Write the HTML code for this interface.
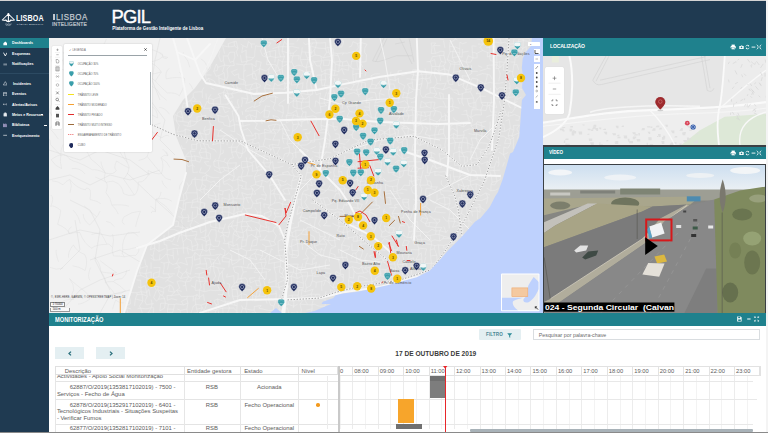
<!DOCTYPE html>
<html><head><meta charset="utf-8">
<style>
*{margin:0;padding:0;box-sizing:border-box}
html,body{width:768px;height:433px;overflow:hidden;background:#fff;font-family:"Liberation Sans",sans-serif}
.abs{position:absolute}
#top{left:0;top:0;width:768px;height:1px;background:#d4d4d4}
#hdr{left:0;top:1px;width:766px;height:37px;background:#1f3a51}
#rstrip{left:766px;top:0;width:2px;height:433px;background:#f4f4f4}
#bstrip{left:0;top:432px;width:768px;height:1px;background:#8a8a8a}
#side{left:0;top:38px;width:49px;height:394px;background:#1f3a51}
.mi{position:absolute;left:0;width:49px;height:10px;color:#fff;font-size:3.65px;line-height:10px;font-weight:bold}
.mi .t{position:absolute;left:12.5px;top:0;white-space:nowrap}
.mi .ic{position:absolute;left:3px;top:0;width:5px;text-align:center;font-size:5px}
#map{left:49px;top:38px;width:494px;height:275px;overflow:hidden;background:#e3e3e3}
#rp{left:543px;top:38px;width:223px;height:275px;background:#fff}
.ph{position:absolute;left:0;width:223px;background:#1f818d;color:#fff;font-weight:bold;font-size:6px}
#mon{left:49px;top:313px;width:717px;height:119px;background:#fff;overflow:hidden}
#monh{left:0;top:0;width:717px;height:12.5px;background:#1f818d;color:#fff;font-weight:bold;font-size:6px}
</style></head><body>
<div id="top" class="abs"></div>
<div id="hdr" class="abs">
  <svg class="abs" style="left:0;top:7px" width="20" height="20" viewBox="0 0 20 20">
    <circle cx="8.4" cy="5.9" r="1" fill="#fff"/>
    <path d="M8.4,6 L2.3,12 L5.6,12.6 M8.4,6 L14.5,12 L11.2,12.6 M8.4,6 V13.6" fill="none" stroke="#fff" stroke-width="1.05" stroke-linejoin="round"/>
    <path d="M5.4,11.6 Q8.4,15.6 11.4,11.6" fill="none" stroke="#fff" stroke-width="1.3"/>
    <path d="M5.2,15.9 q0.8,0.9 1.6,0 q0.8,0.9 1.6,0 q0.8,0.9 1.6,0 q0.8,0.9 1.6,0 M5.8,17 q0.8,0.7 1.6,0 q0.8,0.7 1.6,0 q0.8,0.7 1.6,0" fill="none" stroke="#dfe4ea" stroke-width="0.5"/>
  </svg>
  <div class="abs" style="left:16.3px;top:11.6px;font-size:8.6px;font-weight:bold;color:#fff;letter-spacing:0.15px;line-height:10px;transform:scaleX(0.83);transform-origin:0 0">LISBOA</div>
  <div class="abs" style="left:16.8px;top:21.7px;font-size:2.1px;color:#c9d0d6;letter-spacing:0.36px;line-height:2.2px;white-space:nowrap;font-weight:bold">CÂMARA MUNICIPAL</div>
  <div class="abs" style="left:53px;top:12.6px;width:2px;height:6.4px;background:#c3c9cf"></div><div class="abs" style="left:55.5px;top:12.2px;font-size:8.8px;color:#c3c9cf;letter-spacing:0.6px;line-height:9px;transform:scaleX(0.9);-webkit-text-stroke:0.25px #c3c9cf;transform-origin:0 0">LISBOA</div>
  <div class="abs" style="left:52.4px;top:20.8px;font-size:5.2px;color:#c3c9cf;letter-spacing:0.2px;line-height:5px;transform:scaleX(0.97);-webkit-text-stroke:0.2px #c3c9cf;transform-origin:0 0">INTELIGENTE</div>
  <div class="abs" style="left:111.5px;top:4.8px;font-size:18.4px;color:#fff;line-height:22px;letter-spacing:-0.8px;-webkit-text-stroke:0.4px #fff">PGIL</div>
  <div class="abs" style="left:112.2px;top:25.2px;font-size:4.45px;font-weight:bold;color:#fff;line-height:5px;white-space:nowrap">Plataforma de Gestão Inteligente de Lisboa</div>
</div>
<div id="rstrip" class="abs"></div>
<div id="side" class="abs">
<div class="abs" style="left:0;top:0;width:49px;height:10.2px;background:#1f818d"></div>
<div class="abs" style="left:0;top:35.2px;width:49px;height:0.6px;background:#2c4a62"></div>
<div class="mi" style="top:0.2px"><svg class="abs" style="left:2.6px;top:2.8px" width="4.6" height="4.6" viewBox="0 0 6 6"><path d="M0.5 3 L3 0.6 L5.5 3 V5.5 H0.5 Z" fill="#fff"/></svg><span class="t" style="left:12px">Dashboards</span></div>
<div class="mi" style="top:10.8px"><svg class="abs" style="left:2.6px;top:2.8px" width="4.6" height="4.6" viewBox="0 0 6 6"><path d="M0.6 0.8 L3 5.2 L5.4 0.8" fill="none" stroke="#fff" stroke-width="1.1"/></svg><span class="t" style="left:12px">Esquemas</span></div>
<div class="mi" style="top:20.9px"><svg class="abs" style="left:2.6px;top:2.8px" width="4.6" height="4.6" viewBox="0 0 6 6"><path d="M0.5 2.6 H5.5 M0.5 3.8 H5.5" stroke="#cfd6dc" stroke-width="0.7"/></svg><span class="t" style="left:12px">Notificações</span></div>
<div class="mi" style="top:40.5px"><svg class="abs" style="left:2.6px;top:2.8px" width="4.6" height="4.6" viewBox="0 0 6 6"><path d="M3 0.8 L5.6 5.2 H0.4 Z" fill="none" stroke="#e6eaee" stroke-width="0.7"/></svg><span class="t" style="left:13px">Incidentes</span></div>
<div class="mi" style="top:51.0px"><svg class="abs" style="left:2.6px;top:2.8px" width="4.6" height="4.6" viewBox="0 0 6 6"><rect x="0.8" y="1" width="4.4" height="4.2" fill="none" stroke="#e6eaee" stroke-width="0.7"/><path d="M0.8 2.2 H5.2" stroke="#e6eaee" stroke-width="0.7"/></svg><span class="t" style="left:12px">Eventos</span></div>
<div class="mi" style="top:61.5px"><svg class="abs" style="left:2.6px;top:2.8px" width="4.6" height="4.6" viewBox="0 0 6 6"><path d="M0.3 3 H5.7 M0.3 3 L1.4 2 M0.3 3 L1.4 4 M5.7 3 L4.6 2 M5.7 3 L4.6 4" stroke="#e6eaee" stroke-width="0.6" fill="none"/></svg><span class="t" style="left:12px">Alertas/Avisos</span></div>
<div class="mi" style="top:71.5px"><svg class="abs" style="left:2.6px;top:2.8px" width="4.6" height="4.6" viewBox="0 0 6 6"><path d="M1 2 H5 V5.4 H1 Z M2 2 V1 H4 V2" fill="#e6eaee" stroke="#e6eaee" stroke-width="0.5"/></svg><span class="t" style="left:12px">Meios e Recursos</span></div>
<div class="mi" style="top:82.2px"><svg class="abs" style="left:2.6px;top:2.8px" width="4.6" height="4.6" viewBox="0 0 6 6"><path d="M0.8 0.8 V5.4 M2.2 1.2 V5.4 M3.6 0.8 V5.4 M5 1.6 V5.4" stroke="#c9b8e8" stroke-width="1"/></svg><span class="t" style="left:12px">Biblioteca</span></div>
<div class="mi" style="top:92.6px"><svg class="abs" style="left:2.6px;top:2.8px" width="4.6" height="4.6" viewBox="0 0 6 6"><path d="M0.3 3 H5.7" stroke="#e6eaee" stroke-width="0.9"/></svg><span class="t" style="left:12px">Enriquecimento</span></div>
<div class="abs" style="left:40.5px;top:76.4px;width:2.5px;height:0.5px;background:#fff"></div>
<div class="abs" style="left:44px;top:86.8px;width:3px;height:0.6px;background:#fff"></div>
</div>
<div id="map" class="abs"><!--MAP-->
<svg class="abs" style="left:0;top:0" width="494" height="275" viewBox="49 38 494 275">
<rect x="49" y="38" width="494" height="275" fill="#e1e1e1"/>
<polygon points="49.0,38.0 226.0,38.0 211.6,63.8 204.4,75.2 195.0,88.0 183.0,100.0 173.0,116.0 176.0,136.0 186.0,160.0 186.0,173.0 179.0,199.0 173.0,225.0 147.0,245.0 137.0,271.0 124.0,313.0 49.0,313.0" fill="#f1f1f1"/>
<path d="M47.3 51.8L47.2 56.1M47.4 59.4L48.7 66.8M48.7 66.8L47.6 69.1M47.6 91.7L48.3 99.0M48.3 125.7L48.8 129.2M48.7 158.6L47.7 162.2M47.7 162.2L47.2 167.4M48.6 213.4L47.2 217.3M47.2 217.3L47.7 220.5M47.3 227.6L47.6 230.2M47.6 230.2L48.6 237.2M48.6 237.2L47.4 240.2M48.2 253.9L48.5 260.3M47.8 267.0L48.0 272.5M48.6 313.6L53.0 313.8M48.6 313.6L47.5 319.1M53.0 313.8L57.5 313.3M53.0 313.8L53.9 320.1M53.9 320.1L59.2 317.8M57.5 313.3L62.7 314.7M57.5 313.3L59.2 317.8M59.2 317.8L63.8 319.0M62.7 314.7L67.7 315.5M63.8 319.0L68.3 318.3M67.7 315.5L72.6 313.5M67.7 315.5L68.3 318.3M68.3 318.3L71.5 318.0M72.6 313.5L78.0 313.8M72.6 313.5L71.5 318.0M71.5 318.0L75.7 319.7M78.0 313.8L79.6 313.8M78.0 313.8L75.7 319.7M75.7 319.7L81.2 316.9M79.6 313.8L81.2 316.9M83.9 314.2L87.5 317.2M87.5 317.2L91.6 317.3M95.5 313.7L95.7 320.2M99.5 317.2L105.0 317.6M114.3 313.2L119.7 315.7M119.7 315.7L117.0 318.3M117.0 318.3L122.6 318.4M123.7 315.3L128.8 315.3M123.7 315.3L122.6 318.4M127.5 301.9L127.0 305.3M127.0 305.3L130.5 303.7M126.2 307.7L131.1 308.9M126.2 307.7L128.8 315.3M128.8 315.3L130.0 313.3M130.3 292.6L136.9 292.7M130.1 298.5L130.5 303.7M130.0 313.3L132.3 317.4M136.2 276.0L141.3 275.6M136.6 279.9L140.7 280.2M138.0 286.9L140.8 287.8M136.9 292.7L141.2 291.8M136.9 292.7L137.0 294.7M137.0 294.7L142.0 294.1M137.0 294.7L135.4 298.8M135.4 298.8L142.9 301.0M135.4 298.8L134.6 305.8M137.7 308.6L140.6 308.2M135.2 314.5L142.7 314.2M135.2 314.5L137.7 320.2M141.0 263.6L140.0 268.3M140.0 268.3L147.5 266.2M140.0 268.3L139.5 272.7M139.5 272.7L145.8 273.6M139.5 272.7L141.3 275.6M141.3 275.6L147.0 278.2M140.7 280.2L140.8 287.8M140.8 287.8L145.1 285.6M140.8 287.8L141.2 291.8M141.2 291.8L146.7 292.4M141.2 291.8L142.0 294.1M142.0 294.1L147.3 296.3M142.0 294.1L142.9 301.0M142.9 301.0L139.5 306.1M139.5 306.1L140.6 308.2M140.6 308.2L146.1 308.8M140.6 308.2L142.7 314.2M142.7 314.2L142.0 317.2M142.0 317.2L143.9 318.0M144.7 259.1L145.7 265.1M145.7 265.1L147.5 266.2M147.5 266.2L145.8 273.6M145.8 273.6L151.2 271.9M145.8 273.6L147.0 278.2M147.0 278.2L151.2 279.0M147.0 278.2L146.1 282.3M146.1 282.3L150.0 281.0M145.1 285.6L146.7 292.4M146.7 292.4L148.8 289.1M146.7 292.4L147.3 296.3M147.3 296.3L144.9 301.2M144.9 301.2L146.5 304.8M146.5 304.8L152.1 303.8M146.1 308.8L151.2 307.8M145.8 313.6L148.4 312.6M145.8 313.6L143.9 318.0M143.9 318.0L148.5 318.6M151.4 244.7L154.8 244.0M151.4 244.7L150.3 249.9M150.3 249.9L154.5 248.1M150.4 254.8L153.0 256.1M150.6 258.2L154.1 260.2M151.1 262.5L151.0 269.0M151.2 271.9L151.2 279.0M151.2 279.0L153.5 278.1M151.2 279.0L150.0 281.0M150.3 288.1L154.2 286.4M148.8 289.1L150.1 296.2M151.2 299.7L152.1 303.8M152.1 303.8L153.9 303.6M152.1 303.8L151.2 307.8M151.2 307.8L153.9 307.8M151.2 307.8L148.4 312.6M148.4 312.6L153.1 314.0M148.4 312.6L148.5 318.6M148.5 318.6L154.5 318.8M155.5 238.6L154.8 244.0M154.8 244.0L159.2 243.4M154.8 244.0L154.5 248.1M154.5 248.1L159.0 251.5M154.5 248.1L153.0 256.1M153.0 256.1L154.1 260.2M154.1 260.2L159.3 259.9M153.4 267.7L160.1 267.5M153.6 273.3L159.5 271.6M153.6 273.3L153.5 278.1M153.5 278.1L158.9 276.6M154.8 280.3L154.2 286.4M154.2 286.4L158.3 286.7M154.2 286.4L156.4 290.4M156.4 290.4L153.7 297.4M153.7 297.4L156.3 301.1M156.3 301.1L158.7 299.2M153.9 307.8L153.1 314.0M153.1 314.0L158.3 313.7M154.5 318.8L160.5 319.0M160.6 240.5L159.2 243.4M159.2 243.4L159.0 251.5M159.0 251.5L165.1 248.5M160.1 254.0L159.3 259.9M159.3 259.9L162.3 258.1M160.4 262.1L164.1 263.1M160.1 267.5L159.5 271.6M159.5 271.6L158.9 276.6M158.9 276.6L163.2 278.0M158.3 286.7L163.8 288.1M158.3 286.7L157.7 289.8M157.7 289.8L163.8 292.4M157.7 289.8L160.2 294.7M160.2 294.7L162.3 295.3M160.2 294.7L158.7 299.2M158.7 299.2L164.5 298.5M160.7 303.2L165.4 303.2M160.7 303.2L159.9 310.8M159.9 310.8L164.4 308.2M158.3 313.7L165.6 314.2M158.3 313.7L160.5 319.0M164.1 235.3L163.9 240.4M163.9 240.4L169.0 240.3M163.9 240.4L164.3 244.5M164.3 244.5L166.8 245.1M165.6 254.4L167.2 254.5M165.6 254.4L162.3 258.1M164.1 263.1L169.2 262.1M164.1 263.1L164.2 267.3M164.2 267.3L163.1 273.7M163.1 273.7L168.0 273.9M163.2 278.0L170.0 277.1M165.1 282.1L167.3 280.3M163.8 288.1L170.0 284.9M163.8 288.1L163.8 292.4M163.8 292.4L162.3 295.3M162.3 295.3L164.5 298.5M164.5 298.5L165.4 303.2M165.4 303.2L168.6 304.3M165.4 303.2L164.4 308.2M165.6 314.2L167.5 312.6M165.6 314.2L165.1 318.6M165.1 318.6L167.6 320.0M168.8 229.7L174.9 229.7M168.8 229.7L168.8 236.9M168.8 236.9L175.0 236.9M169.0 240.3L172.3 241.7M166.8 245.1L167.1 250.2M167.1 250.2L173.0 248.6M167.1 250.2L167.2 254.5M167.2 254.5L173.2 255.8M167.2 254.5L168.0 258.3M168.0 258.3L169.2 262.1M169.2 262.1L172.8 264.5M169.2 262.1L167.3 269.7M168.0 273.9L174.9 273.8M168.0 273.9L170.0 277.1M170.0 277.1L172.8 275.6M170.0 277.1L167.3 280.3M167.3 280.3L173.8 283.1M170.0 284.9L172.6 286.8M170.0 284.9L168.6 291.1M168.6 291.1L174.5 292.1M167.1 295.5L171.3 295.6M167.1 295.5L167.3 300.3M167.3 300.3L171.4 298.7M168.6 304.3L174.4 304.5M168.6 304.3L167.5 309.0M167.5 309.0L173.6 309.2M167.5 309.0L167.5 312.6M167.5 312.6L172.6 312.9M174.8 114.3L176.9 115.6M174.8 114.3L174.9 120.5M174.6 221.2L178.8 221.2M175.0 226.7L178.0 226.3M174.9 229.7L179.6 231.8M175.0 236.9L172.3 241.7M172.2 243.9L178.6 245.7M173.0 248.6L177.0 248.3M173.0 248.6L173.2 255.8M173.2 255.8L173.9 259.6M172.8 264.5L176.4 263.5M174.3 268.7L179.2 266.7M172.6 286.8L174.5 292.1M174.5 292.1L176.6 290.3M174.5 292.1L171.3 295.6M171.3 295.6L179.5 294.4M171.4 298.7L177.1 300.0M174.4 304.5L176.3 303.9M174.4 304.5L173.6 309.2M173.6 309.2L172.6 312.9M172.6 312.9L172.6 319.9M172.6 319.9L176.7 320.2M177.6 112.8L180.9 110.9M177.6 112.8L176.9 115.6M176.9 115.6L183.0 118.0M176.9 115.6L176.3 121.0M176.3 121.0L182.9 121.5M176.3 121.0L179.2 125.5M179.2 125.5L177.3 131.6M177.3 131.6L184.1 130.9M177.3 131.6L179.3 135.2M179.3 135.2L181.8 134.2M179.5 200.5L183.9 200.5M178.1 206.5L183.0 209.6M178.3 216.6L183.2 217.8M178.8 221.2L178.0 226.3M178.0 226.3L182.8 227.8M179.6 231.8L181.5 230.1M179.6 231.8L179.0 236.5M179.0 236.5L181.4 234.3M179.0 236.5L177.3 242.2M177.0 248.3L183.2 248.0M177.0 248.3L178.1 255.4M178.9 258.2L176.4 263.5M176.4 263.5L181.0 262.5M176.4 263.5L179.2 266.7M179.2 266.7L180.7 267.8M179.2 266.7L178.7 271.3M178.7 271.3L182.6 273.8M178.7 271.3L177.1 275.5M177.1 275.5L180.7 278.4M177.0 281.4L180.9 280.8M177.0 281.4L179.6 288.2M179.6 288.2L176.6 290.3M176.6 290.3L181.8 291.3M176.6 290.3L179.5 294.4M179.5 294.4L181.3 296.7M176.3 303.9L183.6 304.9M177.4 309.0L180.6 310.5M179.6 313.1L176.7 320.2M176.7 320.2L182.1 316.9M183.4 103.1L185.9 103.2M183.4 103.1L182.1 108.2M182.1 108.2L185.8 106.1M180.9 110.9L183.0 118.0M183.0 118.0L182.9 121.5M182.9 121.5L188.7 122.4M183.4 125.0L187.8 126.2M184.1 130.9L185.3 128.9M181.8 134.2L185.1 136.0M181.2 145.2L182.5 148.5M182.5 148.5L185.7 148.9M183.4 194.4L185.6 192.9M183.4 194.4L183.9 200.5M183.9 200.5L187.2 199.0M183.9 200.5L183.3 204.8M183.3 204.8L185.9 202.7M183.3 204.8L183.0 209.6M183.0 209.6L185.2 209.8M183.0 209.6L181.0 213.6M181.0 213.6L183.2 217.8M183.2 217.8L188.8 217.2M183.2 217.8L181.5 220.4M181.5 220.4L182.8 227.8M182.8 227.8L188.2 227.9M182.8 227.8L181.5 230.1M181.5 230.1L181.4 234.3M181.4 234.3L185.9 236.1M181.4 234.3L183.1 242.2M183.1 242.2L186.5 238.5M183.1 242.2L183.5 244.5M183.5 244.5L183.2 248.0M183.2 248.0L186.9 247.9M183.2 248.0L183.7 253.5M181.0 262.5L187.5 264.9M182.6 273.8L185.9 271.6M182.6 273.8L180.7 278.4M180.7 278.4L188.5 276.8M180.9 280.8L185.5 282.1M182.9 285.8L185.6 285.3M181.3 296.7L187.5 296.4M181.3 301.5L186.8 298.6M181.3 301.5L183.6 304.9M183.6 304.9L187.9 303.1M180.6 310.5L186.9 309.0M180.6 310.5L180.6 314.0M180.6 314.0L182.1 316.9M185.9 103.2L190.3 100.6M185.9 103.2L185.8 106.1M187.2 112.4L193.4 112.4M187.2 112.4L188.8 117.1M188.8 117.1L190.4 117.4M188.7 122.4L190.3 120.8M188.7 122.4L187.8 126.2M187.8 126.2L190.1 126.5M185.3 128.9L193.1 131.6M185.3 128.9L185.1 136.0M185.1 136.0L189.7 135.9M187.8 139.7L186.1 143.3M188.9 152.3L185.3 156.4M185.3 156.4L191.8 156.8M185.3 156.4L186.4 163.7M186.4 163.7L191.2 160.3M186.4 163.7L188.2 166.6M188.2 166.6L192.5 165.0M186.9 182.5L188.6 186.3M188.6 186.3L191.3 183.7M188.6 186.3L186.9 191.0M186.9 191.0L185.6 192.9M185.6 192.9L191.0 192.9M185.6 192.9L187.2 199.0M185.9 202.7L192.9 202.1M185.9 202.7L185.2 209.8M187.8 214.5L188.8 217.2M188.8 217.2L187.9 221.6M187.9 221.6L192.6 220.1M188.2 227.9L185.6 229.3M185.6 229.3L185.9 236.1M185.9 236.1L191.7 235.6M185.9 236.1L186.5 238.5M186.5 238.5L191.2 240.8M188.3 246.1L186.9 247.9M186.9 247.9L192.5 250.7M186.9 247.9L188.5 254.3M185.4 258.1L192.4 257.0M185.4 258.1L187.5 264.9M186.9 268.5L185.9 271.6M185.9 271.6L190.4 274.3M185.9 271.6L188.5 276.8M188.5 276.8L191.4 278.0M188.5 276.8L185.5 282.1M185.5 282.1L190.7 281.0M185.5 282.1L185.6 285.3M185.6 285.3L186.8 291.3M187.5 296.4L193.4 296.2M187.5 296.4L186.8 298.6M186.8 298.6L187.9 303.1M187.9 303.1L186.9 309.0M186.9 309.0L187.7 314.8M187.7 314.8L190.6 313.7M187.7 314.8L186.0 319.2M186.0 319.2L189.8 317.6M193.2 93.7L194.6 92.1M193.2 93.7L193.2 96.9M193.2 96.9L195.4 99.3M193.2 96.9L190.3 100.6M190.3 100.6L194.4 101.5M190.3 100.6L192.6 105.5M192.6 105.5L197.0 108.9M192.6 105.5L193.4 112.4M193.4 112.4L195.0 111.4M193.4 112.4L190.4 117.4M190.3 120.8L197.1 121.8M190.3 120.8L190.1 126.5M190.1 126.5L195.2 124.5M189.7 135.9L195.1 133.7M191.8 140.4L198.0 139.7M191.6 144.3L196.5 144.4M191.6 144.3L192.0 149.5M192.0 149.5L196.6 149.1M192.0 149.5L190.0 151.3M190.0 151.3L195.5 151.3M190.0 151.3L191.8 156.8M191.8 156.8L194.6 155.8M191.8 156.8L191.2 160.3M191.2 160.3L195.7 160.8M191.2 160.3L192.5 165.0M192.5 165.0L194.7 166.8M192.5 165.0L192.9 172.6M192.9 172.6L198.0 172.1M192.2 179.5L195.0 179.1M192.2 179.5L191.3 183.7M191.0 192.9L197.1 192.9M192.5 200.3L197.8 198.4M192.5 200.3L192.9 202.1M192.9 202.1L197.5 201.8M192.9 202.1L191.1 207.5M191.1 207.5L197.4 207.2M192.6 211.5L192.0 219.2M192.0 219.2L196.8 216.6M192.0 219.2L192.6 220.1M192.6 220.1L190.0 225.1M190.0 225.1L192.3 231.6M192.3 231.6L196.8 231.5M191.7 235.6L196.8 234.6M191.2 240.8L192.2 246.6M192.2 246.6L198.0 244.6M192.2 246.6L192.5 250.7M192.5 250.7L196.8 249.9M193.2 255.5L195.1 252.5M193.2 255.5L192.4 257.0M192.4 257.0L192.3 264.7M192.3 264.7L191.3 269.4M191.3 269.4L190.4 274.3M191.4 278.0L195.3 276.7M191.4 278.0L190.7 281.0M191.0 285.7L195.2 287.5M193.4 296.2L197.2 294.6M193.4 296.2L193.2 301.2M192.9 306.7L195.8 304.3M192.9 306.7L192.6 308.5M192.6 308.5L190.6 313.7M190.6 313.7L197.6 312.3M190.6 313.7L189.8 317.6M194.6 92.1L202.2 91.7M195.4 99.3L194.4 101.5M194.4 101.5L199.8 101.1M197.0 108.9L202.2 105.9M195.0 111.4L199.2 110.7M196.9 116.9L202.4 116.1M196.9 116.9L197.1 121.8M197.1 121.8L201.7 119.2M197.1 121.8L195.2 124.5M194.4 130.7L199.7 130.6M195.1 133.7L200.3 133.2M195.1 133.7L198.0 139.7M198.0 139.7L202.6 139.1M198.0 139.7L196.5 144.4M196.5 144.4L199.6 141.9M196.5 144.4L196.6 149.1M194.6 155.8L201.7 157.7M194.6 155.8L195.7 160.8M195.7 160.8L199.8 162.2M195.3 177.0L195.0 179.1M195.0 179.1L202.2 180.1M195.0 179.1L195.5 184.9M195.5 184.9L196.9 189.6M196.9 189.6L199.8 190.2M196.9 189.6L197.1 192.9M197.1 192.9L197.8 198.4M197.8 198.4L197.5 201.8M197.5 201.8L200.6 202.2M197.4 207.2L199.6 209.1M197.4 207.2L197.5 214.0M197.5 214.0L201.1 214.5M197.5 214.0L196.8 216.6M194.3 220.8L198.9 223.7M197.7 225.3L199.8 226.5M196.8 231.5L196.8 234.6M196.8 234.6L194.8 238.9M194.8 238.9L201.3 239.3M194.8 238.9L198.0 244.6M198.0 244.6L196.8 249.9M196.8 249.9L202.7 249.4M195.1 252.5L199.8 256.0M195.1 252.5L194.4 260.1M194.4 260.1L200.1 258.4M194.8 265.2L200.2 264.0M195.7 268.8L199.0 267.5M194.8 273.7L199.5 273.8M195.3 276.7L198.9 277.6M196.3 280.3L199.9 281.6M196.3 280.3L195.2 287.5M195.2 287.5L195.4 290.5M195.4 290.5L199.4 290.0M197.2 294.6L199.4 297.3M197.2 294.6L195.0 299.1M195.0 299.1L199.5 298.8M195.0 299.1L195.8 304.3M195.8 304.3L200.9 305.1M195.8 304.3L196.7 309.3M196.7 309.3L202.3 307.7M196.7 309.3L197.6 312.3M197.6 312.3L196.8 319.9M196.8 319.9L201.1 318.4M202.2 90.4L203.9 87.6M202.2 90.4L202.2 91.7M202.2 91.7L202.5 97.9M199.8 101.1L202.2 105.9M202.2 105.9L203.8 108.5M202.2 105.9L199.2 110.7M199.2 110.7L202.4 116.1M202.4 116.1L206.1 115.3M202.4 116.1L201.7 119.2M201.7 119.2L204.4 120.3M199.7 130.6L200.3 133.2M200.3 133.2L205.9 134.5M200.3 133.2L202.6 139.1M202.6 139.1L206.1 140.3M202.6 139.1L199.6 141.9M199.6 141.9L203.5 143.7M199.6 141.9L201.4 148.5M201.4 148.5L206.1 149.2M201.4 148.5L199.0 152.9M199.0 152.9L206.0 151.8M199.0 152.9L201.7 157.7M201.7 157.7L207.1 158.7M201.7 157.7L199.8 162.2M201.2 167.4L199.5 172.6M199.5 172.6L205.1 173.2M202.5 176.9L206.9 175.0M202.5 176.9L202.2 180.1M202.2 180.1L206.3 180.1M202.2 180.1L202.3 184.0M202.3 184.0L206.0 186.2M202.3 184.0L199.8 190.2M199.8 190.2L204.0 188.7M199.8 190.2L202.3 192.8M199.7 197.2L200.6 202.2M200.6 202.2L205.0 203.3M200.6 202.2L199.6 209.1M199.6 209.1L203.8 208.5M199.6 209.1L201.1 214.5M201.1 214.5L207.1 213.1M201.1 214.5L200.4 218.1M200.4 218.1L204.9 218.2M199.8 226.5L205.3 224.8M199.8 226.5L200.8 232.9M200.8 232.9L206.1 229.9M200.8 237.7L204.9 237.6M201.3 239.3L206.4 241.7M202.1 243.9L202.7 249.4M202.7 249.4L206.2 251.4M202.7 249.4L199.8 256.0M199.8 256.0L204.2 255.2M199.8 256.0L200.1 258.4M200.1 258.4L200.2 264.0M200.2 264.0L206.6 263.8M199.0 267.5L206.7 269.4M199.5 273.8L205.7 271.5M199.5 273.8L198.9 277.6M198.9 277.6L203.6 277.3M198.9 277.6L199.9 281.6M199.9 281.6L206.3 280.9M199.9 281.6L201.0 287.2M201.0 287.2L199.4 290.0M199.4 290.0L204.2 291.7M199.4 290.0L199.4 297.3M199.4 297.3L203.5 294.6M199.4 297.3L199.5 298.8M200.9 305.1L207.3 303.0M200.9 305.1L202.3 307.7M202.3 307.7L203.9 311.1M202.3 307.7L199.8 312.7M199.8 312.7L201.1 318.4M201.1 318.4L204.8 318.7M207.2 71.6L210.0 69.0M207.2 71.6L205.1 74.9M205.1 74.9L211.6 75.0M205.1 74.9L206.7 80.6M206.7 80.6L208.3 78.1M206.0 84.0L210.7 83.6M206.0 93.5L206.5 99.3M207.2 101.2L208.8 103.2M207.2 101.2L203.8 108.5M203.8 108.5L211.2 108.1M206.1 115.3L204.4 120.3M204.4 120.3L208.6 119.6M205.5 126.1L203.8 130.9M203.8 130.9L210.5 129.0M203.8 130.9L205.9 134.5M205.9 134.5L209.1 134.3M205.9 134.5L206.1 140.3M206.1 140.3L210.1 140.1M206.1 140.3L203.5 143.7M203.5 143.7L208.2 144.7M203.5 143.7L206.1 149.2M206.1 149.2L206.0 151.8M206.0 151.8L210.5 153.7M206.0 151.8L207.1 158.7M207.1 158.7L210.4 159.1M204.4 161.9L208.9 161.5M204.4 161.9L207.1 165.7M207.1 165.7L210.6 165.9M205.1 173.2L208.7 170.4M205.1 173.2L206.9 175.0M206.9 175.0L211.0 177.2M206.9 175.0L206.3 180.1M206.3 180.1L210.8 182.3M206.0 186.2L204.0 188.7M204.0 188.7L209.3 190.6M204.0 188.7L204.3 193.5M204.3 193.5L208.3 194.8M205.0 203.3L203.8 208.5M203.8 208.5L207.1 213.1M207.1 213.1L204.9 218.2M204.9 218.2L208.6 217.4M204.9 218.2L205.2 220.8M205.2 220.8L210.1 221.5M205.2 220.8L205.3 224.8M205.3 224.8L206.1 229.9M206.1 229.9L204.9 237.6M204.9 237.6L208.4 235.4M204.9 237.6L206.4 241.7M206.4 241.7L209.9 239.5M206.4 241.7L205.9 245.5M205.9 245.5L210.6 243.9M205.9 245.5L206.2 251.4M206.2 251.4L209.3 249.5M204.2 255.2L210.8 255.2M204.6 257.9L209.5 258.6M204.6 257.9L206.6 263.8M206.6 263.8L206.7 269.4M206.7 269.4L210.5 266.5M206.7 269.4L205.7 271.5M205.7 271.5L209.8 273.1M203.6 277.3L206.3 280.9M206.3 280.9L211.8 283.4M206.3 280.9L203.8 284.5M203.8 284.5L204.2 291.7M204.2 291.7L210.5 290.2M203.5 294.6L204.5 301.0M207.3 303.0L203.9 311.1M203.9 311.1L207.2 312.7M207.2 312.7L208.3 313.2M210.9 65.0L210.0 69.0M208.3 78.1L214.5 81.1M208.3 78.1L210.7 83.6M210.8 87.6L214.5 89.4M211.1 94.3L208.5 98.1M208.5 98.1L213.4 99.5M208.5 98.1L208.8 103.2M208.8 103.2L213.1 103.6M211.2 108.1L214.0 106.0M209.0 110.1L213.7 111.5M210.6 116.4L208.6 119.6M208.6 119.6L215.9 120.1M208.6 119.6L210.3 123.9M210.3 123.9L213.4 126.3M210.3 123.9L210.5 129.0M210.5 129.0L209.1 134.3M210.1 140.1L216.0 139.5M208.2 144.7L208.9 147.6M208.9 147.6L215.0 149.9M210.5 153.7L210.4 159.1M210.6 165.9L208.7 170.4M211.0 177.2L213.6 177.6M210.8 182.3L214.3 181.1M211.1 184.5L216.1 186.2M211.1 184.5L209.3 190.6M209.3 190.6L208.3 194.8M208.3 194.8L215.8 196.3M208.3 194.8L208.4 197.3M208.4 197.3L215.5 200.0M211.6 209.6L215.2 207.7M209.9 211.7L215.9 211.4M209.9 211.7L208.6 217.4M208.6 217.4L214.7 216.8M210.1 221.5L210.8 226.7M210.8 226.7L215.9 227.9M211.0 229.7L216.0 229.8M211.0 229.7L208.4 235.4M208.4 235.4L209.9 239.5M209.9 239.5L210.6 243.9M210.6 243.9L212.9 246.4M210.6 243.9L209.3 249.5M209.3 249.5L214.8 249.4M209.3 249.5L210.8 255.2M210.8 255.2L214.0 255.3M209.5 258.6L215.7 260.2M209.5 258.6L211.6 265.0M211.6 265.0L213.5 262.8M211.6 265.0L210.5 266.5M210.5 266.5L213.6 266.5M210.5 266.5L209.8 273.1M209.8 273.1L209.2 275.4M211.8 283.4L213.0 280.2M208.6 286.3L215.5 285.3M210.5 290.2L214.5 290.6M211.0 300.0L208.4 304.4M208.5 311.2L216.1 310.3M208.5 311.2L208.3 313.2M211.0 317.2L214.9 317.1M216.4 64.1L217.8 67.2M216.4 64.1L213.7 71.1M213.7 71.1L217.4 70.5M213.7 71.1L216.1 76.3M216.1 76.3L218.9 75.6M214.5 81.1L215.0 83.2M215.0 83.2L219.3 85.2M213.4 99.5L220.3 96.7M213.4 99.5L213.1 103.6M213.1 103.6L220.7 104.3M213.1 103.6L214.0 106.0M214.0 106.0L218.9 106.5M214.0 106.0L213.7 111.5M213.7 111.5L216.5 114.9M216.5 114.9L218.1 115.4M213.4 126.3L214.0 128.8M214.0 128.8L219.2 130.6M214.0 128.8L214.3 135.8M216.0 139.5L221.1 139.4M216.0 139.5L212.7 144.8M212.7 144.8L220.3 142.6M215.0 149.9L216.3 152.3M215.9 158.8L213.7 161.7M213.7 161.7L218.1 160.4M213.7 161.7L214.1 166.2M214.1 166.2L219.2 168.3M214.1 169.9L220.7 173.1M213.6 177.6L219.2 177.6M214.3 181.1L216.1 186.2M216.1 186.2L219.7 186.4M213.6 191.4L215.8 196.3M215.8 196.3L215.5 200.0M215.5 200.0L218.9 199.1M215.5 200.0L215.8 202.7M215.8 202.7L219.1 202.1M215.2 207.7L215.9 211.4M215.9 211.4L214.7 216.8M214.7 216.8L218.2 216.5M214.7 216.8L215.8 221.4M215.8 221.4L215.9 227.9M215.9 227.9L219.6 228.1M216.0 229.8L216.3 236.7M216.3 236.7L215.3 241.0M215.3 241.0L220.0 241.2M212.9 246.4L218.3 246.3M214.0 255.3L220.9 254.0M215.7 260.2L217.6 257.2M215.7 260.2L213.5 262.8M213.5 262.8L220.3 264.1M213.5 262.8L213.6 266.5M213.6 266.5L217.8 267.8M213.6 266.5L213.9 270.8M213.9 270.8L215.7 276.2M215.7 276.2L213.0 280.2M214.5 290.6L219.6 290.3M213.9 300.7L217.6 299.0M213.9 300.7L216.1 304.7M216.1 304.7L218.5 304.8M216.1 304.7L216.1 310.3M216.1 310.3L218.0 309.3M216.1 310.3L213.9 315.4M213.9 315.4L219.0 315.8M214.9 317.1L219.1 320.3M219.8 50.7L218.7 55.9M218.7 55.9L220.9 61.7M220.9 61.7L223.5 60.4M217.8 67.2L224.5 65.2M217.8 67.2L217.4 70.5M218.9 75.6L224.1 72.9M218.9 75.6L218.9 77.9M218.9 77.9L225.1 80.3M218.9 77.9L219.3 85.2M220.3 88.1L225.4 88.2M218.1 94.1L223.5 92.4M218.1 94.1L220.3 96.7M220.3 96.7L220.7 104.3M220.7 104.3L224.7 104.1M218.9 106.5L222.5 106.5M218.9 106.5L220.0 113.2M218.1 115.4L224.1 116.9M218.1 115.4L218.6 121.7M218.6 121.7L223.2 122.5M219.2 130.6L222.6 128.5M219.2 130.6L217.8 136.3M217.8 136.3L225.3 135.7M221.1 139.4L220.3 142.6M220.3 142.6L223.7 143.8M220.3 142.6L220.8 148.6M220.8 148.6L220.2 154.4M220.2 154.4L223.2 153.1M220.2 154.4L218.7 159.2M218.1 160.4L223.7 161.6M218.1 160.4L219.2 168.3M219.2 168.3L223.4 167.2M219.2 168.3L220.7 173.1M220.7 173.1L224.9 170.5M219.4 179.2L219.7 186.4M219.7 186.4L218.9 190.2M218.9 190.2L223.2 191.0M218.3 193.5L222.5 195.1M218.3 193.5L218.9 199.1M218.9 199.1L219.1 202.1M217.3 207.6L222.5 207.2M220.0 213.7L222.1 211.9M220.0 213.7L218.2 216.5M218.2 216.5L224.7 218.2M219.3 220.8L219.6 228.1M219.6 228.1L224.0 228.2M219.6 228.1L218.1 231.5M218.1 231.5L222.2 232.8M220.0 236.7L223.5 234.6M220.0 241.2L218.3 246.3M220.8 247.9L225.2 250.6M220.9 254.0L224.2 256.0M220.9 254.0L217.6 257.2M217.6 257.2L220.3 264.1M217.8 267.8L224.6 268.5M217.8 267.8L219.7 274.5M219.7 274.5L222.3 271.3M219.7 274.5L218.6 278.2M218.6 278.2L218.2 280.7M218.2 280.7L224.5 283.6M218.2 280.7L217.9 286.1M217.9 286.1L219.6 290.3M219.6 290.3L223.6 290.6M217.9 294.5L222.9 294.6M217.6 299.0L225.6 302.1M217.6 299.0L218.5 304.8M218.0 309.3L222.6 308.1M218.0 309.3L219.0 315.8M219.1 320.3L222.1 318.7M222.5 45.6L228.7 47.0M222.5 45.6L224.6 53.6M223.4 55.8L227.8 56.0M223.4 55.8L223.5 60.4M223.5 60.4L224.5 65.2M224.5 65.2L230.0 65.8M224.5 65.2L222.5 71.6M222.5 71.6L224.1 72.9M224.1 72.9L225.1 80.3M225.1 80.3L226.5 80.5M225.1 80.3L223.2 84.5M223.2 84.5L225.4 88.2M225.4 88.2L223.5 92.4M223.5 92.4L228.1 93.8M223.5 92.4L224.0 98.4M224.0 98.4L228.7 98.7M224.7 104.1L228.1 104.1M222.5 106.5L230.1 108.6M222.5 106.5L225.1 112.7M225.1 112.7L228.8 110.9M224.1 116.9L227.9 115.3M223.2 122.5L224.0 125.0M224.0 125.0L229.5 126.6M225.3 135.7L227.7 135.6M225.3 135.7L222.0 138.5M222.0 138.5L227.5 139.6M222.0 138.5L223.7 143.8M223.3 149.9L223.2 153.1M225.4 158.1L223.7 161.6M223.7 161.6L227.1 163.2M223.4 167.2L228.7 168.3M223.4 167.2L224.9 170.5M224.9 170.5L228.7 171.1M223.3 175.6L230.0 174.4M223.3 175.6L223.3 182.2M223.3 182.2L229.5 179.1M223.3 182.2L223.9 184.3M223.9 184.3L227.6 183.7M223.2 191.0L229.8 189.6M223.2 191.0L222.5 195.1M222.0 197.8L229.3 199.6M222.0 197.8L222.1 204.8M222.1 204.8L226.9 203.6M222.5 207.2L229.2 207.1M222.5 207.2L222.1 211.9M222.1 211.9L229.0 212.0M222.1 211.9L224.7 218.2M224.7 218.2L227.9 219.0M225.4 223.7L224.0 228.2M224.0 228.2L222.2 232.8M222.2 232.8L229.6 232.2M222.2 232.8L223.5 234.6M223.5 234.6L228.2 237.2M223.5 234.6L224.7 241.8M224.7 241.8L223.4 243.5M223.4 243.5L228.3 243.6M225.2 250.6L224.2 256.0M224.2 256.0L229.1 252.5M224.2 256.0L222.0 257.1M222.0 257.1L230.3 259.0M222.0 257.1L222.4 261.6M222.4 261.6L229.3 262.0M224.6 268.5L222.3 271.3M222.3 271.3L222.6 277.6M222.6 277.6L224.5 283.6M223.3 288.2L223.6 290.6M223.6 290.6L222.9 294.6M222.9 294.6L225.6 302.1M225.6 302.1L227.8 301.8M225.6 302.1L224.6 303.6M222.6 308.1L229.6 308.0M222.6 308.1L223.2 314.9M223.2 314.9L222.1 318.7M222.1 318.7L227.8 317.3M228.2 43.7L234.1 41.7M228.2 43.7L228.7 47.0M228.7 47.0L234.6 46.1M229.8 52.2L234.5 52.2M229.8 52.2L227.8 56.0M227.8 56.0L230.1 62.4M230.1 62.4L233.5 61.1M230.0 65.8L234.3 65.4M230.0 65.8L227.0 69.0M227.0 69.0L228.0 75.5M228.0 75.5L226.5 80.5M229.5 84.1L232.9 85.2M226.5 89.7L234.8 90.2M226.5 89.7L228.1 93.8M228.1 93.8L231.7 93.9M228.1 93.8L228.7 98.7M228.7 98.7L233.2 97.4M228.7 98.7L228.1 104.1M228.1 104.1L231.7 101.0M227.9 115.3L229.9 121.9M229.9 121.9L233.3 119.5M229.9 121.9L229.5 126.6M229.5 126.6L234.5 124.9M230.3 130.7L234.7 131.8M227.7 135.6L231.6 134.9M227.5 139.6L227.1 145.2M228.4 147.5L231.2 147.3M230.0 158.6L233.5 157.8M230.0 158.6L227.1 163.2M227.1 163.2L234.7 162.9M227.1 163.2L228.7 168.3M228.7 168.3L232.5 168.5M228.7 168.3L228.7 171.1M228.7 171.1L230.0 174.4M230.0 174.4L234.4 176.6M229.5 179.1L232.5 181.0M227.6 183.7L232.2 187.0M229.8 189.6L232.0 191.6M229.3 193.5L229.3 199.6M229.3 199.6L233.2 197.9M229.3 199.6L226.9 203.6M226.9 203.6L233.0 202.1M226.9 203.6L229.2 207.1M229.2 207.1L229.0 212.0M229.0 212.0L233.7 214.4M229.0 212.0L227.9 219.0M227.9 219.0L234.9 218.1M230.1 223.9L233.8 220.1M230.1 223.9L228.1 226.9M228.1 226.9L231.3 226.3M228.1 226.9L229.6 232.2M229.6 232.2L228.2 237.2M228.0 242.1L232.7 241.9M228.0 242.1L228.3 243.6M228.3 243.6L233.3 246.2M228.3 243.6L229.3 248.3M229.1 252.5L231.8 255.5M230.3 259.0L231.5 260.4M230.3 259.0L229.3 262.0M229.3 262.0L228.9 267.5M227.4 273.8L226.6 277.1M226.6 277.1L233.8 275.6M226.8 283.1L229.9 284.6M229.9 284.6L228.3 290.9M228.3 290.9L229.2 296.5M227.8 301.8L234.7 302.1M227.8 301.8L227.2 303.4M227.2 303.4L234.9 305.3M227.2 303.4L229.6 308.0M229.6 308.0L233.6 308.1M229.6 308.0L227.2 314.0M227.2 314.0L233.9 314.2M227.2 314.0L227.8 317.3M227.8 317.3L232.5 320.1M234.1 41.7L236.3 41.3M234.1 41.7L234.6 46.1M234.6 46.1L237.9 48.3M234.5 52.2L234.8 57.4M234.8 57.4L233.5 61.1M233.5 61.1L234.3 65.4M231.5 71.8L237.3 69.2M231.5 71.8L234.2 75.5M234.2 75.5L238.6 73.8M232.9 85.2L236.1 83.9M232.9 85.2L234.8 90.2M234.8 90.2L237.2 88.0M234.8 90.2L231.7 93.9M231.7 93.9L238.6 92.1M231.7 93.9L233.2 97.4M231.7 101.0L232.9 107.0M232.9 107.0L239.2 107.4M232.1 111.1L236.4 110.0M232.1 111.1L233.2 117.2M233.2 117.2L233.3 119.5M233.3 119.5L234.5 124.9M234.5 124.9L237.3 124.7M234.5 124.9L234.7 131.8M231.6 134.9L234.8 138.8M234.8 138.8L236.9 138.5M234.8 138.8L233.2 143.1M233.2 143.1L231.2 147.3M231.2 147.3L237.3 147.1M231.2 147.3L231.6 152.2M231.6 152.2L235.9 151.6M231.6 152.2L233.5 157.8M234.7 162.9L236.3 162.7M232.5 168.5L235.9 166.8M232.5 168.5L233.5 171.6M233.5 171.6L234.4 176.6M234.4 176.6L232.5 181.0M232.5 181.0L237.6 179.3M232.2 187.0L232.0 191.6M232.0 191.6L238.2 188.2M231.3 192.5L233.2 197.9M233.2 197.9L236.5 198.6M233.2 197.9L233.0 202.1M233.0 202.1L236.5 202.0M233.0 202.1L234.3 208.8M234.3 208.8L233.7 214.4M233.7 214.4L237.0 211.9M233.7 214.4L234.9 218.1M234.9 218.1L238.2 216.3M233.8 220.1L231.3 226.3M231.3 226.3L237.3 225.3M231.3 226.3L234.8 230.5M234.8 230.5L236.0 231.4M234.8 230.5L233.3 233.9M233.3 233.9L239.5 237.4M233.3 233.9L232.7 241.9M232.7 241.9L233.3 246.2M233.3 246.2L237.6 243.8M231.1 248.5L238.2 249.6M231.8 255.5L231.5 260.4M231.5 260.4L239.2 260.0M231.5 260.4L232.1 264.8M232.1 264.8L237.5 262.0M233.1 267.3L237.5 266.6M233.1 267.3L234.8 272.2M234.8 272.2L238.3 273.4M233.8 275.6L234.3 283.6M234.3 283.6L235.9 282.6M234.3 283.6L231.5 287.3M231.5 287.3L238.7 284.9M231.5 287.3L232.1 289.7M232.1 289.7L236.9 289.3M232.1 289.7L232.5 296.2M232.5 296.2L237.9 296.4M232.5 296.2L234.7 302.1M234.7 302.1L234.9 305.3M234.9 305.3L237.1 305.6M233.6 308.1L236.8 311.2M233.9 314.2L237.4 312.1M236.3 41.3L237.9 48.3M237.9 48.3L236.3 51.8M236.3 51.8L237.9 56.6M235.8 63.9L244.1 64.9M238.6 73.8L238.8 78.4M238.8 78.4L244.0 79.9M236.1 83.9L243.9 84.3M236.1 83.9L237.2 88.0M237.2 88.0L241.0 88.7M237.2 88.0L238.6 92.1M238.6 92.1L242.1 92.6M238.2 99.1L237.4 102.4M237.4 102.4L239.2 107.4M239.2 107.4L236.4 110.0M236.4 110.0L236.0 115.6M236.0 115.6L236.0 121.4M236.0 121.4L242.3 119.9M237.3 124.7L243.2 126.2M236.6 133.3L241.2 136.2M236.9 138.5L239.2 144.6M239.2 144.6L241.4 143.4M239.2 144.6L237.3 147.1M237.3 147.1L235.9 151.6M235.9 151.6L242.1 153.9M235.9 151.6L238.9 158.2M238.9 158.2L241.1 157.4M236.3 162.7L235.9 166.8M235.9 166.8L237.0 169.9M238.5 176.8L241.2 177.1M238.5 176.8L237.6 179.3M237.6 179.3L242.8 181.3M237.6 179.3L238.2 184.9M238.2 184.9L242.7 185.9M238.2 184.9L238.2 188.2M238.2 188.2L239.1 192.5M239.1 192.5L236.5 198.6M236.5 198.6L244.0 199.1M236.5 202.0L238.3 210.1M237.0 211.9L241.6 211.3M237.0 211.9L238.2 216.3M238.2 216.3L237.2 222.7M237.2 222.7L242.2 221.5M237.2 222.7L237.3 225.3M237.3 225.3L236.0 231.4M236.0 231.4L243.0 232.7M236.0 231.4L239.5 237.4M239.5 237.4L243.5 237.2M239.5 237.4L236.1 240.4M237.6 243.8L238.2 249.6M238.2 249.6L241.0 248.3M238.2 249.6L238.8 253.4M238.8 253.4L241.4 255.8M238.8 253.4L239.2 260.0M239.2 260.0L243.5 258.2M239.2 260.0L237.5 262.0M237.5 266.6L241.9 266.8M238.3 273.4L237.9 279.0M237.9 279.0L240.8 278.7M237.9 279.0L235.9 282.6M235.9 282.6L242.0 281.4M236.9 289.3L237.9 296.4M237.9 296.4L241.7 293.7M237.9 296.4L237.0 300.9M237.0 300.9L237.1 305.6M237.1 305.6L236.8 311.2M236.8 311.2L237.4 312.1M237.4 312.1L240.4 314.7M237.4 312.1L236.0 319.5M236.0 319.5L242.6 317.8M243.6 38.5L245.7 39.4M240.9 44.0L243.0 45.7M243.0 45.7L247.1 47.5M243.0 45.7L241.7 52.5M241.7 52.5L246.1 50.0M240.3 54.7L241.6 62.4M241.6 62.4L247.2 61.0M244.1 64.9L245.4 64.5M244.1 64.9L243.8 71.3M243.8 71.3L246.1 69.9M243.8 71.3L243.6 75.1M243.6 75.1L244.0 79.9M244.0 79.9L245.3 81.2M244.0 79.9L243.9 84.3M243.9 84.3L245.8 85.4M241.0 88.7L242.1 92.6M241.7 97.8L247.9 99.0M241.7 97.8L242.5 101.3M242.5 101.3L241.4 107.0M242.2 111.3L242.8 115.0M242.3 119.9L243.2 126.2M243.2 126.2L247.0 125.0M243.3 130.1L247.9 128.5M241.2 136.2L242.2 138.7M242.2 138.7L246.6 141.1M241.4 143.4L243.0 149.6M243.0 149.6L245.7 146.5M243.0 149.6L242.1 153.9M242.1 153.9L245.3 151.4M242.1 153.9L241.1 157.4M241.7 161.5L246.8 161.4M241.7 161.5L241.7 167.8M241.7 167.8L247.6 166.9M241.7 167.8L243.1 170.3M243.1 170.3L241.2 177.1M241.2 177.1L246.8 176.0M241.2 177.1L242.8 181.3M242.8 181.3L246.3 182.0M242.7 185.9L241.3 188.1M241.3 188.1L246.3 189.2M241.7 192.6L247.2 194.6M241.7 192.6L244.0 199.1M244.0 199.1L246.0 197.4M244.0 199.1L242.8 205.4M242.8 205.4L243.4 207.2M243.4 207.2L245.3 208.8M243.4 207.2L241.6 211.3M241.6 211.3L243.3 218.3M243.3 218.3L242.2 221.5M242.2 221.5L246.2 221.7M242.2 221.5L241.3 226.6M241.3 226.6L248.5 226.1M241.3 226.6L243.0 232.7M243.0 232.7L246.4 229.9M243.0 232.7L243.5 237.2M243.5 237.2L242.0 240.1M242.0 240.1L246.6 240.0M242.0 240.1L241.5 246.8M241.5 246.8L245.8 246.1M241.5 246.8L241.0 248.3M241.0 248.3L246.6 250.9M241.4 255.8L246.3 255.1M241.4 255.8L243.5 258.2M243.5 258.2L243.5 264.9M241.9 266.8L247.5 268.0M241.9 266.8L243.2 272.1M243.2 272.1L246.7 271.5M243.2 272.1L240.8 278.7M240.8 278.7L245.6 277.8M240.8 278.7L242.0 281.4M242.0 281.4L242.6 285.5M242.6 285.5L240.4 290.6M240.4 290.6L247.2 289.8M240.4 290.6L241.7 293.7M241.7 293.7L246.8 294.9M241.7 293.7L241.7 301.2M241.7 301.2L247.0 298.8M241.6 305.5L242.7 308.2M242.7 308.2L245.4 308.7M242.7 308.2L240.4 314.7M248.4 41.6L251.2 43.9M248.4 41.6L247.1 47.5M246.1 50.0L246.1 56.9M246.1 56.9L253.2 57.6M246.1 56.9L247.2 61.0M247.2 61.0L252.0 59.5M247.2 61.0L245.4 64.5M245.4 64.5L251.8 63.8M246.3 76.3L252.3 73.9M245.3 81.2L245.8 85.4M245.8 85.4L252.6 84.1M245.8 85.4L245.8 88.9M245.8 88.9L249.6 90.1M246.3 91.4L251.2 94.5M246.3 91.4L247.9 99.0M247.9 99.0L245.9 103.4M245.9 103.4L252.8 101.3M246.7 108.9L252.9 106.4M246.7 108.9L245.1 111.1M245.1 111.1L249.6 111.0M245.8 116.7L249.8 114.6M245.8 116.7L247.9 122.1M247.0 125.0L250.1 124.6M247.9 128.5L250.6 131.6M245.9 135.6L252.9 136.0M246.6 141.1L253.3 139.0M246.6 141.1L245.2 143.7M245.2 143.7L252.5 143.0M245.2 143.7L245.7 146.5M245.7 146.5L253.0 149.6M245.7 146.5L245.3 151.4M246.3 157.3L246.8 161.4M246.8 161.4L251.6 162.6M246.8 161.4L247.6 166.9M247.6 166.9L252.8 165.4M247.6 166.9L248.6 170.1M248.6 170.1L246.8 176.0M246.8 176.0L252.5 175.8M246.3 182.0L245.7 186.6M245.7 186.6L246.3 189.2M246.3 189.2L252.7 188.8M247.2 194.6L252.1 194.0M246.0 197.4L250.4 197.9M246.0 197.4L248.5 203.1M245.3 208.8L251.4 208.2M245.3 208.8L246.9 212.1M246.9 212.1L249.6 213.8M246.9 212.1L246.1 218.7M246.2 221.7L250.9 220.9M246.2 221.7L248.5 226.1M248.5 226.1L250.8 227.5M248.5 226.1L246.4 229.9M246.4 229.9L252.0 230.8M246.4 229.9L247.4 236.4M247.4 236.4L251.5 234.5M247.4 236.4L246.6 240.0M246.6 240.0L245.8 246.1M246.6 250.9L250.3 250.4M246.6 250.9L246.3 255.1M246.3 255.1L245.0 257.7M245.0 257.7L249.9 257.9M248.6 264.1L251.9 263.3M248.6 264.1L247.5 268.0M247.5 268.0L250.9 268.3M245.6 277.8L247.5 280.9M247.5 280.9L247.3 285.0M247.3 285.0L251.6 286.8M247.2 289.8L251.9 289.6M246.8 294.9L247.0 298.8M247.0 298.8L246.7 305.2M246.7 305.2L245.4 308.7M245.4 308.7L251.2 310.1M245.4 308.7L247.5 314.2M247.5 314.2L253.1 312.8M247.5 314.2L247.2 319.7M247.2 319.7L249.9 318.3M251.2 43.9L254.9 44.0M251.2 43.9L251.7 48.2M253.2 57.6L254.8 56.3M253.2 57.6L252.0 59.5M251.8 63.8L256.0 66.9M251.8 63.8L253.0 72.0M253.0 72.0L254.2 71.8M253.0 72.0L252.3 73.9M252.3 73.9L254.9 73.0M252.3 73.9L252.7 78.2M252.7 78.2L257.0 79.7M252.6 84.1L256.1 82.9M252.6 84.1L249.6 90.1M249.6 90.1L257.1 87.9M249.6 90.1L251.2 94.5M251.2 94.5L256.9 92.2M251.2 94.5L252.1 97.9M252.1 97.9L256.3 98.4M252.1 97.9L252.8 101.3M252.9 106.4L254.3 107.5M249.6 111.0L256.7 110.3M249.8 114.6L256.2 117.1M249.8 114.6L251.9 119.4M251.9 119.4L254.5 122.1M250.6 131.6L252.9 136.0M252.9 136.0L255.1 133.0M253.3 139.0L256.0 138.3M253.3 139.0L252.5 143.0M252.5 143.0L255.2 143.7M253.0 149.6L252.3 152.0M252.3 152.0L256.8 151.5M252.3 152.0L249.8 159.2M249.8 159.2L254.9 155.7M251.6 162.6L255.4 160.7M251.6 162.6L252.8 165.4M252.8 165.4L252.2 171.3M252.2 171.3L257.9 170.3M250.6 186.1L255.6 184.5M250.6 186.1L252.7 188.8M252.7 188.8L254.4 191.5M252.7 188.8L252.1 194.0M252.1 194.0L256.0 194.2M252.1 194.0L250.4 197.9M250.4 197.9L253.1 203.1M253.1 203.1L257.3 203.5M253.1 203.1L251.4 208.2M249.6 213.8L252.3 218.8M252.3 218.8L256.6 217.6M252.3 218.8L250.9 220.9M250.9 220.9L255.9 222.3M250.8 227.5L252.0 230.8M252.0 230.8L257.4 229.6M251.5 234.5L255.5 237.2M253.0 240.3L257.8 238.6M253.0 240.3L251.4 246.1M251.4 246.1L256.5 245.5M251.4 246.1L250.3 250.4M250.3 250.4L257.3 249.5M250.8 255.4L254.6 253.4M250.8 255.4L249.9 257.9M249.9 257.9L256.8 259.7M249.9 257.9L251.9 263.3M251.9 263.3L254.9 263.9M251.9 263.3L250.9 268.3M250.9 268.3L256.6 268.6M249.5 278.3L255.3 277.6M249.5 278.3L250.5 283.1M250.5 283.1L255.4 280.4M251.6 286.8L251.9 289.6M251.9 289.6L252.5 294.8M252.5 294.8L256.2 296.8M252.5 294.8L252.8 301.3M251.2 310.1L254.2 310.3M253.1 312.8L255.5 312.8M253.1 312.8L249.9 318.3M249.9 318.3L255.6 318.6M255.6 45.9L262.4 46.8M255.6 45.9L254.8 52.1M254.8 52.1L254.8 56.3M256.1 60.8L261.2 62.3M256.1 60.8L256.0 66.9M254.2 71.8L259.8 68.7M254.9 73.0L257.0 79.7M256.1 82.9L260.4 85.0M256.1 82.9L257.1 87.9M257.1 87.9L259.7 87.3M257.1 87.9L256.9 92.2M256.9 92.2L260.7 92.9M255.5 102.3L254.3 107.5M254.3 107.5L260.3 105.2M256.7 110.3L260.4 113.2M256.7 110.3L256.2 117.1M256.2 117.1L254.5 122.1M254.5 122.1L257.4 123.7M257.4 123.7L255.0 128.4M255.0 128.4L259.8 130.8M255.1 133.0L258.8 134.1M255.1 133.0L256.0 138.3M255.2 143.7L258.8 142.5M255.5 149.5L259.5 146.8M255.5 149.5L256.8 151.5M256.8 151.5L259.0 151.8M256.8 151.5L254.9 155.7M254.9 155.7L260.7 156.2M254.9 155.7L255.4 160.7M255.4 160.7L256.7 167.9M256.7 167.9L259.7 165.8M256.7 167.9L257.9 170.3M257.9 170.3L261.9 169.7M257.9 170.3L254.2 177.0M254.2 177.0L261.5 174.5M254.2 177.0L255.7 182.2M255.7 182.2L262.3 180.3M255.7 182.2L255.6 184.5M255.6 184.5L261.0 186.6M254.4 191.5L259.1 188.1M254.4 191.5L256.0 194.2M255.8 200.0L261.4 198.2M255.8 200.0L257.3 203.5M257.3 203.5L260.6 202.4M254.8 207.8L257.5 212.4M257.5 212.4L260.9 212.0M257.5 212.4L256.6 217.6M256.6 217.6L259.7 217.9M255.9 222.3L259.0 223.1M255.0 226.8L257.4 229.6M257.4 229.6L259.1 231.2M257.4 229.6L255.5 237.2M255.5 237.2L260.6 236.6M255.5 237.2L257.8 238.6M257.8 238.6L256.5 245.5M257.3 249.5L262.4 251.1M257.3 249.5L254.6 253.4M254.6 253.4L262.5 255.9M254.6 253.4L256.8 259.7M254.9 263.9L261.0 262.3M254.9 263.9L256.6 268.6M256.6 268.6L262.5 268.6M256.6 268.6L254.2 272.4M254.2 272.4L261.8 272.8M255.4 280.4L259.4 280.9M255.4 280.4L256.6 285.6M256.6 285.6L261.0 285.2M257.1 290.3L260.5 291.8M257.1 290.3L256.2 296.8M256.2 296.8L259.1 296.2M256.2 296.8L254.5 301.1M254.5 301.1L259.1 300.1M254.4 306.5L261.2 305.5M254.4 306.5L254.2 310.3M254.2 310.3L255.5 312.8M255.5 312.8L262.3 313.6M255.5 312.8L255.6 318.6M260.7 41.8L262.4 46.8M262.4 46.8L265.5 47.3M262.4 46.8L260.4 50.8M260.4 50.8L262.4 55.7M262.4 55.7L267.0 57.5M261.2 62.3L260.2 66.6M260.2 66.6L259.8 68.7M259.8 68.7L266.1 71.0M259.8 68.7L258.9 74.6M262.0 78.3L266.6 78.5M260.4 85.0L259.7 87.3M260.7 92.9L266.3 94.5M260.7 92.9L262.3 99.3M262.3 99.3L259.6 102.6M259.6 102.6L263.9 101.1M259.6 102.6L260.3 105.2M260.4 113.2L264.6 110.1M261.4 119.1L264.1 122.1M261.4 119.1L262.2 123.9M258.8 134.1L264.8 132.7M258.8 134.1L259.2 139.1M258.8 142.5L259.5 146.8M259.5 146.8L264.7 146.5M259.5 146.8L259.0 151.8M259.0 151.8L266.9 152.0M260.7 156.2L264.3 155.8M261.8 161.9L263.7 163.0M259.7 165.8L261.9 169.7M262.3 180.3L267.1 182.1M262.3 180.3L261.0 186.6M261.0 186.6L263.8 186.5M261.0 186.6L259.1 188.1M261.3 194.7L266.4 195.1M261.4 198.2L265.4 200.2M260.6 202.4L260.4 207.4M260.4 207.4L260.9 212.0M260.9 212.0L259.7 217.9M259.7 217.9L265.5 218.5M259.7 217.9L259.0 223.1M259.0 223.1L260.6 225.6M260.6 225.6L266.8 227.8M260.6 225.6L259.1 231.2M259.1 231.2L265.5 230.5M259.1 231.2L260.6 236.6M260.1 240.1L263.7 239.8M262.1 244.1L266.0 246.6M262.4 251.1L265.8 250.2M262.4 251.1L262.5 255.9M262.5 255.9L259.7 260.0M259.7 260.0L265.0 258.7M261.0 262.3L266.2 262.7M261.0 262.3L262.5 268.6M262.5 268.6L261.8 272.8M261.8 272.8L266.4 271.6M261.8 272.8L259.0 278.6M259.0 278.6L265.9 278.7M259.0 278.6L259.4 280.9M259.4 280.9L261.0 285.2M261.0 285.2L260.5 291.8M260.5 291.8L259.1 296.2M259.1 296.2L265.0 296.7M259.1 300.1L265.7 299.0M261.2 305.5L258.9 308.2M258.9 308.2L263.6 309.2M262.3 313.6L260.3 318.1M260.3 318.1L264.9 320.3M265.9 38.9L269.5 39.3M265.9 38.9L265.8 42.2M265.8 42.2L270.9 42.9M265.8 42.2L265.5 47.3M264.0 53.5L269.8 51.4M264.0 53.5L267.0 57.5M267.0 57.5L270.4 56.4M267.0 57.5L267.1 60.9M267.1 60.9L269.1 61.4M267.1 60.9L266.5 64.6M266.5 64.6L271.7 64.5M266.1 71.0L269.2 68.3M266.9 76.1L268.3 73.1M266.9 76.1L266.6 78.5M266.6 78.5L266.3 83.9M266.3 83.9L270.6 85.8M266.3 83.9L264.5 88.1M264.5 88.1L271.1 88.9M264.5 88.1L266.3 94.5M266.3 94.5L266.5 98.4M266.5 98.4L269.4 96.9M266.5 98.4L263.9 101.1M265.5 105.9L270.0 106.5M265.5 105.9L264.6 110.1M264.6 110.1L269.8 111.2M264.6 110.1L263.9 117.0M263.9 117.0L268.3 117.1M264.1 122.1L270.9 121.2M264.4 129.1L271.2 131.8M264.4 129.1L264.8 132.7M264.8 132.7L270.8 132.9M264.8 132.7L265.0 138.7M265.0 138.7L271.2 139.8M265.0 138.7L263.3 145.2M263.3 145.2L264.7 146.5M264.7 146.5L271.0 149.9M266.9 152.0L268.8 153.3M266.9 152.0L264.3 155.8M264.3 155.8L269.3 156.8M264.3 155.8L263.7 163.0M263.7 163.0L270.8 162.6M263.7 163.0L265.5 166.8M265.5 166.8L269.2 167.0M267.0 175.5L271.4 176.3M267.1 182.1L271.7 178.8M263.8 186.5L263.4 190.6M263.4 190.6L266.4 195.1M266.4 195.1L265.4 200.2M263.9 203.8L270.6 205.3M263.9 203.8L264.3 207.8M264.0 213.6L271.2 211.1M264.0 213.6L265.5 218.5M265.5 218.5L270.9 215.6M265.5 218.5L265.7 222.4M265.7 222.4L270.4 223.1M265.7 222.4L266.8 227.8M265.5 230.5L268.8 232.0M266.8 235.3L263.7 239.8M263.7 239.8L269.1 240.7M266.0 246.6L271.5 246.1M266.0 246.6L265.8 250.2M266.9 255.3L269.9 253.8M266.9 255.3L265.0 258.7M265.0 258.7L266.2 262.7M266.2 262.7L263.7 268.5M263.7 268.5L270.8 269.7M266.4 271.6L265.9 278.7M263.8 280.4L265.2 285.8M265.2 285.8L269.4 286.6M265.2 285.8L266.9 292.9M266.9 292.9L271.4 289.3M266.9 292.9L265.0 296.7M265.0 296.7L269.2 294.3M265.7 299.0L267.0 303.6M263.6 309.2L268.4 310.5M263.4 313.9L269.8 312.6M263.4 313.9L264.9 320.3M264.9 320.3L271.0 319.8M269.5 39.3L273.3 39.7M270.9 42.9L268.8 46.5M269.8 51.4L275.6 50.3M269.8 51.4L270.4 56.4M270.4 56.4L275.4 57.4M269.1 61.4L271.7 64.5M271.7 64.5L276.2 64.9M271.7 64.5L269.2 68.3M269.2 68.3L268.3 73.1M268.3 73.1L273.7 75.5M269.5 80.7L275.1 80.7M271.1 88.9L273.5 88.8M270.1 91.3L273.0 94.6M270.1 91.3L269.4 96.9M269.4 96.9L275.9 96.8M270.3 100.7L275.1 103.1M269.8 111.2L268.3 117.1M270.9 121.2L275.4 120.7M268.3 125.8L275.6 124.1M268.3 125.8L271.2 131.8M271.2 131.8L272.9 129.4M271.2 131.8L270.8 132.9M270.8 132.9L275.8 133.3M269.0 145.4L272.8 144.4M269.0 145.4L271.0 149.9M271.0 149.9L272.8 147.4M271.0 149.9L268.8 153.3M269.3 156.8L274.1 157.4M269.3 156.8L270.8 162.6M270.8 162.6L272.6 161.6M270.8 162.6L269.2 167.0M269.2 167.0L271.4 171.7M271.4 176.3L274.5 176.8M271.4 176.3L271.7 178.8M271.7 178.8L273.0 180.2M271.7 178.8L269.6 185.4M269.6 185.4L273.6 184.4M269.6 185.4L270.7 191.6M270.7 191.6L275.3 188.7M270.7 191.6L270.3 194.3M270.3 194.3L273.7 193.6M270.3 194.3L270.3 199.1M270.3 199.1L270.6 205.3M270.6 205.3L274.3 203.1M270.6 205.3L268.0 207.5M268.0 207.5L276.0 209.9M268.0 207.5L271.2 211.1M271.2 211.1L270.9 215.6M268.8 226.1L268.8 232.0M268.8 232.0L273.1 230.9M269.1 240.7L274.0 241.7M269.1 240.7L271.5 246.1M271.5 246.1L275.9 244.5M271.5 248.6L273.0 250.1M271.5 248.6L269.9 253.8M269.9 253.8L269.2 260.0M269.2 260.0L275.0 258.1M269.2 260.0L268.6 263.6M268.6 263.6L274.5 262.6M270.8 269.7L268.0 271.7M269.8 278.9L268.5 283.1M268.5 283.1L276.2 280.4M269.4 286.6L276.0 286.9M269.2 294.3L276.3 293.8M269.2 294.3L268.4 299.5M268.4 299.5L275.7 301.4M268.4 299.5L270.6 305.1M270.6 305.1L273.9 306.0M268.4 310.5L273.3 310.4M269.8 312.6L274.3 313.7M269.8 312.6L271.0 319.8M273.3 39.7L275.6 41.6M272.5 48.6L278.5 46.9M275.6 50.3L275.4 57.4M275.4 57.4L280.7 56.9M275.4 57.4L274.9 62.3M276.2 64.9L275.7 71.8M275.7 71.8L279.3 70.0M273.7 75.5L280.8 74.5M273.7 75.5L275.1 80.7M274.7 83.1L277.8 85.7M274.7 83.1L273.5 88.8M273.5 88.8L279.3 88.8M273.5 88.8L273.0 94.6M273.0 94.6L275.9 96.8M275.9 96.8L278.3 97.8M275.9 96.8L275.1 103.1M275.1 103.1L273.0 108.1M273.0 108.1L275.4 110.9M272.9 115.4L278.4 117.3M272.9 115.4L275.4 120.7M275.4 120.7L280.5 119.8M275.6 124.1L280.1 125.2M275.6 124.1L272.9 129.4M272.9 129.4L279.1 130.1M272.9 129.4L275.8 133.3M275.8 133.3L272.8 140.2M272.8 140.2L279.6 139.9M272.8 144.4L278.5 145.4M272.8 144.4L272.8 147.4M272.8 147.4L280.2 147.6M272.8 147.4L275.0 154.4M275.0 154.4L277.4 153.2M274.1 157.4L279.6 156.6M272.6 161.6L273.4 167.9M273.4 167.9L277.2 167.7M273.4 167.9L275.2 172.5M275.2 172.5L279.5 170.6M274.5 176.8L278.8 175.0M273.0 180.2L277.8 179.4M273.6 184.4L280.2 185.0M273.6 184.4L275.3 188.7M275.3 188.7L279.8 189.2M275.3 188.7L273.7 193.6M273.7 193.6L280.2 194.8M273.7 193.6L275.8 199.5M275.8 199.5L274.3 203.1M274.3 203.1L279.2 202.4M276.0 209.9L280.8 208.9M276.0 209.9L274.2 213.1M274.2 213.1L279.1 213.3M274.2 213.1L275.8 216.5M275.8 216.5L277.5 216.8M275.8 216.5L273.5 220.5M273.5 220.5L278.0 223.3M274.4 227.6L277.1 226.4M274.4 227.6L273.1 230.9M273.1 230.9L276.3 235.7M276.3 235.7L274.0 241.7M274.0 241.7L275.9 244.5M275.3 255.8L279.3 255.4M274.5 262.6L280.8 261.5M274.5 262.6L274.2 267.9M274.2 267.9L280.4 266.2M274.2 267.9L276.0 274.1M276.0 274.1L276.0 277.1M276.0 277.1L276.2 280.4M276.2 280.4L276.0 286.9M276.0 286.9L279.2 287.4M275.8 290.7L276.3 293.8M276.3 293.8L275.7 301.4M275.7 301.4L273.9 306.0M273.9 306.0L273.3 310.4M273.3 310.4L280.0 309.9M274.3 313.7L278.8 314.9M280.8 41.5L278.5 46.9M278.5 46.9L282.9 46.6M278.5 46.9L279.3 53.3M279.3 53.3L280.7 56.9M280.7 56.9L284.5 56.7M278.5 59.5L282.4 61.9M278.5 59.5L277.4 65.7M277.4 65.7L279.3 70.0M279.3 70.0L282.3 68.7M279.3 70.0L280.8 74.5M280.8 74.5L282.7 74.9M280.8 74.5L278.4 79.1M278.4 79.1L282.7 80.9M277.8 85.7L285.3 83.2M279.3 88.8L284.5 89.3M278.7 92.3L283.8 92.3M278.8 104.2L281.7 101.8M278.8 104.2L279.2 105.9M279.2 105.9L282.9 105.9M277.3 110.3L283.3 113.1M278.4 117.3L280.5 119.8M280.5 119.8L282.9 119.0M280.1 125.2L285.1 124.5M280.1 125.2L279.1 130.1M279.1 130.1L282.5 128.5M279.1 130.1L277.3 133.0M279.6 139.9L278.5 145.4M280.2 147.6L277.4 153.2M277.4 153.2L279.6 156.6M279.6 156.6L283.0 159.2M277.3 162.2L284.7 162.4M277.2 167.7L283.5 166.2M278.8 175.0L284.0 174.5M277.8 179.4L285.2 182.1M277.8 179.4L280.2 185.0M280.2 185.0L281.8 186.0M280.2 185.0L279.8 189.2M280.2 194.8L284.9 193.8M280.2 194.8L279.6 198.6M279.6 198.6L283.6 199.6M279.2 202.4L282.4 204.1M280.8 208.9L283.3 210.0M277.5 216.8L281.9 216.5M278.0 223.3L277.1 226.4M277.1 226.4L280.4 232.3M280.4 232.3L284.7 229.7M280.4 232.3L279.8 235.0M278.0 241.2L282.2 239.3M278.0 241.2L278.2 245.8M278.2 245.8L278.4 250.6M278.4 250.6L285.2 249.0M278.4 250.6L279.3 255.4M279.3 255.4L283.2 255.9M279.3 255.4L280.8 258.3M280.8 258.3L283.0 260.6M280.8 258.3L280.8 261.5M280.8 261.5L280.4 266.2M280.4 266.2L283.8 269.7M280.4 266.2L279.2 272.2M279.2 272.2L282.1 273.9M280.0 276.5L284.6 278.1M277.9 282.9L284.0 280.3M277.9 282.9L279.2 287.4M279.2 287.4L285.3 284.9M279.2 287.4L279.0 289.2M279.0 289.2L284.7 291.8M280.0 294.5L278.9 298.3M278.1 305.4L281.9 306.4M278.1 305.4L280.0 309.9M280.0 309.9L283.2 310.6M280.0 309.9L278.8 314.9M278.8 314.9L279.6 317.5M279.6 317.5L282.8 318.8M284.5 41.5L286.6 44.0M284.5 41.5L282.9 46.6M282.9 46.6L288.9 46.9M282.9 46.6L282.1 51.2M282.1 51.2L290.0 53.5M282.1 51.2L284.5 56.7M284.5 56.7L282.4 61.9M282.4 61.9L289.0 61.9M282.4 61.9L282.1 66.6M282.1 66.6L288.6 63.8M282.1 66.6L282.3 68.7M282.3 68.7L282.7 74.9M282.7 74.9L282.7 80.9M282.7 80.9L287.3 77.6M282.7 80.9L285.3 83.2M285.3 83.2L289.8 83.1M285.3 83.2L284.5 89.3M284.5 89.3L286.5 87.2M283.8 92.3L290.1 94.1M285.3 99.5L281.7 101.8M282.9 105.9L283.3 113.1M283.3 113.1L281.8 117.5M285.1 124.5L286.7 127.1M282.5 128.5L289.5 130.9M282.5 128.5L283.1 133.2M283.1 133.2L286.5 135.3M283.1 133.2L282.4 138.3M282.4 138.3L288.2 139.2M282.4 138.3L283.9 143.6M282.9 148.5L289.3 147.0M284.6 153.9L289.6 152.7M284.6 153.9L283.0 159.2M282.2 172.9L288.2 171.4M282.2 172.9L284.0 174.5M284.0 174.5L290.1 174.9M285.2 182.1L286.4 179.9M281.8 186.0L287.5 183.8M282.6 189.9L287.9 188.0M282.6 189.9L284.9 193.8M284.9 193.8L289.8 194.3M283.6 199.6L289.6 199.8M283.6 199.6L282.4 204.1M282.4 204.1L289.1 204.6M282.4 204.1L283.3 210.0M283.3 210.0L287.4 209.1M283.3 210.0L282.4 213.6M282.4 213.6L281.9 216.5M282.1 220.7L286.9 221.4M284.7 229.7L290.0 229.7M284.7 229.7L284.1 237.2M282.2 239.3L284.6 244.9M284.6 244.9L285.2 249.0M285.2 249.0L288.3 249.8M285.2 249.0L283.2 255.9M283.2 255.9L283.0 260.6M283.0 260.6L288.8 259.1M285.1 262.3L288.2 264.4M285.1 262.3L283.8 269.7M283.8 269.7L288.5 266.6M283.8 269.7L282.1 273.9M282.1 273.9L284.6 278.1M284.6 278.1L287.9 277.4M284.6 278.1L284.0 280.3M284.0 280.3L285.3 284.9M285.3 284.9L287.9 285.9M284.7 291.8L282.9 296.3M282.9 296.3L286.4 296.4M283.3 301.2L287.8 300.0M283.3 301.2L281.9 306.4M281.9 306.4L288.5 304.3M281.9 306.4L283.2 310.6M283.2 310.6L287.2 307.6M283.2 310.6L283.5 315.2M283.5 315.2L289.6 315.7M286.6 44.0L294.3 43.9M286.6 44.0L288.9 46.9M288.9 46.9L291.8 46.3M288.9 46.9L290.0 53.5M290.0 53.5L293.6 52.9M289.9 54.8L292.7 56.0M289.9 54.8L289.0 61.9M289.0 61.9L291.8 62.1M288.6 63.8L289.8 70.0M289.8 70.0L291.3 70.6M288.6 76.0L294.6 75.6M287.3 77.6L292.6 78.1M287.3 77.6L289.8 83.1M289.8 83.1L286.5 87.2M286.5 87.2L291.2 89.8M286.5 87.2L290.1 94.1M290.1 94.1L293.4 93.1M287.1 96.5L294.3 99.4M289.7 103.0L293.2 100.9M289.7 103.0L288.5 105.6M288.5 105.6L287.9 113.3M287.9 113.3L291.8 113.2M287.9 113.3L286.3 115.9M286.3 115.9L293.7 114.8M286.3 115.9L286.5 122.7M286.5 122.7L291.8 120.2M286.7 127.1L289.5 130.9M286.5 135.3L291.6 135.4M286.5 135.3L288.2 139.2M288.2 139.2L286.9 143.8M286.9 143.8L294.5 143.1M286.9 143.8L289.3 147.0M289.3 147.0L289.6 152.7M289.6 152.7L292.5 153.5M289.6 152.7L287.3 156.6M288.5 168.3L293.0 165.6M288.2 171.4L290.1 174.9M290.1 174.9L294.3 176.1M287.5 183.8L291.9 186.3M287.9 188.0L291.5 188.9M287.9 188.0L289.8 194.3M289.6 199.8L289.1 204.6M289.1 204.6L291.4 202.5M289.1 204.6L287.4 209.1M287.4 209.1L287.1 213.0M287.1 213.0L288.6 218.4M288.6 218.4L292.7 217.0M288.6 218.4L286.9 221.4M286.9 221.4L293.8 223.5M286.9 221.4L289.4 227.8M289.4 227.8L292.5 228.2M289.4 227.8L290.0 229.7M290.0 229.7L291.9 233.0M290.0 229.7L287.1 234.3M287.1 234.3L292.9 236.5M287.1 234.3L289.1 241.3M289.1 241.3L288.8 246.1M288.8 246.1L291.4 246.5M288.8 246.1L288.3 249.8M288.3 249.8L289.8 254.8M289.8 254.8L292.7 254.3M288.2 264.4L292.2 264.1M288.2 264.4L288.5 266.6M288.5 266.6L293.0 266.1M287.9 272.3L293.6 272.3M287.9 277.4L291.2 276.3M287.9 277.4L287.7 281.4M287.9 285.9L293.0 285.7M287.9 285.9L290.0 289.4M286.4 296.4L292.0 295.0M286.4 296.4L287.8 300.0M287.8 300.0L293.9 301.3M287.8 300.0L288.5 304.3M288.5 304.3L293.6 306.3M287.2 307.6L289.6 315.7M289.6 315.7L287.4 318.5M291.8 46.3L299.2 48.2M293.6 52.9L296.8 50.1M293.6 52.9L292.7 56.0M292.7 56.0L299.2 55.5M292.7 56.0L291.8 62.1M291.8 62.1L294.2 67.0M294.2 67.0L298.0 65.1M294.2 67.0L291.3 70.6M294.6 75.6L295.9 73.7M292.6 78.1L291.1 84.9M291.1 84.9L297.9 84.7M293.4 93.1L294.3 99.4M294.3 99.4L293.2 100.9M293.2 100.9L296.8 101.2M293.2 100.9L293.1 106.7M293.1 106.7L297.2 108.6M291.8 113.2L296.4 110.3M293.7 114.8L297.9 116.8M293.7 114.8L291.8 120.2M291.8 120.2L293.1 124.7M293.1 124.7L298.8 123.9M293.1 124.7L292.6 131.2M292.6 131.2L296.2 129.0M292.6 131.2L291.6 135.4M291.6 135.4L292.2 140.9M292.2 140.9L294.5 143.1M294.5 143.1L298.9 143.7M294.5 143.1L293.2 146.9M293.2 146.9L295.7 149.7M292.5 153.5L295.6 152.3M292.5 153.5L293.3 157.0M293.3 157.0L291.0 160.8M291.0 160.8L293.0 165.6M293.0 165.6L292.1 171.8M292.1 171.8L294.3 176.1M294.3 176.1L298.1 177.1M294.3 176.1L291.9 180.9M291.9 180.9L297.1 179.3M291.9 180.9L291.9 186.3M291.9 186.3L291.5 188.9M291.5 188.9L296.0 188.5M292.6 196.0L297.0 193.0M292.6 196.0L291.5 197.8M291.5 197.8L291.4 202.5M291.4 202.5L297.6 203.2M291.4 202.5L292.2 207.8M292.2 207.8L293.8 212.4M293.8 212.4L292.7 217.0M292.5 228.2L298.5 226.9M291.9 233.0L295.9 230.3M291.9 233.0L292.9 236.5M292.9 236.5L295.9 237.2M292.3 239.5L296.7 240.0M292.3 239.5L291.4 246.5M291.4 246.5L297.5 243.5M291.4 246.5L292.3 250.4M292.3 250.4L298.2 250.7M292.3 250.4L292.7 254.3M292.7 254.3L298.5 255.6M292.7 254.3L291.7 257.6M291.7 257.6L296.7 257.5M292.2 264.1L298.4 264.1M293.0 266.1L293.6 272.3M293.6 272.3L296.1 273.9M293.6 272.3L291.2 276.3M291.2 276.3L297.3 278.4M291.2 276.3L291.7 283.0M291.7 283.0L293.0 285.7M292.0 295.0L298.1 295.2M292.0 295.0L293.9 301.3M293.9 301.3L293.6 306.3M293.6 306.3L297.6 304.3M293.6 306.3L293.4 307.9M291.1 312.7L298.5 313.3M291.9 318.7L295.8 317.4M298.6 38.3L297.1 41.6M299.2 55.5L298.7 59.5M298.0 65.1L302.7 66.1M298.9 69.4L303.2 70.9M298.9 69.4L295.9 73.7M298.6 81.2L297.9 84.7M297.9 84.7L303.1 82.7M297.9 84.7L296.6 87.7M296.6 87.7L295.8 95.0M295.8 95.0L300.7 93.3M295.8 95.0L295.7 98.2M295.7 98.2L303.5 98.7M295.7 98.2L296.8 101.2M296.8 101.2L301.6 102.3M296.8 101.2L297.2 108.6M297.2 108.6L301.2 108.8M296.4 110.3L297.9 116.8M297.9 116.8L301.3 117.1M297.4 119.6L301.9 121.9M297.4 119.6L298.8 123.9M298.8 123.9L301.5 126.8M298.8 123.9L296.2 129.0M297.5 134.5L302.2 135.8M297.5 134.5L297.6 140.1M297.6 140.1L302.1 140.9M297.6 140.1L298.9 143.7M298.9 143.7L300.1 145.3M298.9 143.7L295.7 149.7M295.7 149.7L295.6 152.3M295.6 152.3L303.3 151.7M295.6 152.3L296.0 158.0M298.5 160.8L296.6 168.1M298.1 169.9L300.3 170.0M298.1 169.9L298.1 177.1M298.0 184.5L301.8 183.6M298.0 184.5L296.0 188.5M297.0 193.0L297.0 199.2M297.0 199.2L301.3 199.4M297.0 199.2L297.6 203.2M298.5 206.6L303.7 209.1M298.5 206.6L296.8 214.4M296.8 214.4L303.2 211.2M298.8 219.0L300.6 216.8M298.4 222.1L300.6 221.7M298.4 222.1L298.5 226.9M295.9 230.3L303.7 230.1M295.9 230.3L295.9 237.2M295.9 237.2L300.9 234.0M295.9 237.2L296.7 240.0M296.7 240.0L301.1 238.7M296.7 240.0L297.5 243.5M297.5 243.5L302.1 244.2M297.5 243.5L298.2 250.7M298.2 250.7L298.5 255.6M298.5 255.6L296.7 257.5M298.4 264.1L296.9 267.4M296.9 267.4L301.9 267.2M296.9 267.4L296.1 273.9M296.1 273.9L300.3 272.5M296.1 273.9L297.3 278.4M297.3 278.4L302.4 276.0M296.8 281.1L303.4 283.2M296.8 281.1L297.5 287.3M297.5 287.3L303.3 287.6M298.9 290.4L302.0 289.8M298.9 290.4L298.1 295.2M298.1 295.2L298.8 301.2M298.8 301.2L303.8 298.7M296.5 310.9L298.5 313.3M298.5 313.3L300.5 315.3M298.5 313.3L295.8 317.4M303.2 42.7L305.4 44.4M302.2 47.4L301.7 52.0M301.7 52.0L304.9 52.0M301.7 52.0L300.4 58.0M300.4 58.0L300.5 59.6M300.5 59.6L308.3 59.5M300.5 59.6L302.7 66.1M302.7 66.1L306.1 67.5M303.2 70.9L303.6 73.1M303.6 73.1L305.7 73.0M303.6 73.1L300.1 78.4M303.1 82.7L302.1 89.6M300.7 93.3L308.3 94.6M300.7 93.3L303.5 98.7M303.5 98.7L305.7 99.0M303.5 98.7L301.6 102.3M301.6 102.3L304.8 102.1M301.6 102.3L301.2 108.8M301.2 108.8L308.3 106.1M301.2 108.8L303.1 112.3M303.1 112.3L306.1 111.9M303.1 112.3L301.3 117.1M301.3 117.1L305.6 117.0M301.9 121.9L307.2 119.3M301.9 121.9L301.5 126.8M302.7 129.8L307.3 129.4M302.1 140.9L308.5 140.3M300.1 145.3L306.4 144.9M300.1 145.3L302.8 148.4M302.8 148.4L308.4 150.0M303.3 151.7L301.4 158.4M301.4 158.4L306.7 159.4M301.4 158.4L303.2 161.7M303.9 167.4L300.3 170.0M300.4 176.3L301.3 179.7M301.3 179.7L304.8 180.7M301.3 179.7L301.8 183.6M301.8 183.6L306.9 183.9M303.6 191.1L308.2 189.6M303.6 191.1L302.2 194.2M302.2 194.2L305.4 194.1M302.2 194.2L301.3 199.4M301.3 199.4L301.4 205.4M301.4 205.4L303.7 209.1M303.7 209.1L307.4 206.8M303.7 209.1L303.2 211.2M303.2 211.2L300.6 216.8M300.6 216.8L308.0 218.9M300.6 216.8L300.6 221.7M300.6 221.7L305.4 220.1M303.8 227.9L303.7 230.1M303.7 230.1L306.1 229.4M303.7 230.1L300.9 234.0M300.9 234.0L306.3 234.8M301.1 238.7L306.9 242.2M302.1 244.2L305.5 243.4M302.1 244.2L302.7 249.8M302.9 259.5L308.4 258.1M302.8 263.3L301.9 267.2M301.9 267.2L305.3 267.6M301.9 267.2L300.3 272.5M300.3 272.5L307.4 271.9M300.3 272.5L302.4 276.0M302.4 276.0L307.7 276.0M302.4 276.0L303.4 283.2M303.4 283.2L303.3 287.6M303.3 287.6L302.0 289.8M302.0 289.8L305.1 291.9M302.0 289.8L301.1 296.5M301.1 296.5L307.2 295.1M301.1 296.5L303.8 298.7M303.8 298.7L305.2 300.6M303.8 298.7L300.1 304.2M300.1 304.2L307.6 304.7M300.1 304.2L301.4 309.8M301.4 309.8L300.5 315.3M300.5 315.3L301.4 320.2M301.4 320.2L305.4 318.5M305.4 44.4L313.1 42.8M304.9 52.0L311.7 52.7M304.9 52.0L307.5 58.2M307.5 58.2L310.2 57.1M307.5 58.2L308.3 59.5M308.3 59.5L306.1 67.5M306.1 67.5L312.9 65.4M306.1 67.5L306.7 71.9M306.7 71.9L311.8 71.6M306.7 71.9L305.7 73.0M305.7 73.0L310.1 74.2M305.7 73.0L308.3 78.5M308.3 78.5L306.8 83.5M306.8 83.5L306.9 90.2M306.9 90.2L312.1 89.1M306.9 90.2L308.3 94.6M308.3 94.6L312.8 93.8M305.7 99.0L309.3 96.2M304.8 102.1L309.4 102.1M308.3 106.1L309.4 107.1M306.1 111.9L305.6 117.0M305.6 117.0L312.6 115.9M305.6 117.0L307.2 119.3M307.2 119.3L312.9 120.3M307.2 119.3L308.2 123.8M305.2 133.0L309.3 133.6M305.2 133.0L308.5 140.3M306.4 144.9L311.2 142.0M308.4 150.0L306.7 152.1M307.5 162.8L311.3 161.9M307.9 166.5L311.0 168.7M307.9 166.5L306.8 172.7M306.8 172.7L312.8 173.0M306.8 172.7L305.5 177.4M305.5 177.4L304.8 180.7M304.8 180.7L309.8 178.8M306.9 183.9L312.5 185.9M306.9 183.9L308.2 189.6M305.4 194.1L310.3 196.0M305.4 194.1L306.9 198.7M306.9 198.7L304.7 202.1M304.7 202.1L307.4 206.8M307.4 206.8L309.6 210.0M307.6 227.0L312.4 227.7M307.6 227.0L306.1 229.4M306.1 229.4L306.3 234.8M306.3 234.8L309.4 234.3M306.9 242.2L312.5 241.7M306.9 242.2L305.5 243.4M307.3 248.1L312.6 248.2M307.3 248.1L305.5 254.0M305.5 254.0L308.4 258.1M308.4 258.1L305.9 263.3M305.9 263.3L312.2 264.5M305.9 263.3L305.3 267.6M307.4 271.9L307.7 276.0M307.7 276.0L313.0 275.6M307.7 276.0L305.1 282.3M305.1 282.3L306.4 288.0M306.4 288.0L310.5 285.8M306.4 288.0L305.1 291.9M305.1 291.9L313.1 289.3M307.2 295.1L311.0 294.2M305.2 300.6L307.6 304.7M307.6 304.7L312.0 304.9M306.5 310.1L312.2 308.8M307.0 313.7L305.4 318.5M311.4 39.5L315.1 39.3M313.1 42.8L316.7 42.9M313.1 42.8L310.5 46.1M310.5 46.1L315.5 47.5M310.5 46.1L311.7 52.7M311.7 52.7L314.2 50.3M311.7 52.7L310.2 57.1M310.2 57.1L315.1 55.0M313.1 60.6L314.1 61.8M313.1 60.6L312.9 65.4M311.8 71.6L314.7 71.0M311.8 71.6L310.1 74.2M313.0 77.7L310.5 83.9M310.5 83.9L315.4 83.1M310.5 83.9L312.1 89.1M312.1 89.1L312.8 93.8M312.8 93.8L309.3 96.2M309.3 96.2L309.4 102.1M309.4 102.1L309.4 107.1M309.4 107.1L311.7 110.5M311.7 110.5L315.7 113.2M312.6 115.9L316.1 116.7M312.9 120.3L311.7 125.6M311.7 125.6L315.3 123.5M310.3 131.1L309.3 133.6M310.5 140.7L314.7 139.8M310.5 140.7L311.2 142.0M311.2 142.0L314.4 142.0M310.4 148.8L315.8 146.5M312.4 151.5L314.9 152.6M312.3 157.2L311.3 161.9M311.3 161.9L314.9 161.2M311.3 161.9L311.0 168.7M311.0 168.7L312.8 173.0M312.8 173.0L312.1 176.8M312.1 176.8L314.0 177.3M309.8 178.8L316.7 180.6M309.8 178.8L312.5 185.9M311.7 189.1L317.3 189.6M311.7 189.1L310.3 196.0M310.3 196.0L314.7 195.6M310.3 196.0L311.3 197.2M311.3 197.2L317.3 197.6M310.6 203.0L315.8 203.8M309.6 210.0L312.7 214.0M312.7 214.0L316.2 213.5M312.7 214.0L309.3 217.1M309.3 217.1L316.3 217.9M309.7 222.9L312.4 227.7M312.4 227.7L312.3 229.8M312.3 229.8L317.2 232.7M309.4 234.3L314.2 236.8M312.5 241.7L311.3 244.0M311.3 244.0L312.6 248.2M310.5 252.3L315.3 255.9M313.0 258.5L314.9 259.1M313.0 258.5L312.2 264.5M312.2 264.5L316.5 262.4M311.5 269.9L315.4 266.5M311.5 269.9L312.2 274.2M312.2 274.2L316.9 271.4M312.2 274.2L313.0 275.6M313.0 275.6L312.2 280.8M312.2 280.8L316.3 282.3M312.2 280.8L310.5 285.8M313.1 289.3L311.0 294.2M311.0 294.2L315.9 294.3M311.0 294.2L313.1 300.2M313.1 300.2L312.0 304.9M312.0 304.9L314.2 304.2M312.0 304.9L312.2 308.8M312.2 308.8L310.9 314.9M312.0 320.1L316.1 318.7M315.1 39.3L316.7 42.9M316.7 42.9L320.7 43.0M316.7 42.9L315.5 47.5M315.5 47.5L318.8 48.2M315.5 47.5L314.2 50.3M314.2 50.3L315.1 55.0M315.1 55.0L320.5 55.8M314.1 61.8L322.1 60.6M314.1 61.8L316.7 66.0M316.7 66.0L320.1 65.8M317.0 75.3L321.4 74.9M317.0 75.3L314.8 79.6M314.8 79.6L321.2 79.9M314.8 79.6L315.4 83.1M315.4 83.1L314.5 90.0M314.5 90.0L316.3 94.8M316.3 94.8L320.7 93.0M315.8 100.7L319.3 103.2M315.8 100.7L315.0 107.2M315.7 113.2L321.2 112.5M316.1 116.7L316.1 121.9M316.1 121.9L315.3 123.5M315.3 123.5L317.6 131.1M317.6 131.1L322.1 129.8M314.4 133.1L319.9 132.8M314.4 133.1L314.7 139.8M314.7 139.8L320.3 139.3M314.7 139.8L314.4 142.0M314.9 152.6L319.2 152.8M314.7 155.7L319.8 157.6M314.9 161.2L320.5 161.8M315.3 170.7L320.6 173.2M315.3 170.7L314.0 177.3M314.0 177.3L319.6 175.4M316.7 180.6L319.7 181.5M316.7 180.6L313.9 184.2M313.9 184.2L320.4 186.3M317.3 189.6L318.5 188.4M317.3 197.6L320.0 198.6M317.3 197.6L315.8 203.8M315.8 203.8L322.2 203.4M314.3 207.5L316.2 213.5M316.2 213.5L316.3 217.9M316.3 217.9L315.3 220.4M315.3 220.4L314.0 227.9M314.0 227.9L317.2 232.7M317.2 232.7L318.8 232.1M314.2 236.8L314.6 239.8M314.6 239.8L319.6 242.0M314.6 239.8L314.7 246.4M314.7 246.4L319.9 244.1M314.7 246.4L317.0 250.9M317.0 250.9L321.9 248.5M315.3 255.9L319.5 254.2M315.3 255.9L314.9 259.1M316.5 262.4L315.4 266.5M315.4 266.5L318.8 267.7M315.4 266.5L316.9 271.4M316.9 271.4L321.5 273.4M316.9 271.4L314.4 276.4M314.4 276.4L321.5 275.7M316.3 282.3L321.9 281.3M316.3 282.3L315.9 287.7M315.9 294.3L319.5 294.3M315.9 294.3L314.8 298.9M314.8 298.9L320.4 298.5M314.2 304.2L319.1 306.2M316.1 318.7L320.3 317.1M320.7 43.0L325.8 42.6M318.8 48.2L325.4 48.6M320.5 55.8L323.3 57.8M320.5 55.8L322.1 60.6M322.1 60.6L320.1 65.8M320.1 65.8L321.7 72.1M321.7 72.1L325.3 70.0M321.4 74.9L324.9 73.4M321.4 74.9L321.2 79.9M321.2 79.9L325.8 79.5M321.2 79.9L322.1 85.8M322.1 85.8L324.3 85.3M320.7 93.0L319.4 98.9M319.4 98.9L319.3 103.2M319.3 103.2L324.1 103.3M319.3 103.2L320.4 106.7M320.4 106.7L326.5 105.6M320.4 106.7L321.2 112.5M322.3 118.1L326.5 116.0M321.5 119.9L321.0 125.4M321.0 125.4L325.1 126.5M321.0 125.4L322.1 129.8M322.1 129.8L323.8 129.2M319.9 132.8L326.8 132.7M320.3 139.3L325.4 137.7M319.7 142.3L320.3 146.8M320.3 146.8L326.6 147.3M320.3 146.8L319.2 152.8M319.2 152.8L326.4 152.0M319.2 152.8L319.8 157.6M319.8 157.6L323.3 156.0M319.8 157.6L320.5 161.8M319.0 165.0L326.8 166.2M320.6 173.2L319.6 175.4M319.6 175.4L325.1 176.1M319.6 175.4L319.7 181.5M319.7 181.5L320.4 186.3M320.4 186.3L324.8 184.5M318.5 188.4L326.3 190.5M318.5 188.4L319.3 193.9M319.3 193.9L323.6 192.9M319.3 193.9L320.0 198.6M320.0 198.6L323.3 198.1M320.0 198.6L322.2 203.4M322.2 203.4L325.5 205.4M320.9 213.2L321.6 216.8M321.6 216.8L326.0 217.3M321.6 216.8L318.6 223.7M318.6 223.7L320.5 226.9M318.8 232.1L319.9 236.3M319.9 236.3L325.5 237.2M319.9 236.3L319.6 242.0M319.6 242.0L323.1 238.5M319.6 242.0L319.9 244.1M319.9 244.1L326.8 244.1M321.9 248.5L324.1 251.0M321.9 248.5L319.5 254.2M319.5 254.2L323.5 255.3M319.5 254.2L322.2 257.3M319.3 264.5L318.8 267.7M318.8 267.7L325.4 268.4M318.8 267.7L321.5 273.4M321.5 273.4L321.5 275.7M321.9 281.3L325.6 280.2M321.9 281.3L321.6 286.3M321.6 286.3L321.9 290.9M319.5 294.3L320.4 298.5M320.4 298.5L325.3 299.2M319.1 306.2L325.2 306.2M319.1 313.9L325.3 315.9M319.1 313.9L320.3 317.1M325.8 42.6L325.4 48.6M325.4 48.6L327.8 47.2M325.4 48.6L326.7 52.2M326.7 52.2L328.9 52.2M326.7 52.2L323.3 57.8M323.3 57.8L330.8 56.3M323.7 60.0L330.1 60.2M323.7 60.0L323.6 65.6M323.6 65.6L328.7 65.6M325.3 70.0L329.7 69.1M325.3 70.0L324.9 73.4M324.9 73.4L330.6 74.8M324.9 73.4L325.8 79.5M325.8 79.5L324.3 85.3M324.3 85.3L330.9 85.5M324.3 85.3L326.7 90.2M326.7 90.2L331.3 87.6M326.8 91.6L324.6 97.6M324.6 97.6L324.1 103.3M324.1 103.3L330.3 101.8M324.1 103.3L326.5 105.6M325.0 113.4L326.5 116.0M323.5 120.6L329.9 119.3M325.1 126.5L328.5 124.5M323.8 129.2L327.8 130.5M326.8 132.7L329.9 136.2M325.4 137.7L329.8 140.8M325.4 137.7L326.0 143.5M326.0 143.5L329.5 143.9M326.0 143.5L326.6 147.3M326.4 152.0L331.3 153.0M326.4 152.0L323.3 156.0M323.4 161.8L328.5 162.7M323.4 161.8L326.8 166.2M326.8 166.2L325.8 169.6M325.8 169.6L331.2 172.4M325.8 169.6L325.1 176.1M325.1 176.1L328.0 174.2M323.5 180.9L324.8 184.5M326.3 190.5L327.8 189.6M326.3 190.5L323.6 192.9M323.3 198.1L327.9 197.6M323.3 198.1L325.5 205.4M325.5 205.4L331.1 203.8M325.5 205.4L326.8 209.6M326.8 209.6L328.3 209.0M323.6 213.9L331.2 214.2M323.6 213.9L326.0 217.3M326.0 217.3L330.2 218.6M326.0 217.3L326.9 222.4M326.9 222.4L323.5 225.5M323.5 225.5L330.8 226.0M323.6 231.6L328.2 232.6M323.6 231.6L325.5 237.2M325.5 237.2L323.1 238.5M323.1 238.5L327.9 240.6M323.1 238.5L326.8 244.1M326.8 244.1L324.1 251.0M324.1 251.0L323.5 255.3M326.5 259.0L325.4 261.5M325.4 261.5L325.4 268.4M325.4 268.4L330.2 268.6M326.0 272.7L331.1 273.6M326.0 272.7L323.5 276.1M323.5 276.1L328.0 278.6M325.6 280.2L329.8 283.5M325.6 280.2L323.5 285.5M326.1 291.2L324.5 297.4M325.3 299.2L325.2 306.2M325.3 315.9L325.5 317.4M325.5 317.4L330.4 317.6M327.8 47.2L333.3 49.0M327.8 47.2L328.9 52.2M328.9 52.2L330.8 56.3M330.8 56.3L333.5 54.8M330.1 60.2L334.1 62.4M330.1 60.2L328.7 65.6M329.7 69.1L335.0 70.7M329.7 69.1L330.6 74.8M330.6 74.8L334.1 75.4M330.6 74.8L329.1 78.5M330.9 85.5L334.9 82.6M331.3 87.6L328.0 93.7M328.0 93.7L334.5 93.2M328.0 93.7L327.8 99.2M327.8 99.2L335.0 97.8M327.8 99.2L330.3 101.8M330.3 101.8L329.4 107.7M329.4 107.7L328.3 111.1M328.3 111.1L332.4 113.5M330.7 116.9L329.9 119.3M328.5 124.5L333.4 126.6M328.5 124.5L327.8 130.5M327.8 130.5L329.9 136.2M329.9 136.2L329.8 140.8M329.8 140.8L335.5 139.4M329.8 140.8L329.5 143.9M329.5 143.9L328.8 148.3M327.7 157.0L335.6 158.3M327.7 157.0L328.5 162.7M328.5 162.7L334.2 162.4M328.5 162.7L329.6 166.7M329.6 166.7L335.6 165.2M331.2 172.4L328.0 174.2M328.0 174.2L330.4 181.0M330.2 185.2L327.8 189.6M327.8 189.6L335.9 191.3M327.9 197.6L331.1 203.8M331.1 203.8L333.7 202.0M328.3 209.0L334.2 209.9M331.2 214.2L335.2 212.3M331.2 214.2L330.2 218.6M328.2 232.6L330.4 233.9M330.4 233.9L333.8 235.5M330.4 233.9L327.9 240.6M327.9 240.6L334.6 240.5M327.9 240.6L331.3 245.4M331.3 245.4L335.6 246.5M331.0 248.1L333.5 247.7M331.0 248.1L329.9 253.0M329.9 253.0L335.3 254.8M329.9 253.0L329.0 257.5M329.0 257.5L329.5 261.7M331.1 273.6L328.0 278.6M328.0 278.6L334.7 275.5M328.0 278.6L329.8 283.5M329.6 284.8L332.9 287.4M330.4 289.8L336.0 292.2M330.4 289.8L331.4 295.7M328.7 313.7L333.0 313.4M330.4 317.6L333.5 320.0M333.3 49.0L333.3 52.8M333.3 52.8L337.2 53.5M333.3 52.8L333.5 54.8M333.5 54.8L338.3 56.0M333.5 54.8L334.1 62.4M334.1 62.4L340.1 61.1M334.1 62.4L335.3 63.9M335.3 63.9L339.3 65.4M335.3 63.9L335.0 70.7M335.0 70.7L338.6 71.9M335.0 70.7L334.1 75.4M334.1 75.4L338.0 74.9M334.3 78.2L334.9 82.6M334.9 82.6L337.5 84.0M333.5 89.9L334.5 93.2M334.5 93.2L337.1 94.9M334.5 93.2L335.0 97.8M335.0 97.8L333.8 102.6M333.8 102.6L337.1 103.0M332.4 106.4L332.4 113.5M332.4 113.5L338.5 112.6M332.4 113.5L335.7 116.8M332.9 122.1L333.4 126.6M333.4 126.6L338.0 127.1M333.4 126.6L334.8 130.4M334.8 130.4L337.6 128.6M335.1 133.7L339.0 134.0M335.5 139.4L339.6 137.5M335.5 139.4L335.2 145.1M335.2 145.1L339.5 143.3M333.3 148.1L340.4 147.6M333.3 148.1L333.7 151.4M333.7 151.4L338.5 152.3M335.6 158.3L338.9 156.8M335.6 158.3L334.2 162.4M335.6 165.2L333.7 172.1M333.7 172.1L334.3 176.0M334.3 176.0L339.6 176.6M334.3 176.0L333.3 179.5M333.3 179.5L338.5 179.0M333.3 179.5L334.8 184.6M334.8 184.6L335.9 191.3M335.9 191.3L337.6 188.6M336.0 193.6L339.4 193.8M336.0 193.6L334.3 197.5M334.3 197.5L333.7 202.0M333.7 202.0L337.8 202.4M334.2 209.9L337.4 208.9M335.2 212.3L339.1 211.9M335.2 212.3L333.3 219.0M332.5 223.3L335.6 225.0M335.6 225.0L339.4 226.4M333.8 235.5L340.5 235.3M333.8 235.5L334.6 240.5M334.6 240.5L339.3 238.8M334.6 240.5L335.6 246.5M335.6 246.5L333.5 247.7M335.3 254.8L334.8 257.2M334.8 257.2L337.7 257.4M336.0 271.4L340.2 274.3M336.0 271.4L334.7 275.5M334.7 275.5L340.1 275.4M334.7 275.5L334.4 282.7M334.4 282.7L332.9 287.4M332.9 287.4L340.2 286.8M332.9 287.4L336.0 292.2M336.0 292.2L339.3 290.8M333.0 313.4L338.0 314.3M333.0 313.4L333.5 320.0M333.5 320.0L338.0 319.9M340.7 40.9L343.6 41.9M340.7 40.9L337.1 46.5M337.1 46.5L341.8 47.1M337.2 53.5L343.5 53.0M337.2 53.5L338.3 56.0M338.3 56.0L340.1 61.1M340.1 61.1L342.7 62.1M340.1 61.1L339.3 65.4M339.3 65.4L342.4 66.1M339.3 65.4L338.6 71.9M338.6 71.9L341.6 68.6M338.7 78.0L337.5 84.0M337.5 84.0L345.1 83.6M337.5 84.0L339.9 88.3M339.9 88.3L343.6 88.3M339.9 88.3L337.1 94.9M337.1 94.9L337.4 99.3M337.4 99.3L344.9 98.1M337.1 103.0L337.5 106.1M338.5 112.6L344.7 111.1M338.5 112.6L338.6 115.9M338.6 115.9L343.8 116.4M338.4 120.9L342.3 119.0M339.0 134.0L339.6 137.5M339.6 137.5L339.5 143.3M339.5 143.3L345.3 144.4M340.4 147.6L338.5 152.3M338.5 152.3L345.1 153.0M338.5 152.3L338.9 156.8M339.4 161.9L339.6 166.0M339.6 166.0L342.3 166.4M339.6 166.0L338.6 171.6M338.6 171.6L341.8 171.7M338.6 171.6L339.6 176.6M338.5 179.0L342.2 181.3M337.3 183.9L343.8 186.0M337.6 188.6L345.1 189.0M337.6 188.6L339.4 193.8M339.4 193.8L340.4 198.0M337.8 202.4L337.4 208.9M337.4 208.9L342.5 209.7M339.1 211.9L345.2 214.5M339.1 211.9L340.0 218.1M340.0 218.1L342.8 218.6M340.0 218.1L338.5 222.4M338.5 222.4L344.1 223.3M338.5 222.4L339.4 226.4M339.4 226.4L344.5 226.4M339.4 226.4L337.2 230.7M337.2 230.7L343.0 232.3M340.5 235.3L339.3 238.8M338.3 249.1L341.9 250.9M338.3 249.1L338.8 253.3M337.7 257.4L342.4 257.4M337.7 257.4L339.5 263.4M339.5 263.4L340.5 269.8M340.5 269.8L343.1 268.4M340.5 269.8L340.2 274.3M340.2 274.3L343.6 274.3M340.1 275.4L343.4 277.4M337.4 283.6L343.3 281.5M337.4 283.6L340.2 286.8M340.2 286.8L344.1 284.9M340.2 286.8L339.3 290.8M342.3 38.6L343.6 41.9M343.6 41.9L341.8 47.1M343.5 53.0L347.2 53.2M343.5 53.0L342.3 55.2M342.7 62.1L346.9 60.9M342.7 62.1L342.4 66.1M342.4 66.1L348.8 65.1M341.6 68.6L348.6 70.2M341.6 68.6L344.2 74.8M341.9 79.3L347.2 79.6M345.1 83.6L349.7 82.9M343.6 88.3L346.3 87.5M343.6 88.3L343.4 91.5M344.9 98.1L342.8 101.6M342.8 101.6L342.2 108.6M343.8 116.4L342.3 119.0M344.3 124.1L348.6 123.8M343.6 128.2L348.2 129.3M343.6 128.2L341.6 133.3M344.0 139.6L349.6 139.6M343.5 146.6L348.8 149.6M343.5 146.6L345.1 153.0M345.1 153.0L346.3 152.7M344.8 155.9L344.7 162.1M344.7 162.1L342.3 166.4M342.3 166.4L348.9 167.8M341.8 171.7L342.3 176.8M343.8 186.0L345.1 189.0M345.1 189.0L346.7 189.1M345.1 189.0L344.1 194.0M344.4 204.0L346.2 205.3M344.4 204.0L342.5 209.7M342.5 209.7L345.2 214.5M345.2 214.5L342.8 218.6M342.8 218.6L349.0 215.5M342.8 218.6L344.1 223.3M344.5 226.4L346.4 226.5M344.5 226.4L343.0 232.3M343.0 232.3L347.4 232.1M343.0 232.3L344.0 236.0M344.0 236.0L344.8 238.6M344.8 238.6L349.3 239.2M344.8 238.6L341.6 244.9M341.6 244.9L349.6 246.5M341.6 244.9L341.9 250.9M341.9 250.9L348.2 249.7M341.9 250.9L341.8 255.7M341.8 255.7L342.4 257.4M342.4 257.4L346.9 257.6M342.4 257.4L344.4 264.1M344.4 264.1L348.4 262.7M344.4 264.1L343.1 268.4M343.1 268.4L349.0 268.3M343.6 274.3L343.4 277.4M343.4 277.4L343.3 281.5M344.1 292.6L348.8 291.3M342.2 314.9L347.9 313.9M342.2 314.9L344.6 318.5M348.9 47.0L351.5 46.2M347.2 53.2L354.1 51.3M346.9 60.9L348.8 65.1M348.8 65.1L350.7 67.2M348.8 65.1L348.6 70.2M347.2 79.6L349.7 82.9M349.7 82.9L354.2 84.5M346.3 87.5L351.0 89.8M346.7 94.5L354.1 92.5M346.8 106.3L353.9 106.0M346.8 106.3L349.5 111.4M349.5 111.4L353.7 112.3M349.5 111.4L347.0 116.6M347.0 116.6L352.5 117.7M346.5 120.9L348.6 123.8M348.6 123.8L348.2 129.3M348.2 129.3L353.5 130.6M348.9 135.0L352.2 134.6M349.6 139.6L346.8 142.6M348.8 149.6L346.3 152.7M346.3 152.7L353.3 153.0M349.4 162.4L350.7 162.0M348.9 167.8L354.4 165.7M348.9 167.8L347.2 171.9M347.2 171.9L347.5 175.9M347.5 175.9L351.7 177.2M347.5 175.9L348.1 181.2M346.7 189.1L351.7 191.4M349.3 196.2L352.1 194.2M347.5 200.7L354.3 199.2M347.5 200.7L346.2 205.3M346.2 205.3L353.3 202.1M349.0 211.5L351.1 214.0M349.0 215.5L351.6 219.1M349.0 215.5L346.6 221.5M346.6 221.5L353.3 220.8M346.6 221.5L346.4 226.5M346.4 226.5L353.4 225.9M346.4 226.5L347.4 232.1M347.4 232.1L352.7 229.6M347.4 232.1L348.0 237.6M348.0 237.6L353.9 236.9M348.0 237.6L349.3 239.2M349.6 246.5L348.2 249.7M346.7 253.5L346.9 257.6M346.9 257.6L348.4 262.7M348.4 262.7L350.8 261.7M348.4 262.7L349.0 268.3M349.0 268.3L352.4 266.6M349.0 268.3L349.2 271.0M349.2 271.0L349.3 277.2M349.3 277.2L353.5 278.3M349.3 277.2L348.5 280.8M348.5 280.8L351.9 282.0M348.5 280.8L348.7 286.0M348.7 286.0L354.5 286.8M348.7 286.0L348.8 291.3M347.9 313.9L351.4 315.9M348.9 317.0L353.4 318.6M352.9 41.7L357.6 43.7M352.9 41.7L351.5 46.2M354.1 51.3L355.5 51.7M354.1 51.3L354.0 57.3M354.0 57.3L356.3 56.8M354.0 57.3L351.7 61.2M351.7 61.2L356.8 60.8M351.7 61.2L350.7 67.2M350.7 67.2L353.1 68.7M353.1 68.7L358.7 69.4M353.1 68.7L352.7 74.8M352.7 74.8L356.3 73.6M352.7 74.8L353.2 78.6M353.2 78.6L354.2 84.5M354.2 84.5L358.8 82.6M354.2 84.5L351.0 89.8M351.0 89.8L356.7 90.1M354.1 92.5L358.6 95.0M353.9 106.0L357.2 105.2M353.7 112.3L356.3 111.5M352.5 117.7L353.8 122.7M353.8 122.7L355.8 120.2M353.8 122.7L354.3 125.7M353.5 130.6L355.7 131.1M353.5 130.6L352.2 134.6M352.2 134.6L352.6 138.1M352.6 138.1L358.4 140.5M351.7 145.1L357.8 143.0M351.7 145.1L353.9 149.2M353.9 149.2L353.3 153.0M353.3 153.0L355.5 154.7M353.3 153.0L352.9 158.2M352.9 158.2L356.1 159.2M352.9 158.2L350.7 162.0M350.7 162.0L354.4 165.7M354.4 165.7L352.5 169.8M351.7 177.2L357.9 175.0M350.8 181.7L357.1 179.5M350.8 181.7L353.7 186.6M351.7 191.4L357.9 190.3M352.1 194.2L355.5 195.9M352.1 194.2L354.3 199.2M354.3 199.2L358.3 199.1M353.3 202.1L357.5 203.6M350.7 207.3L358.2 208.3M350.7 207.3L351.1 214.0M351.6 219.1L353.3 220.8M353.3 220.8L357.3 223.4M353.3 220.8L353.4 225.9M353.4 225.9L358.0 225.5M352.7 229.6L357.2 231.5M353.9 236.9L357.5 235.6M353.9 236.9L352.9 241.1M352.9 241.1L357.2 241.1M352.0 243.6L351.9 250.5M351.9 250.5L358.3 250.3M352.8 252.8L355.8 253.3M352.8 252.8L351.6 258.7M350.8 261.7L357.2 262.6M352.4 266.6L359.1 268.9M352.4 266.6L354.1 271.2M354.1 271.2L356.7 273.4M354.1 271.2L353.5 278.3M351.9 282.0L357.7 283.5M351.9 282.0L354.5 286.8M351.4 315.9L353.4 318.6M353.4 318.6L356.7 316.7M357.6 43.7L360.6 42.5M357.6 43.7L358.3 47.9M358.3 47.9L355.5 51.7M355.5 51.7L361.5 50.8M355.5 51.7L356.3 56.8M356.3 56.8L362.5 55.7M356.3 56.8L356.8 60.8M356.8 60.8L360.0 62.3M356.8 60.8L357.3 65.9M357.3 65.9L358.7 69.4M358.7 69.4L361.0 69.3M356.3 73.6L362.5 73.5M356.3 73.6L355.7 80.7M355.7 80.7L363.6 80.0M355.7 80.7L358.8 82.6M358.8 82.6L362.0 82.3M358.8 82.6L356.7 90.1M356.7 90.1L361.0 88.3M356.7 90.1L358.6 95.0M358.6 95.0L363.6 91.9M358.6 95.0L359.1 97.1M355.6 101.4L363.6 103.3M355.6 101.4L357.2 105.2M357.2 105.2L356.3 111.5M356.3 111.5L360.6 110.6M357.9 114.9L360.0 116.4M357.9 114.9L355.8 120.2M355.8 120.2L360.2 119.6M355.7 131.1L362.9 129.2M358.6 132.9L363.6 133.3M358.4 140.5L360.4 138.7M358.4 140.5L357.8 143.0M357.8 143.0L363.0 142.3M355.5 154.7L362.9 152.4M355.5 154.7L356.1 159.2M358.2 160.5L362.6 162.2M358.2 160.5L355.7 167.4M355.9 172.0L357.9 175.0M357.9 175.0L363.1 176.8M357.9 175.0L357.1 179.5M357.1 179.5L360.5 181.5M357.1 179.5L358.6 185.7M357.9 190.3L360.9 190.8M355.5 195.9L358.3 199.1M358.3 199.1L360.6 197.3M357.5 203.6L362.3 204.3M357.5 203.6L358.2 208.3M358.2 208.3L359.9 209.5M356.4 212.9L363.3 212.3M356.4 212.9L356.1 215.5M356.1 215.5L361.9 218.0M357.3 223.4L363.4 222.6M357.3 223.4L358.0 225.5M358.0 225.5L361.9 227.6M358.0 225.5L357.2 231.5M357.2 231.5L361.8 229.4M357.2 231.5L357.5 235.6M357.5 235.6L362.0 235.5M357.5 235.6L357.2 241.1M357.2 241.1L361.2 240.0M358.6 245.1L358.3 250.3M358.3 250.3L362.7 251.1M358.3 250.3L355.8 253.3M355.8 253.3L356.5 258.2M356.5 258.2L360.4 258.9M356.5 258.2L357.2 262.6M357.2 262.6L362.7 264.5M359.1 268.9L361.4 266.7M356.7 273.4L363.6 273.0M358.8 275.9L362.4 276.6M358.8 275.9L357.7 283.5M357.7 283.5L360.3 282.1M357.7 283.5L356.7 287.8M356.7 287.8L361.4 287.9M356.7 287.8L358.4 290.3M360.6 42.5L366.9 44.2M360.6 42.5L360.4 47.8M360.0 62.3L366.1 61.6M360.0 62.3L362.8 67.0M363.6 80.0L368.1 78.8M362.0 82.3L365.3 82.7M362.0 82.3L361.0 88.3M361.0 88.3L365.3 88.3M361.0 88.3L363.6 91.9M363.6 91.9L367.2 94.9M360.6 110.6L364.6 110.2M360.0 116.4L367.6 114.7M360.0 116.4L360.2 119.6M360.2 119.6L365.6 120.9M360.2 119.6L360.6 127.0M360.6 127.0L362.9 129.2M363.6 133.3L366.0 133.1M363.6 133.3L360.4 138.7M360.4 138.7L363.0 142.3M363.0 142.3L368.3 142.1M362.9 148.6L365.2 146.8M362.9 152.4L366.6 154.8M362.9 152.4L360.1 156.1M360.1 156.1L367.5 156.1M360.1 156.1L362.6 162.2M362.6 162.2L366.6 161.7M362.6 162.2L362.8 165.7M362.8 165.7L361.0 170.3M361.0 170.3L366.8 170.5M363.1 176.8L366.2 176.1M363.1 176.8L360.5 181.5M360.5 181.5L365.9 180.8M360.5 181.5L360.0 185.1M360.0 185.1L364.8 184.9M360.0 185.1L360.9 190.8M360.9 190.8L362.6 195.1M362.6 195.1L366.4 195.4M362.6 195.1L360.6 197.3M360.6 197.3L367.6 199.9M362.3 204.3L359.9 209.5M359.9 209.5L363.3 212.3M363.4 222.6L367.3 220.2M363.4 222.6L361.9 227.6M361.9 227.6L367.8 225.0M361.9 227.6L361.8 229.4M361.8 229.4L362.0 235.5M362.0 235.5L366.8 237.1M362.0 235.5L361.2 240.0M361.2 240.0L368.1 240.2M361.2 240.0L360.7 244.3M360.7 244.3L367.8 243.2M360.7 244.3L362.7 251.1M362.7 251.1L361.6 255.5M361.6 255.5L360.4 258.9M360.4 258.9L362.7 264.5M362.7 264.5L366.8 264.1M361.4 266.7L365.2 268.3M361.4 266.7L363.6 273.0M363.6 273.0L368.2 271.7M362.4 276.6L367.6 279.0M360.3 282.1L367.1 281.6M360.3 282.1L361.4 287.9M361.4 287.9L366.1 286.3M362.6 314.9L367.2 313.8M362.6 314.9L362.4 317.7M362.4 317.7L365.4 318.8M366.9 44.2L364.8 48.2M364.8 48.2L364.6 52.3M364.6 52.3L366.5 54.8M366.5 54.8L366.1 61.6M366.4 71.3L364.9 76.3M368.1 78.8L372.6 79.9M365.3 82.7L365.3 88.3M365.3 88.3L369.6 88.4M367.2 94.9L369.3 92.0M367.2 94.9L366.6 99.5M366.6 99.5L372.8 97.3M366.6 99.5L366.1 103.0M366.1 103.0L369.6 102.2M364.5 106.7L369.3 107.4M364.6 110.2L370.0 110.5M364.6 110.2L367.6 114.7M367.6 114.7L371.5 117.8M365.6 120.9L366.5 123.6M366.5 123.6L371.3 125.4M366.5 123.6L364.9 130.7M366.0 133.1L366.3 138.7M366.3 138.7L368.3 142.1M368.3 142.1L365.2 146.8M365.2 146.8L366.6 154.8M366.6 154.8L371.0 153.0M366.8 170.5L366.2 176.1M365.9 180.8L369.5 181.6M365.9 180.8L364.8 184.9M364.8 184.9L371.1 183.9M364.8 184.9L368.3 189.4M368.3 189.4L372.4 188.1M367.6 199.9L365.9 204.4M365.3 208.6L370.4 209.8M364.6 211.6L369.2 211.8M364.6 211.6L365.2 216.8M365.2 216.8L370.3 218.7M365.2 216.8L367.3 220.2M367.3 220.2L367.8 225.0M367.8 225.0L372.5 228.4M366.8 237.1L370.9 234.7M366.8 237.1L368.1 240.2M368.1 240.2L369.6 239.4M368.1 240.2L367.8 243.2M367.5 252.9L364.8 258.9M364.8 258.9L366.8 264.1M366.8 264.1L365.2 268.3M365.2 268.3L369.9 267.1M365.2 268.3L368.2 271.7M367.1 281.6L372.0 281.9M366.1 286.3L370.3 287.0M366.1 286.3L365.0 289.4M367.2 313.8L365.4 318.8M365.4 318.8L372.2 318.0M370.9 75.8L374.7 73.9M370.9 75.8L372.6 79.9M372.6 79.9L371.7 84.2M371.7 84.2L376.5 85.2M371.7 84.2L369.6 88.4M369.6 88.4L375.4 88.4M369.6 88.4L369.3 92.0M369.3 92.0L375.3 92.7M369.6 102.2L369.3 107.4M369.3 107.4L370.0 110.5M370.0 110.5L371.5 117.8M371.5 117.8L375.0 118.1M369.2 121.6L371.3 125.4M371.3 125.4L376.6 126.7M371.3 125.4L370.7 128.1M370.7 128.1L374.2 131.6M370.7 128.1L370.4 134.7M370.4 141.1L375.1 139.3M370.4 141.1L370.4 145.1M370.4 145.1L372.2 149.5M372.2 149.5L373.9 148.9M372.2 149.5L371.0 153.0M371.0 153.0L376.4 153.7M372.3 156.1L375.2 159.0M370.0 160.3L373.8 160.8M370.0 160.3L371.0 166.6M371.0 166.6L372.7 173.0M372.7 173.0L375.7 170.4M370.6 176.0L369.5 181.6M369.5 181.6L373.8 182.4M369.5 181.6L371.1 183.9M371.1 183.9L377.1 183.6M371.1 183.9L372.4 188.1M369.8 194.3L375.7 195.7M369.8 194.3L372.9 197.6M372.9 197.6L376.1 200.7M370.1 204.7L376.3 205.2M370.4 209.8L374.1 209.4M370.4 209.8L369.2 211.8M369.2 211.8L374.9 214.4M369.2 211.8L370.3 218.7M370.3 218.7L376.7 219.2M370.3 218.7L369.5 222.7M369.5 222.7L376.6 221.6M369.5 222.7L372.5 228.4M372.2 229.5L373.9 231.3M370.9 234.7L375.9 236.6M370.9 234.7L369.6 239.4M371.9 245.3L376.5 244.6M369.6 248.8L376.3 251.1M369.4 255.8L375.1 254.3M369.4 255.8L372.0 258.7M372.0 258.7L375.5 260.1M372.8 265.2L369.9 267.1M369.9 267.1L369.8 273.1M369.8 273.1L374.3 274.4M369.8 273.1L371.4 277.3M371.4 277.3L372.0 281.9M372.0 281.9L375.3 280.0M372.0 281.9L370.3 287.0M370.3 287.0L375.2 286.7M371.4 315.8L374.7 314.2M374.7 73.9L379.7 73.8M376.5 85.2L378.5 83.1M376.5 85.2L375.4 88.4M375.4 88.4L381.8 87.8M375.3 92.7L376.7 99.3M376.7 99.3L379.7 99.5M376.7 99.3L374.8 103.2M374.8 103.2L382.0 101.0M374.5 105.1L379.2 105.7M374.5 105.1L376.3 112.6M376.3 112.6L380.0 110.8M376.3 112.6L375.0 118.1M375.0 118.1L380.9 117.7M375.0 118.1L376.4 120.1M376.4 120.1L376.6 126.7M376.6 126.7L378.7 124.7M374.2 131.6L378.8 129.7M374.2 131.6L375.4 133.7M375.4 133.7L375.1 139.3M375.1 139.3L375.7 143.0M375.7 143.0L373.9 148.9M373.9 148.9L378.8 148.8M373.9 148.9L376.4 153.7M376.4 153.7L381.7 154.5M376.4 153.7L375.2 159.0M375.2 159.0L378.8 156.3M373.8 160.8L381.7 162.9M373.8 160.8L373.8 167.0M373.8 167.0L375.7 170.4M375.7 174.1L381.1 177.1M375.7 174.1L373.8 182.4M373.8 182.4L377.1 183.6M377.1 183.6L376.2 189.8M376.2 189.8L380.7 189.3M376.2 189.8L375.7 195.7M375.7 195.7L379.6 195.6M375.7 195.7L376.1 200.7M376.1 200.7L376.3 205.2M376.3 205.2L379.1 205.5M374.1 209.4L379.9 208.0M374.9 214.4L376.7 219.2M376.7 219.2L382.0 217.3M376.7 219.2L376.6 221.6M376.6 221.6L381.5 221.6M376.6 221.6L375.7 227.7M375.7 227.7L373.9 231.3M376.5 244.6L380.3 244.6M376.5 244.6L376.3 251.1M375.1 254.3L379.7 252.3M375.5 260.1L382.1 258.1M375.5 260.1L374.7 262.6M374.7 262.6L381.8 261.6M374.7 262.6L375.2 268.6M375.2 268.6L379.7 269.1M374.3 274.4L380.9 273.3M375.6 278.1L380.2 275.6M375.6 278.1L375.3 280.0M375.3 280.0L381.5 282.8M375.2 286.7L380.1 286.6M374.7 314.2L376.3 318.7M376.3 318.7L381.9 319.7M380.9 79.9L378.5 83.1M378.5 83.1L381.8 87.8M381.8 87.8L384.3 88.6M381.8 87.8L379.4 93.5M379.4 93.5L384.6 95.0M379.4 93.5L379.7 99.5M382.0 101.0L386.4 101.2M379.2 105.7L385.8 106.5M380.0 110.8L385.2 111.8M378.6 119.0L385.5 120.3M378.7 124.7L385.9 125.4M378.8 129.7L385.3 131.9M378.8 129.7L379.7 135.5M379.7 135.5L384.0 132.7M379.7 135.5L382.0 141.0M382.0 141.0L386.3 139.3M382.0 141.0L379.9 144.3M379.9 144.3L385.4 145.1M379.9 144.3L378.8 148.8M378.8 148.8L386.3 148.0M378.8 148.8L381.7 154.5M381.7 154.5L386.7 152.6M381.7 154.5L378.8 156.3M378.8 156.3L385.7 158.9M378.8 156.3L381.7 162.9M381.7 162.9L381.2 165.2M381.2 165.2L380.7 169.6M380.7 169.6L384.5 172.7M380.7 169.6L381.1 177.1M381.1 177.1L379.5 178.7M379.5 178.7L385.9 180.8M379.5 178.7L381.1 187.1M381.1 187.1L380.7 189.3M380.7 189.3L379.6 195.6M379.6 195.6L382.0 198.5M379.1 205.5L379.9 208.0M382.0 217.3L384.3 217.7M382.0 217.3L381.5 221.6M381.5 221.6L383.6 222.2M381.5 221.6L379.9 227.7M379.9 227.7L382.0 232.2M382.0 232.2L385.7 230.7M382.0 232.2L381.0 237.0M381.0 237.0L385.7 236.7M381.8 242.1L384.3 238.6M381.8 242.1L380.3 244.6M380.3 244.6L378.3 249.7M378.3 249.7L385.1 250.3M378.3 249.7L379.7 252.3M379.7 252.3L382.1 258.1M382.1 258.1L382.9 260.6M381.8 261.6L385.2 263.0M381.8 261.6L379.7 269.1M379.7 269.1L386.3 269.5M379.7 269.1L380.9 273.3M380.9 273.3L380.2 275.6M380.2 275.6L385.3 276.9M381.5 282.8L385.1 283.1M381.5 282.8L380.1 286.6M379.7 315.5L381.9 319.7M381.9 319.7L385.4 317.3M386.1 76.2L385.6 78.3M385.6 78.3L384.8 84.1M384.8 84.1L390.0 84.0M384.3 88.6L389.0 89.9M385.3 99.6L390.1 99.6M385.3 99.6L386.4 101.2M386.4 101.2L388.8 102.1M386.4 101.2L385.8 106.5M385.8 106.5L385.2 111.8M385.2 111.8L388.8 112.7M385.5 120.3L388.6 121.1M385.3 131.9L389.3 128.8M385.3 131.9L384.0 132.7M384.0 132.7L390.0 135.3M384.0 132.7L386.3 139.3M386.3 139.3L388.3 138.2M385.4 145.1L388.7 143.1M386.3 148.0L386.7 152.6M386.7 152.6L390.5 152.6M386.7 152.6L385.7 158.9M385.7 158.9L384.3 161.9M384.3 161.9L389.2 163.9M384.3 161.9L384.3 166.2M383.1 177.9L385.9 180.8M385.9 180.8L387.7 181.3M385.3 184.4L389.5 186.3M385.3 184.4L385.8 191.2M385.8 191.2L390.2 190.7M385.8 191.2L384.4 194.4M384.4 194.4L388.5 193.5M384.4 194.4L383.7 198.1M383.7 198.1L389.8 197.3M383.7 198.1L386.1 204.1M386.1 204.1L391.1 204.4M384.6 208.7L383.6 210.9M383.6 210.9L387.8 213.0M383.6 210.9L384.3 217.7M384.3 217.7L390.4 215.9M383.6 222.2L387.9 222.7M384.1 225.7L389.3 227.7M384.1 225.7L385.7 230.7M385.7 230.7L389.1 233.0M385.7 236.7L390.8 235.1M384.3 238.6L389.5 240.7M386.1 245.2L389.2 246.2M386.1 245.2L385.1 250.3M385.0 255.7L382.9 260.6M382.9 260.6L389.6 259.1M382.9 260.6L385.2 263.0M385.2 263.0L387.6 264.6M386.3 269.5L389.2 266.7M386.3 269.5L385.2 270.7M385.2 270.7L385.3 276.9M385.3 276.9L390.3 278.1M385.3 313.4L385.4 317.3M385.4 317.3L387.8 316.9M390.8 71.8L390.4 75.3M389.7 79.4L395.5 80.7M389.7 79.4L390.0 84.0M390.0 84.0L393.8 84.0M390.0 84.0L389.0 89.9M389.0 89.9L395.3 88.1M389.0 89.9L388.6 92.8M388.6 92.8L390.1 99.6M390.1 99.6L388.8 102.1M389.0 105.9L393.4 108.8M389.0 105.9L388.8 112.7M388.2 116.1L392.5 115.7M388.6 121.1L393.2 122.5M388.6 121.1L390.4 123.9M390.4 123.9L393.7 127.2M390.4 123.9L389.3 128.8M389.3 128.8L393.1 128.3M389.3 128.8L390.0 135.3M390.0 135.3L395.5 133.0M390.0 135.3L388.3 138.2M388.7 143.1L393.2 145.1M388.7 143.1L390.9 149.8M390.9 149.8L393.7 150.2M390.9 149.8L390.5 152.6M390.5 152.6L394.2 154.7M390.5 152.6L389.2 156.5M389.2 156.5L395.6 157.1M387.8 166.4L394.6 165.0M387.8 166.4L388.2 172.7M388.2 172.7L394.7 172.4M387.7 181.3L392.4 180.8M389.5 186.3L392.5 186.5M388.5 193.5L394.9 194.1M389.8 197.3L392.8 198.7M389.8 197.3L391.1 204.4M389.4 207.7L395.5 207.5M390.4 215.9L394.7 218.0M387.9 222.7L389.3 227.7M389.3 227.7L394.5 227.8M389.3 227.7L389.1 233.0M389.1 233.0L392.6 232.9M390.8 235.1L394.6 234.3M389.5 240.7L392.7 240.9M389.5 240.7L389.2 246.2M389.2 246.2L393.3 246.7M389.2 246.2L390.2 250.8M390.2 250.8L388.5 254.2M388.5 254.2L389.6 259.1M389.6 259.1L393.3 260.3M389.6 259.1L387.6 264.6M387.6 264.6L394.8 263.7M387.6 264.6L389.2 266.7M389.2 266.7L395.7 269.5M389.2 266.7L390.7 272.8M390.7 272.8L394.9 272.8M390.3 278.1L392.3 276.1M389.5 313.1L387.8 316.9M387.8 316.9L392.5 319.2M394.8 76.3L398.1 73.5M394.8 76.3L395.5 80.7M395.5 80.7L398.4 78.0M393.8 84.0L395.3 88.1M395.3 88.1L393.1 91.4M393.1 91.4L400.3 91.7M393.1 91.4L392.9 96.4M392.9 96.4L399.1 98.3M395.6 101.7L397.5 102.9M395.6 101.7L393.4 108.8M393.4 108.8L398.8 107.4M394.7 111.3L397.4 111.5M394.7 111.3L392.5 115.7M392.5 115.7L399.9 116.6M393.2 122.5L393.7 127.2M393.7 127.2L400.0 123.7M393.7 127.2L393.1 128.3M393.1 128.3L398.5 130.1M393.1 128.3L395.5 133.0M395.5 133.0L395.1 139.6M395.1 139.6L397.1 140.5M395.1 139.6L393.2 145.1M393.2 145.1L393.7 150.2M393.7 150.2L398.4 146.7M393.7 150.2L394.2 154.7M394.2 154.7L397.0 154.2M394.7 163.1L397.9 160.6M394.7 172.4L399.6 171.4M394.7 172.4L392.8 174.5M392.8 174.5L399.9 177.9M392.4 180.8L398.9 178.9M392.5 186.5L397.2 185.9M392.5 186.5L393.7 191.7M393.7 191.7L397.2 191.3M394.9 194.1L396.9 192.7M392.8 198.7L400.5 198.6M394.4 205.0L398.8 204.0M394.4 205.0L395.5 207.5M395.5 207.5L397.2 207.6M395.5 207.5L392.2 213.4M392.2 213.4L398.1 213.7M392.2 213.4L394.7 218.0M394.7 218.0L399.7 218.1M394.7 218.0L395.2 223.2M394.5 227.8L392.6 232.9M392.6 232.9L398.0 231.6M394.6 234.3L400.5 234.0M393.3 246.7L393.2 249.5M393.2 249.5L397.1 250.0M393.2 249.5L394.0 255.9M394.0 255.9L397.9 255.2M393.3 260.3L394.8 263.7M394.8 263.7L395.7 269.5M395.7 269.5L394.9 272.8M394.9 272.8L392.3 276.1M392.3 276.1L397.6 277.9M392.3 276.1L394.6 280.3M394.6 280.3L399.8 280.9M392.5 319.2L398.7 317.3M398.1 71.0L401.8 70.6M398.1 71.0L398.1 73.5M398.1 73.5L402.7 75.5M398.4 78.0L398.5 82.5M398.5 82.5L405.0 85.8M399.5 87.5L400.3 91.7M400.3 91.7L404.2 92.4M400.3 91.7L399.1 98.3M399.1 98.3L397.5 102.9M397.5 102.9L404.5 100.9M398.8 107.4L404.7 107.6M398.8 107.4L397.4 111.5M397.4 111.5L403.6 111.2M397.4 111.5L399.9 116.6M399.9 116.6L402.7 115.8M399.9 116.6L397.6 120.2M397.6 120.2L400.0 123.7M400.0 123.7L404.0 126.8M398.5 130.1L398.3 132.7M398.3 132.7L397.1 140.5M397.1 140.5L404.4 138.8M397.1 140.5L398.4 143.0M398.4 143.0L402.2 141.9M398.4 146.7L397.0 154.2M397.0 154.2L399.6 156.4M399.6 156.4L402.4 159.0M397.9 160.6L404.2 161.3M397.9 160.6L397.9 166.9M397.9 166.9L402.8 166.5M397.9 166.9L399.6 171.4M399.6 171.4L404.0 170.6M399.6 171.4L399.9 177.9M399.9 177.9L402.6 176.0M398.9 178.9L397.2 185.9M397.2 185.9L397.2 191.3M397.2 191.3L401.5 189.2M396.9 192.7L403.5 193.4M396.9 192.7L400.5 198.6M398.1 213.7L404.7 211.3M398.1 213.7L399.7 218.1M399.7 218.1L403.4 217.6M400.2 225.4L404.7 225.9M400.2 225.4L398.0 231.6M398.0 231.6L401.5 230.1M400.5 234.0L404.6 236.2M398.7 246.3L397.1 250.0M397.9 255.2L399.4 258.5M399.4 258.5L397.3 264.4M397.3 264.4L403.1 264.5M397.3 264.4L399.4 268.2M399.4 268.2L401.7 268.5M399.5 274.3L402.6 273.3M397.6 277.9L399.8 280.9M402.7 75.5L409.6 73.3M405.0 85.8L402.8 90.5M404.2 92.4L408.1 93.7M404.2 92.4L402.5 97.9M402.5 97.9L406.9 97.2M404.5 100.9L407.6 103.9M404.7 107.6L408.9 106.9M404.7 107.6L403.6 111.2M403.6 111.2L406.2 111.1M403.6 111.2L402.7 115.8M402.7 115.8L409.0 116.0M402.7 115.8L404.0 120.6M404.0 120.6L407.4 121.3M404.0 120.6L404.0 126.8M404.0 126.8L406.1 126.0M404.0 126.8L401.6 128.2M401.6 128.2L408.5 128.5M401.6 128.2L404.9 133.4M404.9 133.4L407.5 136.0M404.9 133.4L404.4 138.8M404.4 138.8L406.9 139.3M404.4 138.8L402.2 141.9M402.2 141.9L402.9 148.8M402.9 148.8L407.4 147.8M402.9 148.8L401.5 151.1M401.5 151.1L409.4 153.7M401.5 151.1L402.4 159.0M402.4 159.0L409.7 157.0M404.0 170.6L408.5 170.2M404.0 170.6L402.6 176.0M404.1 185.2L409.5 185.5M404.1 185.2L401.5 189.2M401.5 189.2L407.2 190.0M402.8 199.2L409.0 199.3M402.8 199.2L402.7 202.4M402.7 202.4L408.2 202.2M402.7 202.4L404.6 206.5M404.6 206.5L409.1 208.7M404.7 211.3L408.4 212.1M404.7 211.3L403.4 217.6M402.9 222.5L407.1 223.9M401.5 230.1L404.6 236.2M404.6 236.2L407.4 237.5M404.2 240.0L409.3 241.1M404.2 240.0L402.5 245.7M402.5 245.7L407.6 245.0M403.5 251.2L401.9 253.6M401.9 253.6L409.1 254.6M401.9 253.6L403.9 260.3M403.9 260.3L403.1 264.5M403.1 264.5L406.0 263.0M403.1 264.5L401.7 268.5M401.7 268.5L406.9 268.4M401.7 268.5L402.6 273.3M402.6 273.3L402.4 276.0M402.4 276.0L409.3 276.9M403.0 315.5L408.4 314.5M404.4 318.7L409.6 317.1M409.6 73.3L413.6 74.9M406.7 78.6L411.8 79.4M407.3 84.0L412.3 82.8M407.3 84.0L409.3 87.1M409.3 87.1L413.1 89.9M409.3 87.1L408.1 93.7M408.1 93.7L413.0 91.3M408.1 93.7L406.9 97.2M406.9 97.2L412.0 98.8M406.9 97.2L407.6 103.9M407.6 103.9L408.9 106.9M408.9 106.9L413.1 107.1M408.9 106.9L406.2 111.1M406.2 111.1L411.8 109.8M406.2 111.1L409.0 116.0M409.0 116.0L413.2 114.9M409.0 116.0L407.4 121.3M407.4 121.3L412.8 120.9M406.1 126.0L408.5 128.5M408.5 128.5L414.2 130.9M408.5 128.5L407.5 136.0M407.5 136.0L413.8 133.4M406.9 139.3L407.2 144.0M407.2 144.0L407.4 147.8M407.4 147.8L409.4 153.7M407.7 161.7L413.9 161.6M407.7 161.7L409.2 166.3M409.2 166.3L413.9 165.5M409.2 166.3L408.5 170.2M408.5 170.2L411.0 171.7M408.5 170.2L408.0 175.1M408.0 175.1L411.4 175.8M409.4 180.1L411.3 181.5M409.4 180.1L409.5 185.5M409.0 199.3L408.2 202.2M408.2 202.2L409.1 208.7M409.1 208.7L408.4 212.1M408.4 212.1L412.4 212.0M408.4 212.1L408.8 217.5M408.8 217.5L410.7 218.2M407.1 223.9L408.8 227.3M408.8 227.3L412.4 226.4M408.8 227.3L409.1 231.9M409.1 231.9L414.0 230.7M409.1 231.9L407.4 237.5M407.4 237.5L411.0 237.5M409.3 241.1L407.6 245.0M407.6 245.0L406.1 251.1M406.1 251.1L409.1 254.6M409.1 254.6L412.4 253.8M409.1 254.6L407.7 260.0M407.7 260.0L413.5 257.9M406.0 263.0L406.9 268.4M406.9 268.4L407.2 273.0M407.2 273.0L409.3 276.9M409.3 276.9L411.5 276.9M408.4 314.5L409.6 317.1M409.6 317.1L412.0 319.6M412.8 69.9L418.8 69.5M412.8 69.9L413.6 74.9M413.6 74.9L417.2 75.4M413.6 74.9L411.8 79.4M411.8 79.4L416.4 79.9M411.8 79.4L412.3 82.8M412.3 82.8L413.1 89.9M413.1 89.9L417.2 89.5M412.0 98.8L416.6 96.5M411.0 102.4L416.5 101.7M413.1 107.1L415.2 108.0M413.1 107.1L411.8 109.8M411.8 109.8L417.1 111.5M411.8 109.8L413.2 114.9M413.2 114.9L412.8 120.9M412.8 120.9L415.6 121.6M412.8 120.9L413.2 123.9M413.2 123.9L415.3 126.8M413.2 123.9L414.2 130.9M414.2 130.9L417.0 131.8M413.8 133.4L418.4 134.3M413.8 133.4L413.2 138.7M413.2 138.7L416.4 138.9M413.2 144.6L418.0 143.7M413.2 144.6L412.1 150.1M412.1 150.1L417.8 150.3M412.2 152.9L417.9 153.1M413.2 156.3L413.9 161.6M413.9 161.6L417.3 161.9M413.9 165.5L418.7 168.7M413.9 165.5L411.0 171.7M411.0 171.7L417.3 171.6M411.4 175.8L415.5 176.2M411.4 175.8L411.3 181.5M411.3 181.5L418.6 179.6M411.3 181.5L413.3 185.9M413.3 185.9L418.0 184.3M413.3 185.9L411.0 188.1M411.0 188.1L412.7 192.8M412.7 192.8L417.4 195.4M413.2 199.2L415.2 200.3M414.0 204.8L417.1 202.6M414.0 204.8L413.0 209.4M413.0 209.4L416.3 208.4M413.0 209.4L412.4 212.0M412.4 212.0L410.7 218.2M413.0 222.5L417.5 221.6M413.0 222.5L412.4 226.4M412.4 226.4L414.0 230.7M414.0 230.7L411.0 237.5M411.0 237.5L415.7 236.2M411.0 237.5L413.4 241.9M413.4 241.9L414.2 244.8M414.2 244.8L417.6 243.6M411.1 249.6L418.8 249.8M411.1 249.6L412.4 253.8M413.5 257.9L414.2 262.3M414.2 262.3L417.4 262.9M414.2 262.3L411.6 269.3M411.6 269.3L411.4 273.5M411.4 273.5L411.5 276.9M412.0 319.6L415.9 316.8M418.8 69.5L420.2 70.8M418.8 69.5L417.2 75.4M417.2 75.4L421.8 74.3M417.2 75.4L416.4 79.9M416.4 79.9L422.4 78.3M416.4 79.9L416.7 85.3M416.7 85.3L422.0 83.7M416.7 85.3L417.2 89.5M417.2 89.5L420.2 89.6M417.3 93.9L416.6 96.5M416.5 101.7L415.2 108.0M417.1 111.5L421.1 111.8M417.1 111.5L417.8 114.6M417.8 114.6L421.1 115.3M417.8 114.6L415.6 121.6M415.6 121.6L420.3 121.8M415.6 121.6L415.3 126.8M415.3 126.8L421.3 124.1M418.4 134.3L420.6 133.3M416.4 138.9L418.0 143.7M418.0 143.7L419.8 145.4M417.8 150.3L422.4 149.7M417.8 150.3L417.9 153.1M417.9 157.6L420.1 156.7M417.3 161.9L423.0 161.4M418.7 168.7L423.1 168.1M418.7 168.7L417.3 171.6M417.3 171.6L415.5 176.2M415.5 176.2L421.3 177.3M415.5 176.2L418.6 179.6M418.6 179.6L420.9 179.6M417.4 195.4L415.2 200.3M415.2 200.3L420.4 200.1M415.2 200.3L417.1 202.6M417.1 202.6L416.3 208.4M416.3 208.4L417.9 211.6M417.9 211.6L420.8 211.3M417.9 211.6L415.4 216.4M417.5 221.6L418.0 227.5M418.0 227.5L416.5 231.5M416.5 231.5L421.0 231.5M415.7 236.2L420.5 235.7M415.7 236.2L417.6 239.4M417.6 239.4L421.9 239.7M417.6 239.4L417.6 243.6M417.6 243.6L418.8 249.8M418.8 249.8L419.9 248.2M418.8 249.8L418.6 254.8M418.6 254.8L421.3 252.9M418.6 254.8L415.9 259.7M415.9 259.7L421.8 259.2M417.4 262.9L422.1 264.9M417.4 262.9L417.7 269.0M417.7 269.0L422.0 269.0M417.7 269.0L417.7 271.5M420.2 70.8L421.8 74.3M421.8 74.3L426.3 74.2M421.8 74.3L422.4 78.3M422.4 78.3L425.8 79.0M422.4 78.3L422.0 83.7M422.0 83.7L420.2 89.6M420.2 89.6L420.4 94.3M420.4 94.3L422.6 97.6M422.6 97.6L425.3 97.0M421.4 101.3L425.0 103.2M421.4 101.3L420.2 107.7M420.2 107.7L426.9 106.5M421.1 111.8L424.7 112.0M421.1 111.8L421.1 115.3M421.1 115.3L425.6 116.4M421.1 115.3L420.3 121.8M420.3 121.8L426.8 118.9M420.3 121.8L421.3 124.1M421.3 124.1L423.0 128.7M423.0 128.7L420.6 133.3M421.8 140.3L419.8 145.4M419.8 145.4L427.9 142.2M422.4 149.7L421.3 152.8M421.3 152.8L420.1 156.7M420.1 156.7L423.0 161.4M423.0 161.4L425.6 163.9M423.0 161.4L423.1 168.1M423.2 170.0L421.3 177.3M421.3 177.3L420.9 179.6M420.9 179.6L419.8 185.3M419.8 185.3L427.8 184.9M419.8 185.3L421.8 188.7M421.8 188.7L420.7 194.9M420.4 200.1L425.3 200.5M420.4 200.1L423.0 203.3M423.0 203.3L420.2 208.5M420.2 208.5L425.4 206.3M420.2 208.5L420.8 211.3M420.8 211.3L424.7 214.0M422.4 217.6L427.9 219.2M422.4 217.6L420.7 221.0M420.7 221.0L425.4 223.7M421.0 231.5L427.8 232.4M421.0 231.5L420.5 235.7M420.5 235.7L421.9 239.7M421.9 239.7L424.7 239.2M421.9 239.7L422.0 245.2M422.0 245.2L425.3 243.8M419.9 248.2L426.5 248.9M421.3 252.9L421.8 259.2M421.8 259.2L422.1 264.9M422.1 264.9L424.3 263.6M422.1 264.9L422.0 269.0M420.1 274.0L424.4 272.5M419.8 319.4L424.3 318.2M426.6 61.7L430.2 61.6M425.1 68.5L426.3 74.2M426.3 74.2L431.6 74.2M426.3 74.2L425.8 79.0M425.8 79.0L429.8 77.9M425.8 79.0L427.7 83.2M427.7 83.2L431.0 82.7M427.7 83.2L426.9 88.9M425.4 94.8L430.3 92.9M425.4 94.8L425.3 97.0M425.3 97.0L432.6 97.9M425.0 103.2L431.0 102.0M425.0 103.2L426.9 106.5M426.9 106.5L431.0 108.2M424.7 112.0L430.9 111.6M424.7 112.0L425.6 116.4M425.6 116.4L430.2 115.0M424.5 126.6L427.6 128.4M427.6 128.4L425.1 134.3M425.1 134.3L429.3 135.6M427.5 138.5L430.6 139.7M427.9 142.2L430.5 144.9M427.9 142.2L427.7 146.7M426.6 154.8L431.0 152.1M426.6 154.8L427.0 159.2M427.0 159.2L431.7 157.1M427.0 159.2L425.6 163.9M425.6 163.9L429.8 160.4M425.6 163.9L427.7 165.9M427.7 165.9L427.2 173.0M427.2 173.0L429.9 173.0M425.1 175.6L429.1 175.7M425.1 175.6L427.2 180.9M427.2 180.9L430.5 181.3M427.2 180.9L427.8 184.9M427.8 184.9L431.9 187.0M426.0 188.5L430.1 188.2M426.0 188.5L425.3 195.8M425.3 200.5L429.9 199.5M425.3 200.5L427.4 203.9M427.4 203.9L425.4 206.3M425.4 206.3L429.9 209.7M424.7 214.0L431.1 212.4M424.7 214.0L427.9 219.2M427.9 219.2L425.4 223.7M425.4 223.7L429.7 222.4M425.4 223.7L426.0 226.1M426.0 226.1L429.1 226.6M427.8 232.4L432.0 229.3M426.9 235.0L430.0 235.5M426.9 235.0L424.7 239.2M424.7 239.2L431.2 241.3M425.3 243.8L431.5 244.7M426.5 248.9L425.1 255.6M425.7 256.9L424.3 263.6M424.3 263.6L431.4 263.3M424.3 263.6L424.4 268.2M424.4 268.2L424.4 272.5M428.1 313.4L429.6 313.0M428.1 313.4L424.3 318.2M430.9 43.0L435.7 43.0M430.9 43.0L432.1 46.5M432.1 46.5L431.2 53.5M431.2 53.5L435.4 53.4M432.6 56.6L436.2 56.2M432.6 56.6L430.2 61.6M430.2 61.6L434.5 59.6M430.2 61.6L431.7 66.3M431.7 66.3L436.0 66.6M431.7 66.3L431.5 69.8M431.5 69.8L431.6 74.2M431.6 74.2L429.8 77.9M429.8 77.9L431.0 82.7M430.0 87.8L433.6 87.5M430.0 87.8L430.3 92.9M430.3 92.9L436.9 94.0M431.0 102.0L435.0 102.3M431.0 102.0L431.0 108.2M430.9 111.6L435.5 110.7M430.9 111.6L430.2 115.0M430.2 115.0L429.7 119.2M429.7 119.2L437.0 121.6M429.7 119.2L430.0 123.7M430.0 123.7L436.8 126.8M430.0 123.7L430.5 130.3M429.3 135.6L434.7 134.9M429.3 135.6L430.6 139.7M430.6 139.7L430.5 144.9M430.5 144.9L433.8 145.2M431.5 147.0L436.0 147.6M431.0 152.1L435.3 154.4M431.0 152.1L431.7 157.1M431.7 157.1L434.0 158.1M431.7 157.1L429.8 160.4M429.8 160.4L434.4 163.7M432.6 165.4L436.5 168.5M432.6 165.4L429.9 173.0M429.9 173.0L435.0 171.4M429.9 173.0L429.1 175.7M430.5 181.3L431.9 187.0M431.9 187.0L437.3 186.8M431.9 187.0L430.1 188.2M430.1 188.2L435.4 190.4M429.7 192.5L429.9 199.5M429.9 199.5L432.3 202.1M432.3 202.1L434.6 203.1M429.9 209.7L431.1 212.4M431.1 212.4L434.5 211.6M429.2 215.7L433.9 219.0M429.7 222.4L437.3 223.2M429.7 222.4L429.1 226.6M429.1 226.6L435.4 227.5M432.0 229.3L436.1 231.0M430.0 235.5L435.5 234.4M430.0 235.5L431.2 241.3M431.2 241.3L434.4 239.8M431.2 241.3L431.5 244.7M431.5 244.7L434.9 245.6M431.5 244.7L430.2 250.1M430.2 250.1L434.4 248.6M430.2 250.1L430.6 255.8M430.6 255.8L436.8 255.3M430.6 255.8L430.9 259.1M430.9 259.1L431.4 263.3M431.4 263.3L434.2 263.4M431.4 263.3L430.8 268.6M435.7 43.0L433.7 45.5M433.7 45.5L440.3 45.6M433.7 45.5L435.4 53.4M435.4 53.4L440.9 51.2M436.2 56.2L439.5 55.5M434.5 59.6L436.0 66.6M436.0 66.6L439.2 66.5M435.0 68.6L438.8 71.3M435.0 68.6L434.6 75.6M434.6 75.6L436.4 79.0M436.4 79.0L436.9 83.6M436.9 83.6L440.7 83.9M436.9 83.6L433.6 87.5M433.6 87.5L440.3 88.9M433.6 87.5L436.9 94.0M436.9 94.0L433.8 97.0M433.8 97.0L441.1 99.0M435.0 102.3L433.6 108.6M433.6 108.6L440.0 106.6M433.6 108.6L435.5 110.7M435.5 110.7L440.8 112.2M435.5 110.7L433.6 116.5M437.0 121.6L439.6 120.0M437.0 121.6L436.8 126.8M436.8 126.8L436.0 128.3M436.0 128.3L434.7 134.9M434.7 134.9L438.3 134.6M434.7 134.9L435.1 138.1M435.1 138.1L441.5 138.4M435.1 138.1L433.8 145.2M433.8 145.2L440.9 144.8M433.8 145.2L436.0 147.6M434.0 158.1L434.4 163.7M434.4 163.7L440.1 161.6M434.4 163.7L436.5 168.5M436.5 168.5L441.5 167.3M435.0 171.4L439.4 172.0M435.0 171.4L434.7 175.4M434.7 175.4L438.7 174.8M437.3 186.8L435.4 190.4M437.0 194.1L437.0 200.1M437.0 200.1L439.6 198.6M437.0 200.1L434.6 203.1M436.1 206.9L440.7 207.5M436.1 206.9L434.5 211.6M434.5 211.6L438.5 212.4M433.9 219.0L439.8 219.3M433.9 219.0L437.3 223.2M437.3 223.2L439.6 221.6M437.3 223.2L435.4 227.5M435.4 227.5L441.8 227.4M435.4 227.5L436.1 231.0M436.1 231.0L439.8 230.8M436.1 231.0L435.5 234.4M435.5 234.4L439.0 234.5M434.4 239.8L439.9 240.9M434.9 245.6L438.5 244.9M434.9 245.6L434.4 248.6M434.4 248.6L436.8 255.3M436.8 255.3L437.0 259.9M437.0 259.9L441.1 258.4M437.0 259.9L434.2 263.4M436.6 315.8L440.8 314.1M433.7 320.3L440.0 319.2M439.8 39.1L444.3 39.8M440.9 51.2L444.2 51.4M439.5 55.5L444.0 55.4M439.5 55.5L441.2 61.5M441.2 61.5L445.7 62.4M441.2 61.5L439.2 66.5M439.2 66.5L443.8 65.8M439.2 66.5L438.8 71.3M438.8 71.3L444.4 68.8M438.8 71.3L440.4 75.8M440.4 75.8L445.5 74.9M440.4 75.8L440.4 81.2M440.7 83.9L446.1 83.1M440.3 88.9L443.1 89.8M439.2 92.5L443.1 93.9M439.2 92.5L441.1 99.0M441.1 99.0L443.4 98.6M440.0 106.6L446.0 107.1M440.8 112.2L441.7 117.1M441.7 117.1L445.7 115.2M441.7 117.1L439.6 120.0M439.6 120.0L445.4 120.4M439.6 120.0L438.3 126.5M439.7 129.6L443.6 129.3M439.7 129.6L438.3 134.6M438.3 134.6L443.7 133.4M441.5 138.4L446.0 138.7M440.9 144.8L440.6 148.8M440.6 148.8L445.3 147.1M439.0 153.7L446.3 154.6M439.0 153.7L440.3 159.4M440.3 159.4L445.9 157.0M440.3 159.4L440.1 161.6M440.1 161.6L441.5 167.3M439.4 172.0L445.4 171.6M438.7 174.8L446.3 177.1M441.5 180.5L441.1 184.1M441.1 184.1L444.0 186.7M439.9 188.8L442.7 190.9M439.9 188.8L441.1 194.8M441.1 194.8L443.0 194.4M439.6 198.6L444.4 197.4M438.9 202.5L445.1 204.7M440.7 207.5L443.5 207.2M438.5 212.4L445.6 212.9M439.8 219.3L439.6 221.6M441.8 227.4L439.8 230.8M439.8 230.8L446.1 232.4M439.8 230.8L439.0 234.5M439.0 234.5L444.2 236.4M439.0 234.5L439.9 240.9M439.9 240.9L442.8 238.7M438.5 244.9L444.1 245.5M438.5 244.9L438.8 250.0M438.8 250.0L439.4 254.8M439.4 254.8L441.1 258.4M440.8 314.1L444.8 313.4M440.0 319.2L443.8 318.6M443.5 40.7L444.9 47.9M444.2 51.4L444.0 55.4M444.0 55.4L445.7 62.4M445.7 62.4L443.8 65.8M443.8 65.8L444.4 68.8M444.4 68.8L448.8 70.8M444.4 68.8L445.5 74.9M446.5 81.0L448.1 81.2M446.1 83.1L443.1 89.8M443.1 89.8L449.6 87.0M443.1 93.9L443.4 98.6M443.4 98.6L450.3 98.7M442.9 100.8L446.0 107.1M446.0 107.1L448.9 107.0M444.4 113.4L445.7 115.2M445.7 115.2L447.7 116.4M445.7 115.2L445.4 120.4M445.4 120.4L448.3 119.5M444.5 124.7L450.9 125.9M444.5 124.7L443.6 129.3M443.6 129.3L443.7 133.4M443.7 133.4L446.0 138.7M446.0 138.7L447.5 138.7M446.0 138.7L444.8 145.0M444.8 145.0L445.3 147.1M445.3 147.1L446.3 154.6M446.3 154.6L448.2 152.1M445.9 157.0L450.8 158.4M445.4 171.6L446.3 177.1M446.3 177.1L450.4 174.4M444.0 186.7L447.4 183.9M442.7 190.9L450.8 191.0M443.0 194.4L444.4 197.4M444.4 197.4L449.5 198.0M444.4 197.4L445.1 204.7M445.1 204.7L449.9 203.3M445.1 204.7L443.5 207.2M443.5 207.2L447.8 209.5M442.8 216.7L446.3 221.1M446.3 221.1L448.7 221.1M443.8 226.4L446.1 232.4M446.1 232.4L447.7 230.3M444.2 236.4L449.1 237.6M444.2 236.4L442.8 238.7M442.8 238.7L451.1 238.5M444.1 245.5L449.7 243.6M444.1 245.5L443.2 247.9M443.2 247.9L448.1 248.2M444.8 313.4L449.1 315.2M444.8 313.4L443.8 318.6M450.1 41.9L453.8 40.8M450.1 41.9L449.6 46.3M449.6 46.3L454.8 46.9M449.6 46.3L450.0 51.8M450.0 51.8L452.8 51.4M450.0 51.8L448.5 56.2M448.5 56.2L447.3 59.5M447.3 59.5L454.9 62.8M447.3 59.5L450.7 64.0M450.7 64.0L454.5 64.3M450.7 64.0L448.8 70.8M448.8 70.8L447.4 76.4M447.4 76.4L451.9 74.2M447.4 76.4L448.1 81.2M448.1 81.2L452.5 78.1M448.1 81.2L448.9 84.3M448.9 84.3L452.9 84.5M449.6 87.0L452.2 90.0M449.2 94.1L450.3 98.7M450.3 98.7L452.3 97.9M450.3 98.7L449.9 101.0M449.9 101.0L448.9 107.0M448.9 107.0L452.3 106.4M448.9 107.0L447.5 112.6M447.5 112.6L453.8 110.0M447.7 116.4L448.3 119.5M450.9 125.9L454.3 123.8M450.9 125.9L450.1 130.4M450.1 130.4L452.4 128.1M450.1 130.4L449.4 136.0M449.4 136.0L453.9 133.4M449.4 136.0L447.5 138.7M447.5 138.7L453.0 137.8M448.1 144.2L455.3 142.5M448.1 144.2L448.8 150.0M448.8 150.0L448.2 152.1M448.2 152.1L450.8 158.4M450.8 158.4L453.2 158.8M450.8 158.4L448.9 161.7M448.9 161.7L454.5 160.6M450.1 165.5L450.0 170.4M450.0 170.4L453.7 170.2M450.4 174.4L450.8 182.0M450.8 182.0L447.4 183.9M450.8 191.0L455.4 190.0M448.4 195.5L454.3 195.4M449.5 198.0L449.9 203.3M449.9 203.3L447.8 209.5M447.8 209.5L455.0 206.8M447.8 209.5L450.0 211.8M450.0 211.8L452.9 213.6M450.0 211.8L448.9 218.1M448.9 218.1L454.1 218.8M448.9 218.1L448.7 221.1M448.7 221.1L454.8 221.4M448.7 221.1L449.3 228.3M449.1 237.6L451.1 238.5M451.1 238.5L454.4 240.9M449.7 243.6L454.2 243.3M449.1 315.2L452.0 313.7M449.1 315.2L448.3 318.1M448.3 318.1L453.3 316.8M455.1 38.6L457.3 39.9M455.1 38.6L453.8 40.8M454.8 46.9L459.8 48.8M454.8 46.9L452.8 51.4M452.8 51.4L459.8 52.7M452.8 51.4L452.4 57.7M452.4 57.7L458.7 56.4M452.4 57.7L454.9 62.8M454.9 62.8L459.2 61.4M454.5 64.3L460.2 64.4M454.5 64.3L453.5 72.1M453.5 72.1L459.9 71.2M453.5 72.1L451.9 74.2M451.9 74.2L458.2 76.1M452.5 78.1L452.9 84.5M452.2 90.0L457.4 89.9M453.5 92.0L459.0 94.8M452.3 97.9L453.2 102.4M453.2 102.4L452.3 106.4M452.3 106.4L459.2 108.3M452.3 106.4L453.8 110.0M453.8 117.5L454.1 119.4M454.1 119.4L460.2 122.5M454.3 123.8L456.7 124.7M452.4 128.1L457.4 131.3M453.9 133.4L457.2 135.6M453.9 133.4L453.0 137.8M453.0 137.8L457.2 138.6M453.0 137.8L455.3 142.5M455.3 142.5L460.2 142.4M455.3 142.5L454.5 149.6M453.6 153.3L459.4 151.4M453.6 153.3L453.2 158.8M454.5 160.6L454.6 165.4M454.6 165.4L459.0 165.0M453.7 170.2L460.1 171.9M453.7 170.2L453.7 176.6M453.7 176.6L460.0 176.9M453.7 176.6L454.7 179.9M454.7 179.9L456.7 181.5M454.7 179.9L452.1 185.0M452.1 185.0L455.4 190.0M455.4 190.0L459.9 190.4M454.3 195.4L457.8 192.8M454.3 195.4L454.3 200.7M455.5 204.5L457.4 201.9M455.5 204.5L455.0 206.8M452.9 213.6L457.5 214.6M452.9 213.6L454.1 218.8M454.1 218.8L457.6 218.5M454.1 218.8L454.8 221.4M454.8 221.4L459.3 222.5M454.8 221.4L452.6 227.2M452.6 227.2L458.8 225.2M452.9 235.4L458.5 234.6M454.4 240.9L456.8 239.5M454.4 240.9L454.2 243.3M452.0 313.7L459.5 313.8M453.3 316.8L459.5 320.2M459.8 42.3L462.5 43.7M459.8 42.3L459.8 48.8M459.8 48.8L459.8 52.7M459.8 52.7L458.7 56.4M458.7 56.4L462.1 57.2M458.7 56.4L459.2 61.4M459.2 61.4L462.2 60.7M459.2 61.4L460.2 64.4M460.2 64.4L459.9 71.2M459.9 71.2L461.6 69.0M459.9 71.2L458.2 76.1M457.6 79.0L463.7 80.2M457.6 79.0L458.7 85.8M458.7 85.8L464.2 83.0M457.4 89.9L459.0 94.8M459.0 94.8L462.4 93.6M457.6 98.4L462.1 98.9M457.6 98.4L459.9 103.9M460.2 122.5L463.6 122.0M456.7 124.7L463.7 126.8M456.7 124.7L457.4 131.3M457.4 131.3L457.2 135.6M457.2 135.6L464.3 135.0M457.2 135.6L457.2 138.6M457.2 138.6L463.1 137.9M460.2 142.4L462.0 142.2M460.2 142.4L458.7 147.5M458.7 147.5L461.5 148.0M458.7 147.5L459.4 151.4M459.4 151.4L462.2 153.2M459.4 151.4L459.1 156.7M459.1 156.7L464.2 156.7M459.1 156.7L460.1 161.5M459.0 165.0L460.1 171.9M460.1 171.9L461.9 169.7M460.1 171.9L460.0 176.9M460.0 176.9L461.9 174.9M460.0 176.9L456.7 181.5M456.7 181.5L461.1 178.8M457.9 184.1L464.2 186.6M457.9 184.1L459.9 190.4M459.9 190.4L464.4 188.2M459.0 197.3L462.5 198.4M459.0 197.3L457.4 201.9M457.2 209.1L457.5 214.6M457.5 214.6L461.5 213.6M457.5 214.6L457.6 218.5M459.3 222.5L461.9 222.1M459.3 222.5L458.8 225.2M458.8 225.2L462.1 226.6M459.6 232.8L458.5 234.6M458.5 234.6L456.8 239.5M459.5 313.8L459.5 320.2M462.5 43.7L466.5 42.5M462.4 48.9L462.4 52.3M462.4 52.3L468.6 51.2M462.4 52.3L462.1 57.2M462.2 60.7L466.1 62.1M463.8 66.8L468.6 66.4M461.6 69.0L468.0 69.0M461.9 75.8L467.6 76.1M461.9 75.8L463.7 80.2M463.7 80.2L468.7 79.7M463.7 80.2L464.2 83.0M464.2 83.0L468.1 82.7M464.2 83.0L463.0 86.7M463.0 86.7L465.9 89.9M462.4 93.6L465.8 92.3M462.4 93.6L462.1 98.9M462.1 98.9L467.2 98.6M462.1 98.9L461.9 102.2M461.9 102.2L463.7 105.9M463.6 111.2L466.6 110.2M461.3 114.7L467.0 114.7M463.6 122.0L469.4 121.1M463.6 122.0L463.7 126.8M463.7 126.8L467.6 123.7M463.6 131.1L469.2 129.0M463.6 131.1L464.3 135.0M464.3 135.0L463.1 137.9M463.1 137.9L466.7 137.8M463.1 137.9L462.0 142.2M462.0 142.2L467.7 143.0M462.0 142.2L461.5 148.0M461.5 148.0L462.2 153.2M462.2 153.2L466.6 151.6M462.2 153.2L464.2 156.7M464.2 156.7L467.7 157.2M464.2 156.7L464.5 163.5M464.5 163.5L467.4 161.7M464.5 163.5L461.8 167.1M461.8 167.1L461.9 169.7M461.9 174.9L468.3 176.5M461.1 178.8L467.7 179.4M461.1 178.8L464.2 186.6M464.2 186.6L469.2 185.3M464.2 186.6L464.4 188.2M464.4 188.2L461.2 195.8M461.2 195.8L467.1 196.2M461.2 195.8L462.5 198.4M462.5 198.4L467.2 200.2M463.8 203.7L466.2 204.0M462.4 206.9L461.5 213.6M461.5 213.6L464.5 215.6M464.5 215.6L461.9 222.1M461.9 222.1L469.0 220.7M462.1 226.6L469.0 226.4M462.1 226.6L463.0 230.3M463.0 230.3L461.5 235.5M468.1 55.7L473.0 57.9M468.1 55.7L466.1 62.1M466.1 62.1L470.6 62.3M466.1 62.1L468.6 66.4M468.6 66.4L468.0 69.0M468.0 69.0L471.6 71.4M467.6 76.1L472.0 73.2M468.7 79.7L468.1 82.7M468.1 82.7L465.9 89.9M465.9 89.9L471.7 88.4M465.9 89.9L465.8 92.3M465.8 92.3L470.3 91.8M467.2 98.6L473.7 98.0M467.2 98.6L468.3 103.8M468.3 103.8L474.0 102.6M468.3 103.8L469.2 106.1M469.2 106.1L473.9 107.7M466.6 110.2L467.0 114.7M467.0 114.7L470.9 117.3M467.0 114.7L469.4 121.1M469.4 121.1L467.6 123.7M469.2 129.0L473.8 129.0M468.6 133.5L474.1 134.7M466.7 137.8L467.7 143.0M467.7 143.0L473.0 145.4M467.7 143.0L467.9 149.2M466.6 151.6L470.8 151.9M467.7 157.2L467.4 161.7M466.3 165.4L471.2 165.9M466.3 165.4L468.5 171.9M468.3 176.5L467.7 179.4M467.7 179.4L470.3 181.3M469.2 185.3L467.4 188.9M467.4 188.9L473.7 190.2M467.1 196.2L471.5 194.0M467.1 196.2L467.2 200.2M467.2 200.2L471.9 198.3M466.2 204.0L470.5 202.3M466.2 204.0L466.7 207.2M466.7 207.2L466.9 212.4M466.9 212.4L471.6 211.3M466.9 212.4L468.1 217.0M468.1 217.0L469.0 220.7M469.0 220.7L472.2 222.7M469.0 220.7L469.0 226.4M472.1 45.8L476.3 46.2M472.1 45.8L472.4 52.1M472.4 52.1L476.8 53.4M472.4 52.1L473.0 57.9M473.0 57.9L477.2 57.8M473.0 57.9L470.6 62.3M471.5 65.3L471.6 71.4M471.6 71.4L477.9 71.4M471.6 71.4L472.0 73.2M472.1 78.1L477.5 79.2M472.1 78.1L470.4 82.3M470.4 82.3L476.9 85.2M470.4 82.3L471.7 88.4M471.7 88.4L470.3 91.8M470.3 91.8L473.7 98.0M473.7 98.0L474.0 102.6M474.0 102.6L475.8 102.3M474.0 102.6L473.9 107.7M473.9 107.7L475.9 108.2M473.9 107.7L471.8 109.9M471.8 109.9L477.6 109.7M471.8 109.9L470.9 117.3M470.9 117.3L475.3 114.8M470.9 117.3L472.8 120.0M472.8 120.0L470.9 125.9M470.9 125.9L476.2 123.8M470.9 125.9L473.8 129.0M473.8 129.0L474.1 134.7M474.1 134.7L476.5 133.7M471.1 138.0L476.2 138.2M471.1 138.0L473.0 145.4M473.0 145.4L471.1 147.4M471.1 147.4L477.6 148.6M471.1 147.4L470.8 151.9M470.8 151.9L475.8 152.2M470.8 151.9L471.2 157.3M471.2 157.3L477.4 159.0M471.2 157.3L471.2 162.8M471.2 162.8L478.4 160.9M471.2 162.8L471.2 165.9M471.2 165.9L471.9 170.1M471.9 170.1L475.6 171.0M471.9 170.1L470.5 174.4M470.5 174.4L477.6 177.6M470.5 174.4L470.3 181.3M470.3 181.3L477.1 179.3M470.3 181.3L470.5 185.1M470.5 185.1L476.3 183.8M470.5 185.1L473.7 190.2M471.5 194.0L476.8 193.2M471.9 198.3L470.5 202.3M470.8 207.1L476.1 207.4M471.6 211.3L477.8 211.0M471.6 211.3L472.6 216.3M471.3 315.9L476.8 313.5M471.3 315.9L473.9 318.0M473.9 318.0L476.2 316.9M476.7 39.2L481.2 39.7M478.0 44.1L483.2 44.2M476.8 53.4L482.7 50.5M476.8 53.4L477.2 57.8M478.4 65.9L482.2 67.5M476.6 75.5L482.5 73.6M477.5 79.2L479.8 81.2M477.5 79.2L476.9 85.2M478.3 90.4L480.2 89.2M478.3 90.4L476.3 93.9M476.3 93.9L480.1 93.0M477.0 99.1L480.1 96.2M477.0 99.1L475.8 102.3M475.8 102.3L475.9 108.2M475.9 108.2L477.6 109.7M477.6 109.7L480.8 110.0M475.3 114.8L481.6 114.9M477.1 121.8L480.8 122.6M477.1 121.8L476.2 123.8M476.2 123.8L482.0 126.0M476.2 123.8L477.1 130.4M476.5 133.7L482.1 136.4M476.5 133.7L476.2 138.2M476.2 138.2L479.8 140.5M476.2 138.2L478.0 143.4M478.0 143.4L480.8 142.7M478.0 143.4L477.6 148.6M477.6 148.6L482.0 149.7M475.8 152.2L477.4 159.0M477.4 159.0L481.4 156.5M477.4 159.0L478.4 160.9M478.4 160.9L481.4 164.1M478.4 160.9L475.9 165.3M475.9 165.3L479.6 166.5M475.6 171.0L477.6 177.6M477.6 177.6L477.1 179.3M477.1 179.3L481.3 180.8M476.3 183.8L482.2 186.6M476.3 183.8L476.0 190.1M476.8 193.2L480.2 196.0M475.9 200.5L481.8 200.5M477.3 204.0L480.1 204.7M476.1 207.4L479.9 206.8M476.1 207.4L477.8 211.0M477.8 211.0L480.0 212.3M477.8 211.0L477.4 219.1M481.2 39.7L483.2 44.2M483.2 44.2L486.8 40.8M483.2 44.2L479.9 47.0M479.9 47.0L482.7 50.5M482.7 50.5L487.5 52.5M479.7 71.0L487.6 68.5M482.5 73.6L487.6 74.3M479.8 81.2L482.5 82.4M482.5 82.4L484.7 84.0M482.5 82.4L480.2 89.2M480.1 93.0L480.1 96.2M480.1 96.2L485.7 96.4M480.1 96.2L481.3 102.6M481.3 102.6L487.6 102.4M481.3 102.6L482.7 105.1M482.7 105.1L487.3 106.1M482.7 105.1L480.8 110.0M480.8 110.0L485.9 110.6M480.8 110.0L481.6 114.9M480.8 122.6L486.3 121.1M480.8 122.6L482.0 126.0M482.0 126.0L485.3 127.1M482.0 126.0L481.8 128.9M481.8 128.9L482.1 136.4M482.1 136.4L486.6 136.4M482.1 136.4L479.8 140.5M480.8 142.7L487.7 143.6M482.0 149.7L486.3 149.0M482.0 149.7L480.1 151.8M480.1 151.8L486.4 154.4M480.1 151.8L481.4 156.5M481.4 156.5L487.5 156.9M481.4 164.1L487.5 161.5M479.6 166.5L480.3 170.1M480.3 170.1L481.7 177.7M481.7 177.7L487.9 176.6M481.3 180.8L485.6 182.4M482.2 186.6L484.5 186.1M480.2 196.0L485.8 192.9M481.8 200.5L487.9 197.5M480.1 204.7L479.9 206.8M479.9 206.8L484.6 209.9M479.9 206.8L480.0 212.3M480.7 313.4L479.9 319.0M484.9 38.1L490.4 39.3M484.9 38.1L486.8 40.8M486.8 40.8L490.9 41.7M486.0 47.7L489.5 47.4M487.5 52.5L490.6 53.3M487.5 52.5L487.3 57.0M487.3 57.0L489.4 56.3M487.0 65.5L489.4 65.2M487.0 65.5L487.6 68.5M487.6 68.5L490.8 69.0M487.6 74.3L489.9 74.9M487.6 74.3L486.2 80.5M486.2 80.5L484.7 84.0M484.7 84.0L490.0 82.2M484.7 84.0L484.2 86.8M487.6 102.4L491.5 102.9M487.6 102.4L487.3 106.1M487.3 106.1L488.9 105.3M487.3 106.1L485.9 110.6M486.3 117.0L490.8 115.2M486.6 136.4L490.5 132.7M486.6 136.4L487.3 138.2M487.3 138.2L491.6 140.4M487.7 143.6L486.3 149.0M486.3 149.0L491.4 148.3M486.3 149.0L486.4 154.4M486.4 154.4L489.7 153.8M487.5 161.5L489.1 162.6M487.5 161.5L486.7 165.5M486.7 165.5L491.4 167.8M486.5 170.6L489.3 170.3M486.5 170.6L487.9 176.6M487.9 176.6L491.1 174.6M487.9 176.6L485.6 182.4M486.6 188.0L490.8 190.8M485.8 192.9L490.0 195.0M485.8 192.9L487.9 197.5M487.9 197.5L486.5 203.8M490.4 39.3L494.0 38.1M490.4 39.3L490.9 41.7M490.9 41.7L493.6 41.8M490.9 41.7L489.5 47.4M489.5 47.4L495.8 45.9M489.5 47.4L490.6 53.3M490.6 53.3L489.4 56.3M489.4 56.3L496.7 55.3M489.4 56.3L490.4 60.5M490.4 60.5L496.8 62.6M489.4 65.2L497.0 64.8M489.9 74.9L492.3 79.3M490.0 82.2L493.7 83.4M490.7 88.0L489.1 93.1M489.1 93.1L494.5 94.4M491.0 97.2L491.5 102.9M491.5 102.9L494.8 100.8M491.5 102.9L488.9 105.3M488.9 105.3L496.8 107.6M488.9 105.3L490.7 112.0M490.7 112.0L497.1 112.1M490.8 115.2L495.7 114.8M490.0 121.6L490.2 125.5M490.2 125.5L489.6 130.5M489.6 130.5L495.0 129.5M489.6 130.5L490.5 132.7M490.5 132.7L491.6 140.4M491.6 140.4L494.0 137.6M491.6 140.4L492.5 145.5M492.5 145.5L491.4 148.3M491.4 148.3L489.7 153.8M489.7 153.8L496.5 151.9M490.3 156.9L496.5 157.1M490.3 156.9L489.1 162.6M489.1 162.6L491.4 167.8M491.4 167.8L494.4 166.9M489.3 170.3L494.1 170.5M489.3 170.3L491.1 174.6M491.1 174.6L492.1 182.2M492.1 182.2L497.0 181.2M492.1 182.2L491.1 184.3M491.1 184.3L494.6 185.1M491.1 184.3L490.8 190.8M490.8 190.8L495.5 190.2M490.8 318.7L493.3 318.1M494.0 38.1L499.9 38.5M493.6 41.8L501.4 43.2M495.8 45.9L495.3 50.4M495.3 50.4L500.9 50.4M495.3 50.4L496.7 55.3M496.7 55.3L501.3 56.4M496.7 55.3L496.8 62.6M496.8 62.6L499.6 61.7M496.8 62.6L497.0 64.8M497.0 64.8L500.0 67.5M497.0 64.8L495.9 68.6M495.9 68.6L498.4 68.5M493.4 78.0L493.7 83.4M493.7 83.4L499.9 83.2M493.7 83.4L496.9 89.7M496.9 89.7L499.3 87.6M494.5 94.4L498.9 91.8M493.3 98.0L501.6 98.7M493.3 98.0L494.8 100.8M494.8 100.8L496.8 107.6M495.7 114.8L500.0 118.0M495.7 114.8L495.1 122.3M495.1 122.3L495.4 125.9M495.4 125.9L495.0 129.5M493.3 133.5L498.8 136.1M493.3 133.5L494.0 137.6M493.5 144.8L500.6 145.4M493.5 144.8L497.1 149.2M497.1 149.2L500.1 147.9M497.1 149.2L496.5 151.9M496.5 161.2L499.1 163.4M496.5 161.2L494.4 166.9M494.4 166.9L494.1 170.5M494.1 170.5L499.8 170.1M494.1 170.5L496.1 177.1M496.1 177.1L500.5 174.9M496.1 177.1L497.0 181.2M497.0 181.2L500.7 179.3M497.0 181.2L494.6 185.1M495.5 190.2L498.3 188.5M495.8 313.6L493.3 318.1M499.9 38.5L501.4 43.2M501.4 43.2L505.0 42.0M500.4 46.6L504.3 47.4M500.9 50.4L504.1 51.6M499.6 61.7L505.3 62.4M499.6 61.7L500.0 67.5M500.0 67.5L503.7 64.0M500.0 67.5L498.4 68.5M498.4 68.5L500.2 73.8M500.2 73.8L498.8 81.3M499.9 83.2L503.6 82.3M499.3 87.6L504.3 88.0M498.9 91.8L505.8 94.7M501.6 98.7L504.5 98.8M499.3 100.9L501.6 108.5M501.6 108.5L504.2 108.7M498.3 113.0L505.5 111.9M498.3 113.0L500.0 118.0M500.0 118.0L506.3 114.9M500.0 118.0L499.6 120.6M499.6 120.6L497.9 125.7M497.9 125.7L503.7 124.0M497.9 125.7L498.8 131.4M498.8 131.4L504.7 131.4M498.8 136.1L503.2 136.1M498.8 136.1L499.2 140.4M498.9 152.0L503.5 154.7M498.3 156.8L499.1 163.4M499.1 163.4L497.9 166.8M500.5 174.9L500.7 179.3M499.9 313.2L504.8 315.6M499.9 313.2L501.4 320.1M501.4 320.1L503.4 320.5M505.3 38.0L509.3 39.2M505.0 42.0L508.1 44.5M504.3 47.4L509.8 47.1M504.3 47.4L504.1 51.6M504.1 51.6L507.9 53.2M505.7 58.3L509.2 58.3M505.7 58.3L505.3 62.4M505.3 62.4L503.7 64.0M503.7 64.0L503.3 70.2M503.3 70.2L510.3 71.0M505.4 75.7L507.5 73.2M504.3 88.0L509.7 88.1M504.3 88.0L505.8 94.7M505.8 94.7L510.7 91.9M505.8 94.7L504.5 98.8M504.5 98.8L508.0 97.6M504.5 98.8L505.3 102.5M504.2 108.7L505.5 111.9M505.5 111.9L506.3 114.9M506.3 114.9L508.3 116.4M505.4 121.0L509.1 119.5M503.7 124.0L504.7 131.4M504.7 131.4L510.1 128.4M503.2 136.1L506.3 138.0M506.3 138.0L510.2 139.6M506.3 138.0L504.6 143.7M504.6 143.7L510.6 143.5M503.8 147.0L508.0 148.3M503.8 147.0L503.5 154.7M503.5 154.7L508.2 152.5M503.5 154.7L505.7 159.3M504.4 162.2L502.7 166.5M503.4 320.5L509.2 319.2M509.3 39.2L508.1 44.5M508.1 44.5L513.1 43.6M509.8 47.1L513.9 46.3M509.8 47.1L507.9 53.2M507.9 53.2L509.2 58.3M510.5 61.9L514.8 62.2M510.3 71.0L512.8 71.6M510.3 71.0L507.5 73.2M507.5 78.3L510.0 85.0M510.0 85.0L509.7 88.1M509.7 88.1L510.7 91.9M510.7 91.9L508.0 97.6M508.0 97.6L515.4 96.5M508.0 97.6L508.1 103.3M508.1 103.3L514.7 102.7M508.1 103.3L510.3 107.9M508.3 111.9L512.1 112.6M508.3 111.9L508.3 116.4M508.3 116.4L514.4 114.5M509.1 119.5L510.3 126.6M510.3 126.6L510.1 128.4M510.1 128.4L513.8 130.3M510.1 128.4L508.0 135.5M508.0 135.5L511.9 135.9M508.0 135.5L510.2 139.6M510.2 139.6L513.7 137.7M510.2 139.6L510.6 143.5M510.6 143.5L508.0 148.3M507.7 313.1L509.2 319.2M509.2 319.2L512.6 318.3M514.1 38.9L513.1 43.6M513.1 43.6L518.5 41.7M513.9 46.3L519.1 45.9M512.2 52.3L516.7 49.9M514.9 58.1L518.5 56.7M514.9 58.1L514.8 62.2M514.8 62.2L513.9 64.6M513.9 64.6L517.0 64.5M513.9 64.6L512.8 71.6M512.8 71.6L512.7 74.7M512.7 74.7L513.8 77.6M513.8 77.6L518.1 80.3M514.7 89.7L516.5 87.5M515.4 96.5L514.7 102.7M514.7 102.7L517.4 101.7M514.7 102.7L515.0 107.9M515.0 107.9L516.6 106.5M515.0 107.9L512.1 112.6M514.4 114.5L519.7 116.6M515.3 120.0L518.7 120.5M513.5 125.5L519.5 125.2M513.5 125.5L513.8 130.3M513.8 130.3L511.9 135.9M511.9 135.9L519.3 132.9M511.9 135.9L513.7 137.7M513.7 137.7L513.6 142.6M513.6 142.6L513.3 149.2M518.6 39.5L523.1 39.2M518.6 39.5L518.5 41.7M518.5 41.7L523.4 40.7M518.5 41.7L519.1 45.9M519.1 45.9L522.8 48.4M519.1 45.9L516.7 49.9M516.7 49.9L521.7 51.4M516.7 49.9L518.5 56.7M517.0 64.5L518.5 69.8M518.2 76.4L522.4 75.2M518.2 76.4L518.1 80.3M518.1 80.3L522.0 77.7M516.5 87.5L522.0 89.9M517.0 92.8L516.9 99.5M516.9 99.5L521.5 97.2M519.7 116.6L518.7 120.5M519.5 125.2L516.8 129.0M516.8 129.0L519.3 132.9M519.3 132.9L517.0 139.7M518.9 314.6L519.9 317.7M519.9 317.7L521.2 319.0M523.1 39.2L529.3 38.4M523.1 39.2L523.4 40.7M523.4 40.7L529.2 41.6M523.4 40.7L522.8 48.4M522.8 48.4L526.3 46.5M522.8 48.4L521.7 51.4M522.4 75.2L522.0 77.7M523.8 314.9L527.3 315.5M523.8 314.9L521.2 319.0M521.2 319.0L525.6 318.4M529.3 38.4L529.2 41.6M526.3 46.5L526.4 50.5M527.3 315.5L530.9 313.8M527.3 315.5L525.6 318.4M530.9 313.8L537.2 313.7M531.2 320.0L535.5 320.3M535.5 320.3L540.9 318.6M543.1 48.2L547.1 46.4M543.1 101.3L545.6 100.6M543.1 122.0L545.4 119.0M540.8 314.3L544.2 313.9M540.8 314.3L540.9 318.6M544.2 39.8L550.3 38.5M544.2 39.8L545.5 42.0M545.5 42.0L551.2 43.4M547.1 46.4L550.1 46.0M547.1 46.4L546.9 51.5M546.9 51.5L551.8 50.1M546.9 51.5L544.3 56.7M544.3 56.7L549.3 55.2M544.3 56.7L545.0 59.9M547.7 67.3L548.9 65.7M545.7 71.4L546.4 74.1M546.4 74.1L548.8 75.7M546.4 74.1L544.4 79.7M544.4 79.7L549.5 79.0M544.4 79.7L544.6 85.0M544.6 85.0L546.2 87.5M546.2 87.5L546.9 95.0M546.9 95.0L550.5 91.7M546.9 95.0L545.7 99.6M545.7 99.6L545.6 100.6M545.6 100.6L548.9 103.6M545.7 106.4L548.5 106.6M547.4 111.7L548.7 112.6M547.6 114.9L545.4 119.0M545.4 119.0L549.9 122.6M545.4 119.0L544.1 126.2M544.1 126.2L544.0 128.9M544.0 128.9L552.3 131.6M544.0 128.9L545.6 136.2M544.8 137.3L551.5 138.6M546.6 144.5L548.5 143.3M544.4 150.0L551.1 150.2M544.4 150.0L547.2 154.7M547.2 154.7L550.2 152.7M547.2 154.7L547.0 157.8M547.0 157.8L546.6 160.8M546.3 166.2L552.1 165.0M545.2 170.7L548.5 170.7M544.2 177.2L546.8 178.7M546.8 178.7L545.8 183.4M545.8 183.4L552.1 184.2M546.0 188.5L547.6 193.7M547.6 193.7L550.2 193.3M547.6 193.7L545.9 198.1M545.9 198.1L552.0 200.0M545.9 198.1L547.3 201.7M545.1 207.2L546.7 212.3M546.7 212.3L551.0 213.8M546.7 212.3L547.2 216.7M547.2 216.7L552.1 215.8M547.2 216.7L544.4 221.8M544.2 225.3L552.1 226.4M544.7 234.6L550.3 235.3M545.9 240.2L551.4 240.9M545.9 240.2L545.7 245.6M545.7 245.6L544.4 247.7M544.4 247.7L552.1 249.5M544.4 247.7L544.1 255.3M544.1 255.3L551.8 254.7M546.6 257.5L550.6 260.2M546.6 257.5L545.2 262.7M545.2 262.7L548.8 262.6M545.2 262.7L547.4 267.7M547.4 267.7L550.4 269.2M547.4 267.7L546.6 271.0M546.6 271.0L549.2 273.7M546.3 281.6L547.2 287.6M547.2 287.6L550.5 287.7M547.2 287.6L546.4 292.9M546.4 292.9L547.5 297.1M547.5 297.1L550.5 295.2M547.5 297.1L544.2 299.8M544.2 299.8L544.5 305.2M544.5 305.2L549.2 303.8M545.8 307.9L549.5 310.6M545.8 307.9L544.2 313.9M544.2 313.9L551.1 313.0M546.3 318.2L550.1 320.1M551.2 43.4L550.1 46.0M550.1 46.0L551.8 50.1M550.8 61.5L548.9 65.7M550.7 70.9L548.8 75.7M549.5 79.0L549.0 85.3M549.0 85.3L550.8 89.8M550.8 89.8L550.5 91.7M550.0 96.2L548.9 103.6M548.9 103.6L548.5 106.6M548.5 106.6L548.7 112.6M552.3 114.4L549.9 122.6M549.5 124.7L552.3 131.6M552.3 131.6L550.0 135.2M550.0 135.2L551.5 138.6M548.5 143.3L551.1 150.2M551.1 150.2L550.2 152.7M550.2 152.7L549.9 158.0M549.9 158.0L548.6 163.8M548.6 163.8L552.1 165.0M552.1 165.0L548.5 170.7M548.5 170.7L549.1 177.0M549.1 177.0L551.8 180.8M551.8 180.8L552.1 184.2M549.2 189.4L550.2 193.3M550.2 193.3L552.0 200.0M552.0 200.0L549.6 202.6M549.6 202.6L549.6 207.8M551.0 213.8L552.1 215.8M552.1 215.8L549.2 221.5M552.1 226.4L551.2 232.5M551.2 232.5L550.3 235.3M552.3 244.1L552.1 249.5M552.1 249.5L551.8 254.7M550.6 260.2L548.8 262.6M549.2 273.7L548.8 276.6M548.8 276.6L550.3 282.6M551.1 290.6L550.5 295.2M551.8 299.5L549.2 303.8M549.2 303.8L549.5 310.6M549.5 310.6L551.1 313.0M551.1 313.0L550.1 320.1" stroke="#eeeeee" stroke-width="0.5" fill="none"/>
<path d="M50.0 56.5Q59.9 57.5 63.2 60.6M50.0 56.5Q52.7 66.4 61.7 68.7M53.0 92.8Q55.7 92.5 58.3 89.5M53.0 92.8Q51.0 95.5 51.7 103.8M51.7 103.8Q55.9 108.5 62.8 107.9M51.7 103.8Q49.1 111.3 50.1 112.2M50.1 112.2Q51.8 118.0 56.7 117.4M50.1 112.2Q52.1 117.3 59.3 123.2M50.1 128.9Q51.7 123.3 59.3 123.2M50.1 128.9Q54.4 133.0 58.4 139.2M49.2 138.9Q50.1 139.5 50.4 144.5M50.4 144.5Q54.1 148.5 60.9 155.4M51.1 159.7Q59.2 154.2 60.9 155.4M51.1 159.7Q55.7 167.0 61.7 168.6M51.9 180.8Q58.1 180.9 63.0 184.8M50.8 195.0Q54.7 197.6 50.7 206.4M50.7 206.4Q52.9 204.4 60.8 210.3M50.0 267.4Q56.1 270.6 63.2 268.0M62.9 52.7Q67.1 49.2 74.8 49.2M62.9 52.7Q65.4 53.3 63.2 60.6M63.2 60.6Q62.9 67.4 70.3 71.6M61.7 68.7Q62.7 70.4 70.3 71.6M58.3 89.5Q57.7 99.5 62.8 107.9M62.8 107.9Q62.6 112.3 56.7 117.4M63.0 144.4Q60.1 150.8 60.9 155.4M60.9 155.4Q66.6 153.5 69.0 158.7M60.9 155.4Q59.3 161.0 61.7 168.6M63.0 184.8Q66.5 180.4 69.9 179.5M60.8 210.3Q60.5 215.3 57.6 224.3M57.6 224.3Q66.8 227.8 69.5 233.8M56.3 249.9Q55.2 252.4 58.5 261.7M60.5 303.0Q64.2 298.9 73.8 299.4M70.3 71.6Q80.5 76.7 84.5 83.1M72.1 89.5Q71.6 100.3 72.0 103.7M72.1 89.5Q79.3 98.0 79.0 102.3M72.0 103.7Q76.1 107.1 84.4 113.2M72.4 113.8Q78.4 111.6 84.4 113.2M72.4 113.8Q75.4 117.3 80.8 125.3M72.7 127.9Q67.8 132.7 67.2 133.5M72.7 127.9Q77.8 131.7 81.4 136.3M69.0 158.7Q73.3 161.5 78.0 162.5M71.7 168.6Q79.9 167.4 85.0 173.9M69.9 179.5Q72.7 185.8 70.0 192.8M69.9 179.5Q76.4 188.3 85.4 189.8M73.2 210.2Q78.8 215.8 80.3 223.7M71.6 226.9Q66.7 229.8 69.5 233.8M69.5 233.8Q74.2 232.2 79.8 232.5M73.4 244.9Q67.7 251.8 68.5 257.5M73.4 244.9Q77.0 251.7 84.5 254.4M72.6 265.8Q79.1 266.5 85.2 270.5M69.6 278.7Q74.2 284.2 73.7 290.5M69.6 278.7Q74.1 283.4 85.2 291.6M73.7 290.5Q70.2 294.4 73.8 299.4M82.2 46.5Q91.3 50.7 93.9 47.7M82.2 46.5Q87.8 51.9 91.0 62.9M84.5 62.7Q86.6 65.6 92.8 73.3M79.5 69.2Q84.6 75.5 91.8 79.6M84.5 83.1Q84.3 81.3 91.8 79.6M84.5 83.1Q83.9 88.7 84.5 91.8M79.0 102.3Q87.3 103.5 90.4 106.3M84.4 113.2Q91.2 113.5 96.4 117.4M84.4 113.2Q82.2 120.3 80.8 125.3M84.4 113.2Q86.4 117.7 95.6 122.1M80.8 125.3Q87.4 130.1 94.0 139.9M81.4 136.3Q85.7 140.7 94.0 139.9M85.4 145.2Q86.2 143.2 89.4 146.2M85.4 145.2Q86.5 152.4 91.1 159.2M78.0 162.5Q84.4 165.0 92.4 169.8M85.4 189.8Q86.0 187.1 89.4 189.0M84.0 205.7Q90.4 212.1 96.8 216.8M83.3 214.2Q83.2 220.3 89.7 225.0M79.8 232.5Q84.3 244.2 91.8 248.2M84.5 254.4Q88.4 259.5 85.2 270.5M85.2 291.6Q89.0 294.3 89.6 299.4M78.1 304.0Q80.8 304.7 89.6 299.4M93.9 47.7Q101.9 50.1 103.5 48.0M93.9 47.7Q93.6 59.1 91.0 62.9M92.8 73.3Q92.8 77.8 91.8 79.6M91.8 79.6Q99.3 89.9 104.3 94.6M90.4 106.3Q98.3 103.3 100.6 103.4M90.4 106.3Q94.6 112.6 103.4 118.0M96.4 117.4Q102.7 120.0 107.5 125.0M95.6 122.1Q104.4 126.3 107.5 125.0M95.6 122.1Q102.9 131.0 107.2 139.3M94.0 139.9Q93.3 140.6 89.4 146.2M94.0 139.9Q100.5 140.8 102.1 147.7M91.1 159.2Q101.5 167.2 105.3 173.1M92.4 169.8Q97.1 169.0 105.3 173.1M95.2 177.0Q101.6 179.4 106.3 182.3M89.4 189.0Q91.3 191.1 90.0 199.5M90.0 199.5Q98.4 201.1 100.8 203.7M96.8 216.8Q97.9 215.9 100.0 211.1M96.8 216.8Q94.1 220.5 89.7 225.0M91.5 234.5Q94.5 233.4 100.7 232.8M91.8 248.2Q95.7 244.4 107.0 244.4M93.7 256.9Q99.9 261.3 101.0 271.8M90.5 267.6Q86.9 276.8 90.0 280.4M106.4 39.0Q103.9 43.7 103.5 48.0M104.0 61.6Q109.2 66.8 112.9 68.4M103.7 80.0Q106.9 83.6 113.0 82.9M103.7 80.0Q100.0 90.0 104.3 94.6M100.6 103.4Q105.7 104.3 113.9 103.2M103.4 118.0Q103.9 123.5 107.5 125.0M103.4 118.0Q106.5 122.8 111.7 126.0M107.5 125.0Q111.7 133.3 118.8 136.3M107.2 139.3Q115.2 135.4 118.8 136.3M107.2 139.3Q106.7 147.1 102.1 147.7M101.0 161.5Q101.0 164.8 105.3 173.1M105.3 173.1Q114.3 175.3 116.4 170.1M105.3 173.1Q102.9 179.9 106.3 182.3M106.3 182.3Q114.0 180.3 114.9 182.1M106.3 182.3Q108.4 185.8 105.9 192.5M105.9 192.5Q111.1 198.8 111.8 205.0M106.2 221.4Q110.1 221.1 114.5 226.8M100.7 232.8Q105.1 240.2 107.0 244.4M107.0 244.4Q108.1 242.4 112.6 247.7M100.2 260.7Q105.1 264.8 116.5 272.6M101.0 271.8Q112.7 274.1 116.5 272.6M101.0 271.8Q106.3 279.2 105.4 282.7M105.4 282.7Q106.4 281.3 113.4 281.6M105.4 282.7Q113.4 291.1 114.3 293.8M111.5 47.6Q121.3 58.3 123.1 63.9M115.5 62.6Q115.9 67.6 112.9 68.4M112.9 68.4Q116.3 75.1 113.0 82.9M113.0 82.9Q111.3 86.0 117.0 92.1M117.0 92.1Q111.6 95.8 113.9 103.2M113.9 103.2Q120.6 102.7 125.9 105.8M113.8 114.3Q110.7 116.9 111.7 126.0M118.8 136.3Q116.7 140.9 117.0 145.3M117.0 145.3Q121.2 151.1 123.9 149.7M117.0 145.3Q118.8 152.0 127.4 162.7M116.5 161.0Q113.1 169.0 116.4 170.1M116.5 161.0Q123.7 165.7 128.8 167.9M114.9 182.1Q121.7 183.9 123.5 193.6M111.8 205.0Q123.5 204.3 128.9 206.2M111.8 205.0Q116.1 208.8 118.3 214.1M112.5 234.1Q114.5 239.3 112.6 247.7M112.6 247.7Q111.3 249.8 113.5 255.9M113.5 255.9Q120.7 256.0 124.3 256.9M113.4 281.6Q115.0 279.0 122.1 278.7M113.4 281.6Q120.0 285.2 125.5 290.9M114.3 293.8Q120.6 295.1 125.5 290.9M115.7 300.1Q120.8 303.8 123.7 302.7M115.7 300.1Q112.6 307.6 112.7 309.2M124.6 51.2Q132.8 51.9 133.9 52.1M123.1 63.9Q128.0 63.6 140.5 70.0M125.8 71.8Q135.2 73.8 140.5 70.0M125.8 71.8Q127.6 78.3 125.7 84.7M125.8 71.8Q132.8 74.9 139.2 84.1M128.6 93.5Q132.8 97.9 135.4 94.4M128.9 114.2Q129.6 116.5 135.1 117.0M127.9 129.7Q135.4 133.0 137.3 133.9M123.9 149.7Q124.4 154.1 127.4 162.7M127.4 162.7Q130.0 168.7 128.8 167.9M128.8 167.9Q129.2 172.7 123.5 179.1M123.5 179.1Q130.9 189.6 134.4 195.1M123.5 193.6Q128.0 196.4 134.4 195.1M124.0 216.9Q131.3 211.6 140.5 211.1M124.0 216.9Q120.3 222.5 124.5 224.4M127.8 232.7Q134.8 230.9 137.8 236.4M127.8 232.7Q121.8 239.7 122.7 249.7M122.7 249.7Q128.1 250.0 138.2 246.7M122.7 249.7Q121.1 253.9 124.3 256.9M124.3 256.9Q130.3 254.9 135.5 255.4M126.6 270.4Q127.2 274.0 122.1 278.7M133.9 52.1Q140.4 51.5 146.7 48.2M133.9 52.1Q140.4 54.6 148.3 62.2M140.3 56.8Q144.0 65.4 140.5 70.0M140.3 56.8Q143.9 65.2 146.8 73.8M140.5 70.0Q140.8 75.4 139.2 84.1M139.2 84.1Q138.6 87.3 144.8 89.9M138.2 106.4Q145.1 106.3 145.5 112.5M135.1 117.0Q144.2 113.8 145.5 112.5M135.1 117.0Q145.2 124.6 147.3 127.9M140.7 127.4Q143.8 130.9 150.5 139.0M137.3 133.9Q140.2 144.2 137.0 146.8M138.7 160.4Q145.4 159.2 147.2 156.5M138.2 182.0Q142.2 182.8 145.6 179.0M138.2 182.0Q138.9 191.3 134.4 195.1M140.5 211.1Q136.4 221.6 135.7 226.8M138.2 246.7Q140.5 251.6 135.5 255.4M146.7 48.2Q149.2 48.0 159.5 52.7M146.7 48.2Q148.7 54.6 148.3 62.2M148.3 62.2Q158.6 60.8 162.1 57.1M148.3 62.2Q156.4 64.3 161.3 72.0M146.8 73.8Q154.3 74.6 161.3 72.0M146.8 73.8Q154.4 80.5 155.4 80.9M144.9 80.2Q149.0 84.9 156.9 89.6M150.2 105.8Q157.7 108.6 157.6 118.0M145.5 112.5Q148.1 112.7 157.6 118.0M147.3 127.9Q155.8 124.1 160.6 123.1M147.3 127.9Q156.3 135.5 161.9 137.8M148.7 145.2Q150.4 147.2 147.2 156.5M147.2 156.5Q155.8 167.4 161.5 173.5M148.2 170.5Q156.5 174.9 161.5 173.5M148.2 170.5Q149.5 175.7 145.6 179.0M150.4 206.1Q156.0 209.2 155.6 211.6M151.6 213.1Q150.5 210.6 155.6 211.6M159.5 52.7Q164.3 53.6 162.1 57.1M159.5 52.7Q163.4 58.0 167.7 57.4M162.1 57.1Q166.4 59.6 167.7 57.4M161.3 72.0Q158.1 76.5 155.4 80.9M155.4 80.9Q158.0 84.5 167.3 92.9M156.9 89.6Q158.9 95.2 166.5 100.2M159.3 107.4Q164.7 107.4 169.6 114.3M161.9 137.8Q166.6 133.8 169.2 136.2M162.4 149.7Q164.2 149.0 167.8 155.8M160.9 157.7Q164.1 153.9 167.8 155.8M160.9 157.7Q164.7 164.5 161.5 173.5M160.9 157.7Q168.0 162.1 169.8 167.3M161.5 173.5Q164.8 179.3 171.0 179.8M161.9 180.5Q162.6 184.6 167.0 188.4M161.1 191.9Q159.6 199.6 155.9 199.3M155.9 199.3Q165.5 196.7 171.8 201.2M155.9 199.3Q155.4 209.1 155.6 211.6M155.9 199.3Q166.9 205.5 172.3 213.7M169.2 68.3Q164.8 71.8 166.2 78.9M166.2 78.9Q177.5 76.2 184.6 78.7M167.3 92.9Q176.5 92.5 179.3 95.8M166.2 151.7Q168.5 155.3 167.8 155.8M183.4 52.3Q181.9 54.5 184.5 56.3M184.5 56.3Q188.3 60.0 189.9 67.4M179.4 71.9Q182.3 76.3 184.6 78.7M184.6 78.7Q185.6 85.5 179.3 95.8M183.2 180.8Q178.6 185.2 179.2 189.4M189.2 83.2Q191.7 86.0 192.7 89.1M200.7 58.8Q207.1 61.9 207.0 69.7" stroke="#d9d9d9" stroke-width="0.35" fill="none"/>
<path d="M372.5,61 L384,38 M375.6,62 L387,38.5 M372.5,61 Q378,63 384,60 L396.5,55.7 H412 M399.6,38 L412,64 M409,38 L414,62 M395,44 L405,42" fill="none" stroke="#cfcfcf" stroke-width="0.5"/>
<polyline points="202.0,74.5 210.0,60.0 218.0,38.0" fill="none" stroke="#f4f4f4" stroke-width="0.9"/>
<polyline points="220.0,130.0 250.0,150.0 268.0,160.0" fill="none" stroke="#f4f4f4" stroke-width="0.9"/>
<polyline points="240.0,165.0 220.0,180.0 200.0,200.0" fill="none" stroke="#f4f4f4" stroke-width="0.9"/>
<polyline points="320.0,170.0 300.0,190.0 290.0,210.0" fill="none" stroke="#f4f4f4" stroke-width="0.9"/>
<polyline points="350.0,150.0 380.0,140.0 410.0,135.0 440.0,140.0" fill="none" stroke="#f4f4f4" stroke-width="0.9"/>
<polyline points="420.0,200.0 440.0,190.0 470.0,175.0" fill="none" stroke="#f4f4f4" stroke-width="0.9"/>
<polyline points="390.0,190.0 410.0,220.0 430.0,240.0" fill="none" stroke="#f4f4f4" stroke-width="0.9"/>
<polyline points="340.0,250.0 360.0,260.0 380.0,262.0" fill="none" stroke="#f4f4f4" stroke-width="0.9"/>
<polyline points="260.0,250.0 280.0,260.0 300.0,270.0 330.0,265.0" fill="none" stroke="#f4f4f4" stroke-width="0.9"/>
<polyline points="380.0,38.0 385.0,60.0 390.0,90.0" fill="none" stroke="#f4f4f4" stroke-width="0.9"/>
<polyline points="450.0,40.0 460.0,60.0 470.0,80.0" fill="none" stroke="#f4f4f4" stroke-width="0.9"/>
<polyline points="500.0,120.0 480.0,140.0 470.0,160.0" fill="none" stroke="#f4f4f4" stroke-width="0.9"/>
<polyline points="430.0,200.0 450.0,210.0 470.0,230.0" fill="none" stroke="#f4f4f4" stroke-width="0.9"/>
<polyline points="230.0,250.0 250.0,260.0 265.0,280.0" fill="none" stroke="#f4f4f4" stroke-width="0.9"/>
<polyline points="300.0,220.0 320.0,230.0 340.0,240.0" fill="none" stroke="#f4f4f4" stroke-width="0.9"/>
<polyline points="280.0,120.0 290.0,140.0 300.0,150.0" fill="none" stroke="#f4f4f4" stroke-width="0.9"/>
<polyline points="262.0,38.0 268.0,60.0 280.0,80.0" fill="none" stroke="#f4f4f4" stroke-width="0.9"/>
<polyline points="320.0,98.0 340.0,104.0 370.0,100.0 400.0,98.0" fill="none" stroke="#f4f4f4" stroke-width="0.9"/>
<polyline points="300.0,240.0 320.0,255.0 340.0,260.0" fill="none" stroke="#f4f4f4" stroke-width="0.9"/>
<polyline points="49.0,180.0 70.0,175.0 90.0,185.0 110.0,175.0 130.0,180.0 160.0,170.0" fill="none" stroke="#d4d4d4" stroke-width="0.35"/>
<polyline points="60.0,313.0 80.0,290.0 100.0,280.0 130.0,270.0" fill="none" stroke="#d4d4d4" stroke-width="0.35"/>
<polyline points="49.0,240.0 80.0,230.0 110.0,236.0 140.0,232.0" fill="none" stroke="#d4d4d4" stroke-width="0.35"/>
<polyline points="70.0,200.0 90.0,210.0 100.0,230.0 95.0,260.0 110.0,290.0" fill="none" stroke="#d4d4d4" stroke-width="0.35"/>
<polyline points="127.0,173.0 150.0,195.0 172.7,215.3 190.0,232.0" fill="none" stroke="#d4d4d4" stroke-width="0.35"/>
<polyline points="49.0,150.0 80.0,160.0 100.0,150.0 130.0,160.0 150.0,175.0" fill="none" stroke="#d4d4d4" stroke-width="0.35"/>
<polyline points="90.0,260.0 120.0,250.0 140.0,262.0" fill="none" stroke="#d4d4d4" stroke-width="0.35"/>
<polyline points="160.0,38.0 155.0,60.0 152.0,80.0 160.0,100.0" fill="none" stroke="#d4d4d4" stroke-width="0.35"/>
<polyline points="150.0,100.0 165.0,120.0 160.0,140.0 175.0,155.0" fill="none" stroke="#d4d4d4" stroke-width="0.35"/>
<polyline points="60.0,270.0 80.0,250.0 75.0,220.0" fill="none" stroke="#d4d4d4" stroke-width="0.35"/>
<polyline points="100.0,313.0 110.0,295.0 130.0,290.0" fill="none" stroke="#d4d4d4" stroke-width="0.35"/>
<polyline points="301.3,176.0 295.0,200.0 290.0,225.0 286.0,250.0 287.0,280.0 284.0,313.0" fill="none" stroke="#f7f7f7" stroke-width="2.8" stroke-linejoin="round" stroke-linecap="round"/>
<polyline points="187.0,38.0 200.0,73.8 206.0,83.0 228.0,88.0 254.0,94.0 285.4,92.7 316.7,90.0 340.0,84.9 379.0,77.0 418.0,71.3 449.4,74.5 483.0,88.8 517.0,105.7 522.0,108.0" fill="none" stroke="#f7f7f7" stroke-width="1.9" stroke-linejoin="round" stroke-linecap="round"/>
<polyline points="173.0,38.0 177.0,52.0 182.0,75.0 185.8,95.3 188.0,110.0" fill="none" stroke="#f7f7f7" stroke-width="1.9" stroke-linejoin="round" stroke-linecap="round"/>
<polyline points="177.0,52.0 195.0,60.0 210.0,44.0" fill="none" stroke="#f7f7f7" stroke-width="1.9" stroke-linejoin="round" stroke-linecap="round"/>
<polyline points="225.5,95.3 238.5,116.0 241.0,129.0 248.0,150.0 270.0,176.0 285.0,200.0" fill="none" stroke="#f7f7f7" stroke-width="1.9" stroke-linejoin="round" stroke-linecap="round"/>
<polyline points="240.0,121.0 267.0,120.8 300.0,119.5 340.0,118.7 380.0,122.0 439.0,124.0 470.0,123.0" fill="none" stroke="#f7f7f7" stroke-width="1.9" stroke-linejoin="round" stroke-linecap="round"/>
<polyline points="288.0,38.0 288.0,103.0" fill="none" stroke="#f7f7f7" stroke-width="1.9" stroke-linejoin="round" stroke-linecap="round"/>
<polyline points="308.9,38.0 310.0,60.0 316.7,90.0" fill="none" stroke="#f7f7f7" stroke-width="1.9" stroke-linejoin="round" stroke-linecap="round"/>
<polyline points="416.8,38.0 418.0,71.3 416.0,100.0 415.0,150.0 416.0,200.0 414.0,240.0" fill="none" stroke="#f7f7f7" stroke-width="1.9" stroke-linejoin="round" stroke-linecap="round"/>
<polyline points="493.6,38.0 494.0,100.0 492.0,150.0" fill="none" stroke="#f7f7f7" stroke-width="1.9" stroke-linejoin="round" stroke-linecap="round"/>
<polyline points="449.0,95.0 449.0,150.0 447.0,176.0" fill="none" stroke="#f7f7f7" stroke-width="1.9" stroke-linejoin="round" stroke-linecap="round"/>
<polyline points="360.8,38.0 360.0,77.0" fill="none" stroke="#f7f7f7" stroke-width="1.9" stroke-linejoin="round" stroke-linecap="round"/>
<polyline points="137.0,248.0 160.0,241.0 179.0,233.0 210.0,222.0 244.7,214.0 262.0,216.0 279.0,226.0 285.0,240.0 286.0,260.0 287.7,279.0 285.0,300.0 282.0,313.0" fill="none" stroke="#f7f7f7" stroke-width="1.9" stroke-linejoin="round" stroke-linecap="round"/>
<polyline points="124.0,313.0 137.0,271.0 147.0,245.0 173.0,225.0 179.0,199.0 186.0,173.0" fill="none" stroke="#f7f7f7" stroke-width="1.9" stroke-linejoin="round" stroke-linecap="round"/>
<polyline points="200.0,313.0 240.0,300.0 287.0,299.0 320.0,298.0 345.0,292.0 380.0,287.0 420.0,276.0" fill="none" stroke="#f7f7f7" stroke-width="1.9" stroke-linejoin="round" stroke-linecap="round"/>
<polyline points="300.0,150.0 320.0,170.0 340.0,190.0 350.0,205.0 360.0,225.0" fill="none" stroke="#f7f7f7" stroke-width="1.9" stroke-linejoin="round" stroke-linecap="round"/>
<polyline points="350.0,225.0 372.0,236.0 395.0,256.0" fill="none" stroke="#f7f7f7" stroke-width="1.9" stroke-linejoin="round" stroke-linecap="round"/>
<polyline points="330.0,38.0 332.0,60.0 330.0,100.0 325.0,140.0 320.0,170.0" fill="none" stroke="#f7f7f7" stroke-width="1.9" stroke-linejoin="round" stroke-linecap="round"/>
<polyline points="400.0,150.0 430.0,160.0 470.0,175.0 500.0,176.0" fill="none" stroke="#f7f7f7" stroke-width="1.9" stroke-linejoin="round" stroke-linecap="round"/>
<polyline points="312.5,200.0 340.0,220.0 375.0,250.0 390.0,262.0" fill="none" stroke="#f4f4f4" stroke-width="1.6" stroke-linejoin="round"/>
<polyline points="312.5,200.0 340.0,220.0 375.0,250.0 390.0,262.0" fill="none" stroke="#9a9a9a" stroke-width="0.9" stroke-dasharray="1.4 1.6" stroke-linejoin="round"/>
<polyline points="151.5,124.6 173.0,134.3 198.0,140.8 240.8,141.0 291.6,164.6 301.3,176.0 287.7,224.8 284.7,240.0 287.7,279.0 281.8,298.6" fill="none" stroke="#f4f4f4" stroke-width="1.6" stroke-linejoin="round"/>
<polyline points="151.5,124.6 173.0,134.3 198.0,140.8 240.8,141.0 291.6,164.6 301.3,176.0 287.7,224.8 284.7,240.0 287.7,279.0 281.8,298.6" fill="none" stroke="#9a9a9a" stroke-width="0.9" stroke-dasharray="1.4 1.6" stroke-linejoin="round"/>
<polyline points="330.0,158.7 369.0,140.0 414.0,136.3 441.8,149.8 462.0,166.4 476.9,164.6 488.0,148.0 495.4,129.5 500.9,111.0" fill="none" stroke="#f4f4f4" stroke-width="1.6" stroke-linejoin="round"/>
<polyline points="330.0,158.7 369.0,140.0 414.0,136.3 441.8,149.8 462.0,166.4 476.9,164.6 488.0,148.0 495.4,129.5 500.9,111.0" fill="none" stroke="#9a9a9a" stroke-width="0.9" stroke-dasharray="1.4 1.6" stroke-linejoin="round"/>
<polyline points="509.0,38.0 507.0,70.0 504.6,100.0 499.0,137.0 484.3,181.2 465.8,218.0 447.4,247.6 430.0,272.0" fill="none" stroke="#f4f4f4" stroke-width="1.6" stroke-linejoin="round"/>
<polyline points="509.0,38.0 507.0,70.0 504.6,100.0 499.0,137.0 484.3,181.2 465.8,218.0 447.4,247.6 430.0,272.0" fill="none" stroke="#9a9a9a" stroke-width="0.9" stroke-dasharray="1.4 1.6" stroke-linejoin="round"/>
<polyline points="445.5,175.6 454.8,196.0 458.5,210.7 462.0,236.0" fill="none" stroke="#f4f4f4" stroke-width="1.6" stroke-linejoin="round"/>
<polyline points="445.5,175.6 454.8,196.0 458.5,210.7 462.0,236.0" fill="none" stroke="#9a9a9a" stroke-width="0.9" stroke-dasharray="1.4 1.6" stroke-linejoin="round"/>
<polyline points="287.6,299.9 319.2,298.1 335.6,292.3 360.0,286.4 400.0,280.0 430.0,270.0" fill="none" stroke="#f4f4f4" stroke-width="1.6" stroke-linejoin="round"/>
<polyline points="287.6,299.9 319.2,298.1 335.6,292.3 360.0,286.4 400.0,280.0 430.0,270.0" fill="none" stroke="#9a9a9a" stroke-width="0.9" stroke-dasharray="1.4 1.6" stroke-linejoin="round"/>
<polyline points="291.6,164.6 330.0,158.7" fill="none" stroke="#f4f4f4" stroke-width="1.6" stroke-linejoin="round"/>
<polyline points="291.6,164.6 330.0,158.7" fill="none" stroke="#9a9a9a" stroke-width="0.9" stroke-dasharray="1.4 1.6" stroke-linejoin="round"/>
<polygon points="532.0,38.0 543.0,38.0 543.0,313.0 305.2,313.0 314.5,311.0 331.0,304.0 321.6,304.0 322.8,301.7 333.3,298.1 335.6,295.2 342.7,293.4 358.1,291.8 387.4,285.3 416.7,277.2 429.7,270.7 440.0,259.8 447.4,251.3 462.0,236.5 475.0,221.8 480.6,218.0 489.8,207.0 495.4,196.0 498.0,192.0 502.7,179.3 506.4,166.4 510.1,153.5 513.0,152.0 519.3,136.9 521.9,100.0 526.0,95.0 522.0,88.0 523.0,75.0 521.8,68.0 522.7,58.5 526.0,52.0 531.0,46.0" fill="#bed1fd"/>
<polygon points="270,313 276,308 282,313" fill="#bed1fd"/>
<polyline points="276.9,42.9 281.7,39.6" fill="none" stroke="#e8322e" stroke-width="1" stroke-linecap="round"/>
<polyline points="213.4,126.5 212.5,140.8" fill="none" stroke="#e8322e" stroke-width="1" stroke-linecap="round"/>
<polyline points="311.0,121.2 319.0,135.7" fill="none" stroke="#e8322e" stroke-width="1" stroke-linecap="round"/>
<polyline points="266.0,120.8 271.0,119.8 276.0,120.3" fill="none" stroke="#a8713f" stroke-width="1" stroke-linecap="round"/>
<polyline points="254.2,101.0 262.0,96.0 272.4,93.2" fill="none" stroke="#a8713f" stroke-width="1" stroke-linecap="round"/>
<polyline points="151.5,140.2 157.4,132.4" fill="none" stroke="#e8322e" stroke-width="1" stroke-linecap="round"/>
<polyline points="174.0,159.1 182.0,159.5 188.6,161.7" fill="none" stroke="#a8713f" stroke-width="1" stroke-linecap="round"/>
<polyline points="245.3,215.0 276.0,222.5" fill="none" stroke="#e8322e" stroke-width="1" stroke-linecap="round"/>
<polyline points="290.6,202.4 286.0,213.0 285.0,208.0 286.0,216.0 278.9,224.8" fill="none" stroke="#e8322e" stroke-width="1" stroke-linecap="round"/>
<polyline points="309.0,231.7 309.0,244.4" fill="none" stroke="#f4a23a" stroke-width="1" stroke-linecap="round"/>
<polyline points="247.6,297.6 258.4,288.4" fill="none" stroke="#f4a23a" stroke-width="1" stroke-linecap="round"/>
<polyline points="120.3,298.6 120.3,313.0" fill="none" stroke="#f4a23a" stroke-width="1" stroke-linecap="round"/>
<polyline points="113.0,274.2 112.4,276.0" fill="none" stroke="#e8322e" stroke-width="1" stroke-linecap="round"/>
<polyline points="206.2,270.3 206.8,275.0" fill="none" stroke="#e8322e" stroke-width="1" stroke-linecap="round"/>
<polyline points="208.6,278.0 209.5,285.0" fill="none" stroke="#e8322e" stroke-width="1" stroke-linecap="round"/>
<polyline points="220.3,283.0 226.1,291.8" fill="none" stroke="#e8322e" stroke-width="1" stroke-linecap="round"/>
<polyline points="223.5,296.0 225.5,297.0" fill="none" stroke="#e8322e" stroke-width="1" stroke-linecap="round"/>
<polyline points="207.6,302.5 211.5,303.9" fill="none" stroke="#e8322e" stroke-width="1" stroke-linecap="round"/>
<polyline points="308.0,162.6 315.0,164.6" fill="none" stroke="#f4a23a" stroke-width="1" stroke-linecap="round"/>
<polyline points="358.0,161.7 379.0,159.6" fill="none" stroke="#e8322e" stroke-width="1" stroke-linecap="round"/>
<polyline points="359.4,152.6 360.7,169.5" fill="none" stroke="#e8322e" stroke-width="1" stroke-linecap="round"/>
<polyline points="369.8,165.6 373.8,176.0" fill="none" stroke="#e8322e" stroke-width="1" stroke-linecap="round"/>
<polyline points="358.0,168.2 368.5,167.7" fill="none" stroke="#e8322e" stroke-width="1" stroke-linecap="round"/>
<polyline points="358.1,186.5 355.5,190.4" fill="none" stroke="#e8322e" stroke-width="1" stroke-linecap="round"/>
<polyline points="384.2,191.7 385.5,203.4" fill="none" stroke="#a8713f" stroke-width="1" stroke-linecap="round"/>
<polyline points="360.7,213.8 372.4,202.0" fill="none" stroke="#a8713f" stroke-width="1" stroke-linecap="round"/>
<polyline points="340.0,216.4 355.5,216.4" fill="none" stroke="#a8713f" stroke-width="1" stroke-linecap="round"/>
<polyline points="355.5,213.0 360.0,211.0 366.0,215.0 369.8,221.6" fill="none" stroke="#e8322e" stroke-width="1" stroke-linecap="round"/>
<polyline points="398.5,216.4 400.3,223.0" fill="none" stroke="#a8713f" stroke-width="1" stroke-linecap="round"/>
<polyline points="389.4,225.5 394.6,220.3" fill="none" stroke="#a8713f" stroke-width="1" stroke-linecap="round"/>
<polyline points="420.6,203.4 420.6,215.1" fill="none" stroke="#f4a23a" stroke-width="1" stroke-linecap="round"/>
<polyline points="392.0,236.0 398.5,246.4" fill="none" stroke="#e8322e" stroke-width="1" stroke-linecap="round"/>
<polyline points="389.4,242.4 390.7,252.9" fill="none" stroke="#e8322e" stroke-width="1" stroke-linecap="round"/>
<polyline points="359.4,246.4 363.3,249.0" fill="none" stroke="#a8713f" stroke-width="1" stroke-linecap="round"/>
<polyline points="375.0,251.6 375.5,256.8" fill="none" stroke="#e8322e" stroke-width="1" stroke-linecap="round"/>
<polyline points="402.4,221.6 404.5,222.4" fill="none" stroke="#e8322e" stroke-width="1" stroke-linecap="round"/>
<polyline points="406.3,246.4 406.8,250.3" fill="none" stroke="#e8322e" stroke-width="1" stroke-linecap="round"/>
<polyline points="388.6,243.0 391.5,250.7" fill="none" stroke="#e8322e" stroke-width="1" stroke-linecap="round"/>
<polyline points="396.4,240.0 398.0,245.9" fill="none" stroke="#e8322e" stroke-width="1" stroke-linecap="round"/>
<polyline points="374.0,251.7 375.3,257.6" fill="none" stroke="#e8322e" stroke-width="1" stroke-linecap="round"/>
<polyline points="387.6,261.5 391.5,275.2" fill="none" stroke="#e8322e" stroke-width="1" stroke-linecap="round"/>
<polyline points="407.1,260.5 410.0,260.5" fill="none" stroke="#e8322e" stroke-width="1" stroke-linecap="round"/>
<polyline points="381.8,282.6 382.6,282.0" fill="none" stroke="#e8322e" stroke-width="1" stroke-linecap="round"/>
<polyline points="491.0,53.5 496.0,54.5" fill="none" stroke="#e8322e" stroke-width="1" stroke-linecap="round"/>
<polyline points="507.0,75.0 508.0,80.0" fill="none" stroke="#e8322e" stroke-width="1" stroke-linecap="round"/>
<polyline points="365.0,70.0 366.0,71.0" fill="none" stroke="#e8322e" stroke-width="1" stroke-linecap="round"/>
<text x="231.3" y="83.8" font-size="3.7" fill="#4e4e4e" letter-spacing="0.1" text-anchor="middle" font-family="Liberation Sans">Carnide</text>
<text x="208.5" y="119.60000000000001" font-size="3.7" fill="#4e4e4e" letter-spacing="0.1" text-anchor="middle" font-family="Liberation Sans">Benfica</text>
<text x="232" y="205.5" font-size="3.7" fill="#4e4e4e" letter-spacing="0.1" text-anchor="middle" font-family="Liberation Sans">Monsanto</text>
<text x="311.9" y="212.29999999999998" font-size="3.7" fill="#4e4e4e" letter-spacing="0.1" text-anchor="middle" font-family="Liberation Sans">Campolide</text>
<text x="308.6" y="243.2" font-size="3.7" fill="#4e4e4e" letter-spacing="0.1" text-anchor="middle" font-family="Liberation Sans">Pr. Duque</text>
<text x="216.4" y="283.59999999999997" font-size="3.7" fill="#4e4e4e" letter-spacing="0.1" text-anchor="middle" font-family="Liberation Sans">Ajuda</text>
<text x="320.9" y="273.8" font-size="3.7" fill="#4e4e4e" letter-spacing="0.1" text-anchor="middle" font-family="Liberation Sans">Lapa</text>
<text x="465.5" y="69.5" font-size="3.7" fill="#4e4e4e" letter-spacing="0.1" text-anchor="middle" font-family="Liberation Sans">Olivais</text>
<text x="480.2" y="132.0" font-size="3.7" fill="#4e4e4e" letter-spacing="0.1" text-anchor="middle" font-family="Liberation Sans">Marvila</text>
<text x="351.6" y="104.3" font-size="3.7" fill="#4e4e4e" letter-spacing="0.1" text-anchor="middle" font-family="Liberation Sans">Cp Grande</text>
<text x="396.5" y="115.0" font-size="3.7" fill="#4e4e4e" letter-spacing="0.1" text-anchor="middle" font-family="Liberation Sans">Alvalade</text>
<text x="324" y="167.1" font-size="3.7" fill="#4e4e4e" letter-spacing="0.1" text-anchor="middle" font-family="Liberation Sans">Pr. de Espanha</text>
<text x="375" y="184.2" font-size="3.7" fill="#4e4e4e" letter-spacing="0.1" text-anchor="middle" font-family="Liberation Sans">Saldanha</text>
<text x="345.6" y="201.6" font-size="3.7" fill="#4e4e4e" letter-spacing="0.1" text-anchor="middle" font-family="Liberation Sans">Pq. Eduardo VII</text>
<text x="416" y="212.7" font-size="3.7" fill="#4e4e4e" letter-spacing="0.1" text-anchor="middle" font-family="Liberation Sans">Penha de França</text>
<text x="340.7" y="236.79999999999998" font-size="3.7" fill="#4e4e4e" letter-spacing="0.1" text-anchor="middle" font-family="Liberation Sans">Rato</text>
<text x="419.8" y="244.0" font-size="3.7" fill="#4e4e4e" letter-spacing="0.1" text-anchor="middle" font-family="Liberation Sans">Graça</text>
<text x="464.8" y="192.39999999999998" font-size="3.7" fill="#4e4e4e" letter-spacing="0.1" text-anchor="middle" font-family="Liberation Sans">Xabregas</text>
<text x="352" y="217.2" font-size="3.7" fill="#4e4e4e" letter-spacing="0.1" text-anchor="middle" font-family="Liberation Sans">Marquês</text>
<text x="371" y="265.0" font-size="3.7" fill="#4e4e4e" letter-spacing="0.1" text-anchor="middle" font-family="Liberation Sans">Bairro Alto</text>
<text x="394.5" y="271.5" font-size="3.7" fill="#4e4e4e" letter-spacing="0.1" text-anchor="middle" font-family="Liberation Sans">Baixa</text>
<text x="404.2" y="253.89999999999998" font-size="3.7" fill="#4e4e4e" letter-spacing="0.1" text-anchor="middle" font-family="Liberation Sans">Mouraria</text>
<text x="409" y="262.7" font-size="3.7" fill="#4e4e4e" letter-spacing="0.1" text-anchor="middle" font-family="Liberation Sans">Castelo</text>
<text x="397.4" y="283.59999999999997" font-size="3.7" fill="#4e4e4e" letter-spacing="0.1" text-anchor="middle" font-family="Liberation Sans">Pr. do Comércio</text>
<text x="416" y="269.5" font-size="3.7" fill="#4e4e4e" letter-spacing="0.1" text-anchor="middle" font-family="Liberation Sans">Alfama</text>
<text x="516" y="54.800000000000004" font-size="3.7" fill="#4e4e4e" letter-spacing="0.1" text-anchor="middle" font-family="Liberation Sans">Pq. das Nações</text>
<path d="M184.6,111.2 A3.4,3.4 0 1 1 191.4,111.2 Q191.1,113.4 188.0,115.8 Q184.9,113.4 184.6,111.2Z" fill="#1f2b5c" stroke="#f4f6fa" stroke-width="0.35"/>
<circle cx="188.0" cy="111.2" r="1.6" fill="none" stroke="#cfd5e6" stroke-width="0.5"/>
<path d="M211.6,109.6 A3.4,3.4 0 1 1 218.4,109.6 Q218.1,111.8 215.0,114.2 Q211.9,111.8 211.6,109.6Z" fill="#1f2b5c" stroke="#f4f6fa" stroke-width="0.35"/>
<circle cx="215.0" cy="109.6" r="1.6" fill="none" stroke="#cfd5e6" stroke-width="0.5"/>
<path d="M191.1,133.4 A3.4,3.4 0 1 1 197.9,133.4 Q197.6,135.6 194.5,138.0 Q191.4,135.6 191.1,133.4Z" fill="#1f2b5c" stroke="#f4f6fa" stroke-width="0.35"/>
<circle cx="194.5" cy="133.4" r="1.6" fill="none" stroke="#cfd5e6" stroke-width="0.5"/>
<path d="M261.1,78.0 A3.4,3.4 0 1 1 267.9,78.0 Q267.6,80.2 264.5,82.6 Q261.4,80.2 261.1,78.0Z" fill="#1f2b5c" stroke="#f4f6fa" stroke-width="0.35"/>
<circle cx="264.5" cy="78.0" r="1.6" fill="none" stroke="#cfd5e6" stroke-width="0.5"/>
<path d="M265.8,174.3 A3.4,3.4 0 1 1 272.6,174.3 Q272.3,176.5 269.2,178.9 Q266.1,176.5 265.8,174.3Z" fill="#1f2b5c" stroke="#f4f6fa" stroke-width="0.35"/>
<circle cx="269.2" cy="174.3" r="1.6" fill="none" stroke="#cfd5e6" stroke-width="0.5"/>
<path d="M211.8,205.5 A3.4,3.4 0 1 1 218.6,205.5 Q218.3,207.7 215.2,210.1 Q212.1,207.7 211.8,205.5Z" fill="#1f2b5c" stroke="#f4f6fa" stroke-width="0.35"/>
<circle cx="215.2" cy="205.5" r="1.6" fill="none" stroke="#cfd5e6" stroke-width="0.5"/>
<path d="M200.8,212.0 A3.4,3.4 0 1 1 207.6,212.0 Q207.3,214.2 204.2,216.6 Q201.1,214.2 200.8,212.0Z" fill="#1f2b5c" stroke="#f4f6fa" stroke-width="0.35"/>
<circle cx="204.2" cy="212.0" r="1.6" fill="none" stroke="#cfd5e6" stroke-width="0.5"/>
<path d="M215.7,217.8 A3.4,3.4 0 1 1 222.5,217.8 Q222.2,220.0 219.1,222.4 Q216.0,220.0 215.7,217.8Z" fill="#1f2b5c" stroke="#f4f6fa" stroke-width="0.35"/>
<circle cx="219.1" cy="217.8" r="1.6" fill="none" stroke="#cfd5e6" stroke-width="0.5"/>
<path d="M238.7,287.0 A3.4,3.4 0 1 1 245.5,287.0 Q245.2,289.2 242.1,291.6 Q239.0,289.2 238.7,287.0Z" fill="#1f2b5c" stroke="#f4f6fa" stroke-width="0.35"/>
<circle cx="242.1" cy="287.0" r="1.6" fill="none" stroke="#cfd5e6" stroke-width="0.5"/>
<path d="M290.5,287.0 A3.4,3.4 0 1 1 297.3,287.0 Q297.0,289.2 293.9,291.6 Q290.8,289.2 290.5,287.0Z" fill="#1f2b5c" stroke="#f4f6fa" stroke-width="0.35"/>
<circle cx="293.9" cy="287.0" r="1.6" fill="none" stroke="#cfd5e6" stroke-width="0.5"/>
<path d="M329.6,277.8 A3.4,3.4 0 1 1 336.4,277.8 Q336.1,280.0 333.0,282.4 Q329.9,280.0 329.6,277.8Z" fill="#1f2b5c" stroke="#f4f6fa" stroke-width="0.35"/>
<circle cx="333.0" cy="277.8" r="1.6" fill="none" stroke="#cfd5e6" stroke-width="0.5"/>
<path d="M334.5,41.9 A3.4,3.4 0 1 1 341.3,41.9 Q341.0,44.1 337.9,46.5 Q334.8,44.1 334.5,41.9Z" fill="#1f2b5c" stroke="#f4f6fa" stroke-width="0.35"/>
<circle cx="337.9" cy="41.9" r="1.6" fill="none" stroke="#cfd5e6" stroke-width="0.5"/>
<path d="M496.9,49.9 A3.4,3.4 0 1 1 503.7,49.9 Q503.4,52.1 500.3,54.5 Q497.2,52.1 496.9,49.9Z" fill="#1f2b5c" stroke="#f4f6fa" stroke-width="0.35"/>
<circle cx="500.3" cy="49.9" r="1.6" fill="none" stroke="#cfd5e6" stroke-width="0.5"/>
<path d="M452.4,77.6 A3.4,3.4 0 1 1 459.2,77.6 Q458.9,79.8 455.8,82.2 Q452.7,79.8 452.4,77.6Z" fill="#1f2b5c" stroke="#f4f6fa" stroke-width="0.35"/>
<circle cx="455.8" cy="77.6" r="1.6" fill="none" stroke="#cfd5e6" stroke-width="0.5"/>
<path d="M477.4,87.3 A3.4,3.4 0 1 1 484.2,87.3 Q483.9,89.5 480.8,91.9 Q477.7,89.5 477.4,87.3Z" fill="#1f2b5c" stroke="#f4f6fa" stroke-width="0.35"/>
<circle cx="480.8" cy="87.3" r="1.6" fill="none" stroke="#cfd5e6" stroke-width="0.5"/>
<path d="M498.6,95.3 A3.4,3.4 0 1 1 505.4,95.3 Q505.1,97.5 502.0,99.9 Q498.9,97.5 498.6,95.3Z" fill="#1f2b5c" stroke="#f4f6fa" stroke-width="0.35"/>
<circle cx="502.0" cy="95.3" r="1.6" fill="none" stroke="#cfd5e6" stroke-width="0.5"/>
<path d="M340.8,130.0 A3.4,3.4 0 1 1 347.6,130.0 Q347.3,132.2 344.2,134.6 Q341.1,132.2 340.8,130.0Z" fill="#1f2b5c" stroke="#f4f6fa" stroke-width="0.35"/>
<circle cx="344.2" cy="130.0" r="1.6" fill="none" stroke="#cfd5e6" stroke-width="0.5"/>
<path d="M332.0,143.8 A3.4,3.4 0 1 1 338.8,143.8 Q338.5,146.0 335.4,148.4 Q332.3,146.0 332.0,143.8Z" fill="#1f2b5c" stroke="#f4f6fa" stroke-width="0.35"/>
<circle cx="335.4" cy="143.8" r="1.6" fill="none" stroke="#cfd5e6" stroke-width="0.5"/>
<path d="M382.5,149.4 A3.4,3.4 0 1 1 389.3,149.4 Q389.0,151.6 385.9,154.0 Q382.8,151.6 382.5,149.4Z" fill="#1f2b5c" stroke="#f4f6fa" stroke-width="0.35"/>
<circle cx="385.9" cy="149.4" r="1.6" fill="none" stroke="#cfd5e6" stroke-width="0.5"/>
<path d="M421.1,152.8 A3.4,3.4 0 1 1 427.9,152.8 Q427.6,155.0 424.5,157.4 Q421.4,155.0 421.1,152.8Z" fill="#1f2b5c" stroke="#f4f6fa" stroke-width="0.35"/>
<circle cx="424.5" cy="152.8" r="1.6" fill="none" stroke="#cfd5e6" stroke-width="0.5"/>
<path d="M421.3,159.8 A3.4,3.4 0 1 1 428.1,159.8 Q427.8,162.0 424.7,164.4 Q421.6,162.0 421.3,159.8Z" fill="#1f2b5c" stroke="#f4f6fa" stroke-width="0.35"/>
<circle cx="424.7" cy="159.8" r="1.6" fill="none" stroke="#cfd5e6" stroke-width="0.5"/>
<path d="M301.6,160.0 A3.4,3.4 0 1 1 308.4,160.0 Q308.1,162.2 305.0,164.6 Q301.9,162.2 301.6,160.0Z" fill="#1f2b5c" stroke="#f4f6fa" stroke-width="0.35"/>
<circle cx="305.0" cy="160.0" r="1.6" fill="none" stroke="#cfd5e6" stroke-width="0.5"/>
<path d="M332.1,160.8 A3.4,3.4 0 1 1 338.9,160.8 Q338.6,163.0 335.5,165.4 Q332.4,163.0 332.1,160.8Z" fill="#1f2b5c" stroke="#f4f6fa" stroke-width="0.35"/>
<circle cx="335.5" cy="160.8" r="1.6" fill="none" stroke="#cfd5e6" stroke-width="0.5"/>
<path d="M297.8,165.7 A3.4,3.4 0 1 1 304.6,165.7 Q304.3,167.9 301.2,170.3 Q298.1,167.9 297.8,165.7Z" fill="#1f2b5c" stroke="#f4f6fa" stroke-width="0.35"/>
<circle cx="301.2" cy="165.7" r="1.6" fill="none" stroke="#cfd5e6" stroke-width="0.5"/>
<path d="M315.7,183.5 A3.4,3.4 0 1 1 322.5,183.5 Q322.2,185.7 319.1,188.1 Q316.0,185.7 315.7,183.5Z" fill="#1f2b5c" stroke="#f4f6fa" stroke-width="0.35"/>
<circle cx="319.1" cy="183.5" r="1.6" fill="none" stroke="#cfd5e6" stroke-width="0.5"/>
<path d="M346.7,183.0 A3.4,3.4 0 1 1 353.5,183.0 Q353.2,185.2 350.1,187.6 Q347.0,185.2 346.7,183.0Z" fill="#1f2b5c" stroke="#f4f6fa" stroke-width="0.35"/>
<circle cx="350.1" cy="183.0" r="1.6" fill="none" stroke="#cfd5e6" stroke-width="0.5"/>
<path d="M313.5,192.9 A3.4,3.4 0 1 1 320.3,192.9 Q320.0,195.1 316.9,197.5 Q313.8,195.1 313.5,192.9Z" fill="#1f2b5c" stroke="#f4f6fa" stroke-width="0.35"/>
<circle cx="316.9" cy="192.9" r="1.6" fill="none" stroke="#cfd5e6" stroke-width="0.5"/>
<path d="M349.3,192.3 A3.4,3.4 0 1 1 356.1,192.3 Q355.8,194.5 352.7,196.9 Q349.6,194.5 349.3,192.3Z" fill="#1f2b5c" stroke="#f4f6fa" stroke-width="0.35"/>
<circle cx="352.7" cy="192.3" r="1.6" fill="none" stroke="#cfd5e6" stroke-width="0.5"/>
<path d="M419.6,199.0 A3.4,3.4 0 1 1 426.4,199.0 Q426.1,201.2 423.0,203.6 Q419.9,201.2 419.6,199.0Z" fill="#1f2b5c" stroke="#f4f6fa" stroke-width="0.35"/>
<circle cx="423.0" cy="199.0" r="1.6" fill="none" stroke="#cfd5e6" stroke-width="0.5"/>
<path d="M466.9,194.5 A3.4,3.4 0 1 1 473.7,194.5 Q473.4,196.7 470.3,199.1 Q467.2,196.7 466.9,194.5Z" fill="#1f2b5c" stroke="#f4f6fa" stroke-width="0.35"/>
<circle cx="470.3" cy="194.5" r="1.6" fill="none" stroke="#cfd5e6" stroke-width="0.5"/>
<path d="M459.0,203.4 A3.4,3.4 0 1 1 465.8,203.4 Q465.5,205.6 462.4,208.0 Q459.3,205.6 459.0,203.4Z" fill="#1f2b5c" stroke="#f4f6fa" stroke-width="0.35"/>
<circle cx="462.4" cy="203.4" r="1.6" fill="none" stroke="#cfd5e6" stroke-width="0.5"/>
<path d="M320.8,215.2 A3.4,3.4 0 1 1 327.6,215.2 Q327.3,217.4 324.2,219.8 Q321.1,217.4 320.8,215.2Z" fill="#1f2b5c" stroke="#f4f6fa" stroke-width="0.35"/>
<circle cx="324.2" cy="215.2" r="1.6" fill="none" stroke="#cfd5e6" stroke-width="0.5"/>
<path d="M371.1,220.1 A3.4,3.4 0 1 1 377.9,220.1 Q377.6,222.3 374.5,224.7 Q371.4,222.3 371.1,220.1Z" fill="#1f2b5c" stroke="#f4f6fa" stroke-width="0.35"/>
<circle cx="374.5" cy="220.1" r="1.6" fill="none" stroke="#cfd5e6" stroke-width="0.5"/>
<path d="M450.1,236.5 A3.4,3.4 0 1 1 456.9,236.5 Q456.6,238.7 453.5,241.1 Q450.4,238.7 450.1,236.5Z" fill="#1f2b5c" stroke="#f4f6fa" stroke-width="0.35"/>
<circle cx="453.5" cy="236.5" r="1.6" fill="none" stroke="#cfd5e6" stroke-width="0.5"/>
<path d="M342.0,265.0 A3.4,3.4 0 1 1 348.8,265.0 Q348.5,267.2 345.4,269.6 Q342.3,267.2 342.0,265.0Z" fill="#1f2b5c" stroke="#f4f6fa" stroke-width="0.35"/>
<circle cx="345.4" cy="265.0" r="1.6" fill="none" stroke="#cfd5e6" stroke-width="0.5"/>
<path d="M401.8,270.2 A3.4,3.4 0 1 1 408.6,270.2 Q408.3,272.4 405.2,274.8 Q402.1,272.4 401.8,270.2Z" fill="#1f2b5c" stroke="#f4f6fa" stroke-width="0.35"/>
<circle cx="405.2" cy="270.2" r="1.6" fill="none" stroke="#cfd5e6" stroke-width="0.5"/>
<path d="M413.2,265.8 A3.4,3.4 0 1 1 420.0,265.8 Q419.7,268.0 416.6,270.4 Q413.5,268.0 413.2,265.8Z" fill="#1f2b5c" stroke="#f4f6fa" stroke-width="0.35"/>
<circle cx="416.6" cy="265.8" r="1.6" fill="none" stroke="#cfd5e6" stroke-width="0.5"/>
<path d="M260.5,42.0 Q260.5,40.2 262.3,40.2 H265.3 Q267.1,40.2 267.1,42.0 L267.1,43.2 Q266.7,45.5 263.8,47.5 Q260.9,45.5 260.5,43.2Z" fill="#3a9eaa" stroke="#f4f8f8" stroke-width="0.35"/>
<path d="M261.2,42.3 Q263.8,40.9 266.4,42.3" fill="none" stroke="#6dbcc4" stroke-width="0.6"/>
<path d="M262.3,44.4 H265.3" fill="none" stroke="#cfe9ec" stroke-width="0.45"/>
<path d="M268.0,76.5 Q268.0,74.7 269.8,74.7 H272.8 Q274.6,74.7 274.6,76.5 L274.6,77.7 Q274.2,80.0 271.3,82.0 Q268.4,80.0 268.0,77.7Z" fill="#3a9eaa" stroke="#f4f8f8" stroke-width="0.35"/>
<path d="M268.0,78.2 L268.0,76.5 Q268.0,74.7 269.8,74.7 H272.8 Q274.6,74.7 274.6,76.5 L274.6,78.2 Q271.3,79.0 268.0,78.2Z" fill="#f2f7f7"/>
<path d="M269.8,78.9 H272.8" fill="none" stroke="#cfe9ec" stroke-width="0.45"/>
<path d="M277.5,76.5 Q277.5,74.7 279.3,74.7 H282.3 Q284.1,74.7 284.1,76.5 L284.1,77.7 Q283.7,80.0 280.8,82.0 Q277.9,80.0 277.5,77.7Z" fill="#3a9eaa" stroke="#f4f8f8" stroke-width="0.35"/>
<path d="M278.2,76.8 Q280.8,75.4 283.4,76.8" fill="none" stroke="#6dbcc4" stroke-width="0.6"/>
<path d="M279.3,78.9 H282.3" fill="none" stroke="#cfe9ec" stroke-width="0.45"/>
<path d="M290.9,70.7 Q290.9,68.9 292.7,68.9 H295.7 Q297.5,68.9 297.5,70.7 L297.5,71.9 Q297.1,74.2 294.2,76.2 Q291.3,74.2 290.9,71.9Z" fill="#3a9eaa" stroke="#f4f8f8" stroke-width="0.35"/>
<path d="M291.6,71.0 Q294.2,69.6 296.8,71.0" fill="none" stroke="#6dbcc4" stroke-width="0.6"/>
<path d="M292.7,73.1 H295.7" fill="none" stroke="#cfe9ec" stroke-width="0.45"/>
<path d="M303.4,73.7 Q303.4,71.9 305.2,71.9 H308.2 Q310.0,71.9 310.0,73.7 L310.0,74.9 Q309.6,77.2 306.7,79.2 Q303.8,77.2 303.4,74.9Z" fill="#3a9eaa" stroke="#f4f8f8" stroke-width="0.35"/>
<path d="M303.4,75.4 L303.4,73.7 Q303.4,71.9 305.2,71.9 H308.2 Q310.0,71.9 310.0,73.7 L310.0,75.4 Q306.7,76.2 303.4,75.4Z" fill="#f2f7f7"/>
<path d="M305.2,76.1 H308.2" fill="none" stroke="#cfe9ec" stroke-width="0.45"/>
<path d="M293.6,78.1 Q293.6,76.3 295.4,76.3 H298.4 Q300.2,76.3 300.2,78.1 L300.2,79.3 Q299.8,81.6 296.9,83.6 Q294.0,81.6 293.6,79.3Z" fill="#3a9eaa" stroke="#f4f8f8" stroke-width="0.35"/>
<path d="M294.3,78.4 Q296.9,77.0 299.5,78.4" fill="none" stroke="#6dbcc4" stroke-width="0.6"/>
<path d="M295.4,80.5 H298.4" fill="none" stroke="#cfe9ec" stroke-width="0.45"/>
<path d="M310.8,78.9 Q310.8,77.1 312.6,77.1 H315.6 Q317.4,77.1 317.4,78.9 L317.4,80.1 Q317.0,82.4 314.1,84.4 Q311.2,82.4 310.8,80.1Z" fill="#3a9eaa" stroke="#f4f8f8" stroke-width="0.35"/>
<path d="M311.5,79.2 Q314.1,77.8 316.7,79.2" fill="none" stroke="#6dbcc4" stroke-width="0.6"/>
<path d="M312.6,81.3 H315.6" fill="none" stroke="#cfe9ec" stroke-width="0.45"/>
<path d="M334.7,82.8 Q334.7,81.0 336.5,81.0 H339.5 Q341.3,81.0 341.3,82.8 L341.3,84.0 Q340.9,86.3 338.0,88.3 Q335.1,86.3 334.7,84.0Z" fill="#3a9eaa" stroke="#f4f8f8" stroke-width="0.35"/>
<path d="M334.7,84.5 L334.7,82.8 Q334.7,81.0 336.5,81.0 H339.5 Q341.3,81.0 341.3,82.8 L341.3,84.5 Q338.0,85.3 334.7,84.5Z" fill="#f2f7f7"/>
<path d="M336.5,85.2 H339.5" fill="none" stroke="#cfe9ec" stroke-width="0.45"/>
<path d="M380.3,82.8 Q380.3,81.0 382.1,81.0 H385.1 Q386.9,81.0 386.9,82.8 L386.9,84.0 Q386.5,86.3 383.6,88.3 Q380.7,86.3 380.3,84.0Z" fill="#3a9eaa" stroke="#f4f8f8" stroke-width="0.35"/>
<path d="M380.3,84.5 L380.3,82.8 Q380.3,81.0 382.1,81.0 H385.1 Q386.9,81.0 386.9,82.8 L386.9,84.5 Q383.6,85.3 380.3,84.5Z" fill="#f2f7f7"/>
<path d="M382.1,85.2 H385.1" fill="none" stroke="#cfe9ec" stroke-width="0.45"/>
<path d="M361.9,89.9 Q361.9,88.1 363.7,88.1 H366.7 Q368.5,88.1 368.5,89.9 L368.5,91.1 Q368.1,93.4 365.2,95.4 Q362.3,93.4 361.9,91.1Z" fill="#3a9eaa" stroke="#f4f8f8" stroke-width="0.35"/>
<path d="M362.6,90.2 Q365.2,88.8 367.8,90.2" fill="none" stroke="#6dbcc4" stroke-width="0.6"/>
<path d="M363.7,92.3 H366.7" fill="none" stroke="#cfe9ec" stroke-width="0.45"/>
<path d="M293.5,91.4 Q293.5,89.6 295.3,89.6 H298.3 Q300.1,89.6 300.1,91.4 L300.1,92.6 Q299.7,94.9 296.8,96.9 Q293.9,94.9 293.5,92.6Z" fill="#3a9eaa" stroke="#f4f8f8" stroke-width="0.35"/>
<path d="M293.5,93.1 L293.5,91.4 Q293.5,89.6 295.3,89.6 H298.3 Q300.1,89.6 300.1,91.4 L300.1,93.1 Q296.8,93.9 293.5,93.1Z" fill="#f2f7f7"/>
<path d="M295.3,93.8 H298.3" fill="none" stroke="#cfe9ec" stroke-width="0.45"/>
<path d="M337.7,92.3 Q337.7,90.5 339.5,90.5 H342.5 Q344.3,90.5 344.3,92.3 L344.3,93.5 Q343.9,95.8 341.0,97.8 Q338.1,95.8 337.7,93.5Z" fill="#3a9eaa" stroke="#f4f8f8" stroke-width="0.35"/>
<path d="M338.4,92.6 Q341.0,91.2 343.6,92.6" fill="none" stroke="#6dbcc4" stroke-width="0.6"/>
<path d="M339.5,94.7 H342.5" fill="none" stroke="#cfe9ec" stroke-width="0.45"/>
<path d="M331.1,95.9 Q331.1,94.1 332.9,94.1 H335.9 Q337.7,94.1 337.7,95.9 L337.7,97.1 Q337.3,99.4 334.4,101.4 Q331.5,99.4 331.1,97.1Z" fill="#3a9eaa" stroke="#f4f8f8" stroke-width="0.35"/>
<path d="M331.8,96.2 Q334.4,94.8 337.0,96.2" fill="none" stroke="#6dbcc4" stroke-width="0.6"/>
<path d="M332.9,98.3 H335.9" fill="none" stroke="#cfe9ec" stroke-width="0.45"/>
<path d="M514.1,44.0 Q514.1,42.2 515.9,42.2 H518.9 Q520.7,42.2 520.7,44.0 L520.7,45.2 Q520.3,47.5 517.4,49.5 Q514.5,47.5 514.1,45.2Z" fill="#3a9eaa" stroke="#f4f8f8" stroke-width="0.35"/>
<path d="M514.1,45.7 L514.1,44.0 Q514.1,42.2 515.9,42.2 H518.9 Q520.7,42.2 520.7,44.0 L520.7,45.7 Q517.4,46.5 514.1,45.7Z" fill="#f2f7f7"/>
<path d="M515.9,46.4 H518.9" fill="none" stroke="#cfe9ec" stroke-width="0.45"/>
<path d="M511.1,51.1 Q511.1,49.3 512.9,49.3 H515.9 Q517.7,49.3 517.7,51.1 L517.7,52.3 Q517.3,54.6 514.4,56.6 Q511.5,54.6 511.1,52.3Z" fill="#3a9eaa" stroke="#f4f8f8" stroke-width="0.35"/>
<path d="M511.8,51.4 Q514.4,50.0 517.0,51.4" fill="none" stroke="#6dbcc4" stroke-width="0.6"/>
<path d="M512.9,53.5 H515.9" fill="none" stroke="#cfe9ec" stroke-width="0.45"/>
<path d="M513.5,79.1 Q513.5,77.3 515.3,77.3 H518.3 Q520.1,77.3 520.1,79.1 L520.1,80.3 Q519.7,82.6 516.8,84.6 Q513.9,82.6 513.5,80.3Z" fill="#3a9eaa" stroke="#f4f8f8" stroke-width="0.35"/>
<path d="M513.5,80.8 L513.5,79.1 Q513.5,77.3 515.3,77.3 H518.3 Q520.1,77.3 520.1,79.1 L520.1,80.8 Q516.8,81.6 513.5,80.8Z" fill="#f2f7f7"/>
<path d="M515.3,81.5 H518.3" fill="none" stroke="#cfe9ec" stroke-width="0.45"/>
<path d="M512.5,91.1 Q512.5,89.3 514.3,89.3 H517.3 Q519.1,89.3 519.1,91.1 L519.1,92.3 Q518.7,94.6 515.8,96.6 Q512.9,94.6 512.5,92.3Z" fill="#3a9eaa" stroke="#f4f8f8" stroke-width="0.35"/>
<path d="M513.2,91.4 Q515.8,90.0 518.4,91.4" fill="none" stroke="#6dbcc4" stroke-width="0.6"/>
<path d="M514.3,93.5 H517.3" fill="none" stroke="#cfe9ec" stroke-width="0.45"/>
<path d="M377.7,108.7 Q377.7,106.9 379.5,106.9 H382.5 Q384.3,106.9 384.3,108.7 L384.3,109.9 Q383.9,112.2 381.0,114.2 Q378.1,112.2 377.7,109.9Z" fill="#3a9eaa" stroke="#f4f8f8" stroke-width="0.35"/>
<path d="M378.4,109.0 Q381.0,107.6 383.6,109.0" fill="none" stroke="#6dbcc4" stroke-width="0.6"/>
<path d="M379.5,111.1 H382.5" fill="none" stroke="#cfe9ec" stroke-width="0.45"/>
<path d="M390.6,107.8 Q390.6,106.0 392.4,106.0 H395.4 Q397.2,106.0 397.2,107.8 L397.2,109.0 Q396.8,111.3 393.9,113.3 Q391.0,111.3 390.6,109.0Z" fill="#3a9eaa" stroke="#f4f8f8" stroke-width="0.35"/>
<path d="M391.3,108.1 Q393.9,106.7 396.5,108.1" fill="none" stroke="#6dbcc4" stroke-width="0.6"/>
<path d="M392.4,110.2 H395.4" fill="none" stroke="#cfe9ec" stroke-width="0.45"/>
<path d="M336.4,117.5 Q336.4,115.7 338.2,115.7 H341.2 Q343.0,115.7 343.0,117.5 L343.0,118.7 Q342.6,121.0 339.7,123.0 Q336.8,121.0 336.4,118.7Z" fill="#3a9eaa" stroke="#f4f8f8" stroke-width="0.35"/>
<path d="M337.1,117.8 Q339.7,116.4 342.3,117.8" fill="none" stroke="#6dbcc4" stroke-width="0.6"/>
<path d="M338.2,119.9 H341.2" fill="none" stroke="#cfe9ec" stroke-width="0.45"/>
<path d="M376.9,119.3 Q376.9,117.5 378.7,117.5 H381.7 Q383.5,117.5 383.5,119.3 L383.5,120.5 Q383.1,122.8 380.2,124.8 Q377.3,122.8 376.9,120.5Z" fill="#3a9eaa" stroke="#f4f8f8" stroke-width="0.35"/>
<path d="M377.6,119.6 Q380.2,118.2 382.8,119.6" fill="none" stroke="#6dbcc4" stroke-width="0.6"/>
<path d="M378.7,121.7 H381.7" fill="none" stroke="#cfe9ec" stroke-width="0.45"/>
<path d="M393.0,123.2 Q393.0,121.4 394.8,121.4 H397.8 Q399.6,121.4 399.6,123.2 L399.6,124.4 Q399.2,126.7 396.3,128.7 Q393.4,126.7 393.0,124.4Z" fill="#3a9eaa" stroke="#f4f8f8" stroke-width="0.35"/>
<path d="M393.0,124.9 L393.0,123.2 Q393.0,121.4 394.8,121.4 H397.8 Q399.6,121.4 399.6,123.2 L399.6,124.9 Q396.3,125.7 393.0,124.9Z" fill="#f2f7f7"/>
<path d="M394.8,125.6 H397.8" fill="none" stroke="#cfe9ec" stroke-width="0.45"/>
<path d="M352.9,125.7 Q352.9,123.9 354.7,123.9 H357.7 Q359.5,123.9 359.5,125.7 L359.5,126.9 Q359.1,129.2 356.2,131.2 Q353.3,129.2 352.9,126.9Z" fill="#3a9eaa" stroke="#f4f8f8" stroke-width="0.35"/>
<path d="M353.6,126.0 Q356.2,124.6 358.8,126.0" fill="none" stroke="#6dbcc4" stroke-width="0.6"/>
<path d="M354.7,128.1 H357.7" fill="none" stroke="#cfe9ec" stroke-width="0.45"/>
<path d="M371.2,129.1 Q371.2,127.3 373.0,127.3 H376.0 Q377.8,127.3 377.8,129.1 L377.8,130.3 Q377.4,132.6 374.5,134.6 Q371.6,132.6 371.2,130.3Z" fill="#3a9eaa" stroke="#f4f8f8" stroke-width="0.35"/>
<path d="M371.9,129.4 Q374.5,128.0 377.1,129.4" fill="none" stroke="#6dbcc4" stroke-width="0.6"/>
<path d="M373.0,131.5 H376.0" fill="none" stroke="#cfe9ec" stroke-width="0.45"/>
<path d="M359.8,134.5 Q359.8,132.7 361.6,132.7 H364.6 Q366.4,132.7 366.4,134.5 L366.4,135.7 Q366.0,138.0 363.1,140.0 Q360.2,138.0 359.8,135.7Z" fill="#3a9eaa" stroke="#f4f8f8" stroke-width="0.35"/>
<path d="M360.5,134.8 Q363.1,133.4 365.7,134.8" fill="none" stroke="#6dbcc4" stroke-width="0.6"/>
<path d="M361.6,136.9 H364.6" fill="none" stroke="#cfe9ec" stroke-width="0.45"/>
<path d="M367.3,140.2 Q367.3,138.4 369.1,138.4 H372.1 Q373.9,138.4 373.9,140.2 L373.9,141.4 Q373.5,143.7 370.6,145.7 Q367.7,143.7 367.3,141.4Z" fill="#3a9eaa" stroke="#f4f8f8" stroke-width="0.35"/>
<path d="M368.0,140.5 Q370.6,139.1 373.2,140.5" fill="none" stroke="#6dbcc4" stroke-width="0.6"/>
<path d="M369.1,142.6 H372.1" fill="none" stroke="#cfe9ec" stroke-width="0.45"/>
<path d="M386.9,139.3 Q386.9,137.5 388.7,137.5 H391.7 Q393.5,137.5 393.5,139.3 L393.5,140.5 Q393.1,142.8 390.2,144.8 Q387.3,142.8 386.9,140.5Z" fill="#3a9eaa" stroke="#f4f8f8" stroke-width="0.35"/>
<path d="M387.6,139.6 Q390.2,138.2 392.8,139.6" fill="none" stroke="#6dbcc4" stroke-width="0.6"/>
<path d="M388.7,141.7 H391.7" fill="none" stroke="#cfe9ec" stroke-width="0.45"/>
<path d="M353.8,150.2 Q353.8,148.4 355.6,148.4 H358.6 Q360.4,148.4 360.4,150.2 L360.4,151.4 Q360.0,153.7 357.1,155.7 Q354.2,153.7 353.8,151.4Z" fill="#3a9eaa" stroke="#f4f8f8" stroke-width="0.35"/>
<path d="M354.5,150.5 Q357.1,149.1 359.7,150.5" fill="none" stroke="#6dbcc4" stroke-width="0.6"/>
<path d="M355.6,152.6 H358.6" fill="none" stroke="#cfe9ec" stroke-width="0.45"/>
<path d="M362.9,151.0 Q362.9,149.2 364.7,149.2 H367.7 Q369.5,149.2 369.5,151.0 L369.5,152.2 Q369.1,154.5 366.2,156.5 Q363.3,154.5 362.9,152.2Z" fill="#3a9eaa" stroke="#f4f8f8" stroke-width="0.35"/>
<path d="M363.6,151.3 Q366.2,149.9 368.8,151.3" fill="none" stroke="#6dbcc4" stroke-width="0.6"/>
<path d="M364.7,153.4 H367.7" fill="none" stroke="#cfe9ec" stroke-width="0.45"/>
<path d="M373.5,149.5 Q373.5,147.7 375.3,147.7 H378.3 Q380.1,147.7 380.1,149.5 L380.1,150.7 Q379.7,153.0 376.8,155.0 Q373.9,153.0 373.5,150.7Z" fill="#3a9eaa" stroke="#f4f8f8" stroke-width="0.35"/>
<path d="M373.5,151.2 L373.5,149.5 Q373.5,147.7 375.3,147.7 H378.3 Q380.1,147.7 380.1,149.5 L380.1,151.2 Q376.8,152.0 373.5,151.2Z" fill="#f2f7f7"/>
<path d="M375.3,151.9 H378.3" fill="none" stroke="#cfe9ec" stroke-width="0.45"/>
<path d="M389.9,150.2 Q389.9,148.4 391.7,148.4 H394.7 Q396.5,148.4 396.5,150.2 L396.5,151.4 Q396.1,153.7 393.2,155.7 Q390.3,153.7 389.9,151.4Z" fill="#3a9eaa" stroke="#f4f8f8" stroke-width="0.35"/>
<path d="M389.9,151.9 L389.9,150.2 Q389.9,148.4 391.7,148.4 H394.7 Q396.5,148.4 396.5,150.2 L396.5,151.9 Q393.2,152.7 389.9,151.9Z" fill="#f2f7f7"/>
<path d="M391.7,152.6 H394.7" fill="none" stroke="#cfe9ec" stroke-width="0.45"/>
<path d="M400.9,148.9 Q400.9,147.1 402.7,147.1 H405.7 Q407.5,147.1 407.5,148.9 L407.5,150.1 Q407.1,152.4 404.2,154.4 Q401.3,152.4 400.9,150.1Z" fill="#3a9eaa" stroke="#f4f8f8" stroke-width="0.35"/>
<path d="M401.6,149.2 Q404.2,147.8 406.8,149.2" fill="none" stroke="#6dbcc4" stroke-width="0.6"/>
<path d="M402.7,151.3 H405.7" fill="none" stroke="#cfe9ec" stroke-width="0.45"/>
<path d="M377.0,155.3 Q377.0,153.5 378.8,153.5 H381.8 Q383.6,153.5 383.6,155.3 L383.6,156.5 Q383.2,158.8 380.3,160.8 Q377.4,158.8 377.0,156.5Z" fill="#3a9eaa" stroke="#f4f8f8" stroke-width="0.35"/>
<path d="M377.7,155.6 Q380.3,154.2 382.9,155.6" fill="none" stroke="#6dbcc4" stroke-width="0.6"/>
<path d="M378.8,157.7 H381.8" fill="none" stroke="#cfe9ec" stroke-width="0.45"/>
<path d="M384.2,160.2 Q384.2,158.4 386.0,158.4 H389.0 Q390.8,158.4 390.8,160.2 L390.8,161.4 Q390.4,163.7 387.5,165.7 Q384.6,163.7 384.2,161.4Z" fill="#3a9eaa" stroke="#f4f8f8" stroke-width="0.35"/>
<path d="M384.2,161.9 L384.2,160.2 Q384.2,158.4 386.0,158.4 H389.0 Q390.8,158.4 390.8,160.2 L390.8,161.9 Q387.5,162.7 384.2,161.9Z" fill="#f2f7f7"/>
<path d="M386.0,162.6 H389.0" fill="none" stroke="#cfe9ec" stroke-width="0.45"/>
<path d="M400.5,162.1 Q400.5,160.3 402.3,160.3 H405.3 Q407.1,160.3 407.1,162.1 L407.1,163.3 Q406.7,165.6 403.8,167.6 Q400.9,165.6 400.5,163.3Z" fill="#3a9eaa" stroke="#f4f8f8" stroke-width="0.35"/>
<path d="M400.5,163.8 L400.5,162.1 Q400.5,160.3 402.3,160.3 H405.3 Q407.1,160.3 407.1,162.1 L407.1,163.8 Q403.8,164.6 400.5,163.8Z" fill="#f2f7f7"/>
<path d="M402.3,164.5 H405.3" fill="none" stroke="#cfe9ec" stroke-width="0.45"/>
<path d="M346.1,160.8 Q346.1,159.0 347.9,159.0 H350.9 Q352.7,159.0 352.7,160.8 L352.7,162.0 Q352.3,164.3 349.4,166.3 Q346.5,164.3 346.1,162.0Z" fill="#3a9eaa" stroke="#f4f8f8" stroke-width="0.35"/>
<path d="M346.8,161.1 Q349.4,159.7 352.0,161.1" fill="none" stroke="#6dbcc4" stroke-width="0.6"/>
<path d="M347.9,163.2 H350.9" fill="none" stroke="#cfe9ec" stroke-width="0.45"/>
<path d="M392.8,167.2 Q392.8,165.4 394.6,165.4 H397.6 Q399.4,165.4 399.4,167.2 L399.4,168.4 Q399.0,170.7 396.1,172.7 Q393.2,170.7 392.8,168.4Z" fill="#3a9eaa" stroke="#f4f8f8" stroke-width="0.35"/>
<path d="M393.5,167.5 Q396.1,166.1 398.7,167.5" fill="none" stroke="#6dbcc4" stroke-width="0.6"/>
<path d="M394.6,169.6 H397.6" fill="none" stroke="#cfe9ec" stroke-width="0.45"/>
<path d="M374.8,170.3 Q374.8,168.5 376.6,168.5 H379.6 Q381.4,168.5 381.4,170.3 L381.4,171.5 Q381.0,173.8 378.1,175.8 Q375.2,173.8 374.8,171.5Z" fill="#3a9eaa" stroke="#f4f8f8" stroke-width="0.35"/>
<path d="M374.8,172.0 L374.8,170.3 Q374.8,168.5 376.6,168.5 H379.6 Q381.4,168.5 381.4,170.3 L381.4,172.0 Q378.1,172.8 374.8,172.0Z" fill="#f2f7f7"/>
<path d="M376.6,172.7 H379.6" fill="none" stroke="#cfe9ec" stroke-width="0.45"/>
<path d="M350.0,171.4 Q350.0,169.6 351.8,169.6 H354.8 Q356.6,169.6 356.6,171.4 L356.6,172.6 Q356.2,174.9 353.3,176.9 Q350.4,174.9 350.0,172.6Z" fill="#3a9eaa" stroke="#f4f8f8" stroke-width="0.35"/>
<path d="M350.7,171.7 Q353.3,170.3 355.9,171.7" fill="none" stroke="#6dbcc4" stroke-width="0.6"/>
<path d="M351.8,173.8 H354.8" fill="none" stroke="#cfe9ec" stroke-width="0.45"/>
<path d="M357.5,171.1 Q357.5,169.3 359.3,169.3 H362.3 Q364.1,169.3 364.1,171.1 L364.1,172.3 Q363.7,174.6 360.8,176.6 Q357.9,174.6 357.5,172.3Z" fill="#3a9eaa" stroke="#f4f8f8" stroke-width="0.35"/>
<path d="M358.2,171.4 Q360.8,170.0 363.4,171.4" fill="none" stroke="#6dbcc4" stroke-width="0.6"/>
<path d="M359.3,173.5 H362.3" fill="none" stroke="#cfe9ec" stroke-width="0.45"/>
<path d="M322.5,171.8 Q322.5,170.0 324.3,170.0 H327.3 Q329.1,170.0 329.1,171.8 L329.1,173.0 Q328.7,175.3 325.8,177.3 Q322.9,175.3 322.5,173.0Z" fill="#3a9eaa" stroke="#f4f8f8" stroke-width="0.35"/>
<path d="M323.2,172.1 Q325.8,170.7 328.4,172.1" fill="none" stroke="#6dbcc4" stroke-width="0.6"/>
<path d="M324.3,174.2 H327.3" fill="none" stroke="#cfe9ec" stroke-width="0.45"/>
<path d="M360.8,195.0 Q360.8,193.2 362.6,193.2 H365.6 Q367.4,193.2 367.4,195.0 L367.4,196.2 Q367.0,198.5 364.1,200.5 Q361.2,198.5 360.8,196.2Z" fill="#3a9eaa" stroke="#f4f8f8" stroke-width="0.35"/>
<path d="M360.8,196.7 L360.8,195.0 Q360.8,193.2 362.6,193.2 H365.6 Q367.4,193.2 367.4,195.0 L367.4,196.7 Q364.1,197.5 360.8,196.7Z" fill="#f2f7f7"/>
<path d="M362.6,197.4 H365.6" fill="none" stroke="#cfe9ec" stroke-width="0.45"/>
<path d="M395.7,232.4 Q395.7,230.6 397.5,230.6 H400.5 Q402.3,230.6 402.3,232.4 L402.3,233.6 Q401.9,235.9 399.0,237.9 Q396.1,235.9 395.7,233.6Z" fill="#3a9eaa" stroke="#f4f8f8" stroke-width="0.35"/>
<path d="M395.7,234.1 L395.7,232.4 Q395.7,230.6 397.5,230.6 H400.5 Q402.3,230.6 402.3,232.4 L402.3,234.1 Q399.0,234.9 395.7,234.1Z" fill="#f2f7f7"/>
<path d="M397.5,234.8 H400.5" fill="none" stroke="#cfe9ec" stroke-width="0.45"/>
<path d="M420.0,265.6 Q420.0,263.8 421.8,263.8 H424.8 Q426.6,263.8 426.6,265.6 L426.6,266.8 Q426.2,269.1 423.3,271.1 Q420.4,269.1 420.0,266.8Z" fill="#3a9eaa" stroke="#f4f8f8" stroke-width="0.35"/>
<path d="M420.0,267.3 L420.0,265.6 Q420.0,263.8 421.8,263.8 H424.8 Q426.6,263.8 426.6,265.6 L426.6,267.3 Q423.3,268.1 420.0,267.3Z" fill="#f2f7f7"/>
<path d="M421.8,268.0 H424.8" fill="none" stroke="#cfe9ec" stroke-width="0.45"/>
<path d="M384.2,274.6 Q384.2,272.8 386.0,272.8 H389.0 Q390.8,272.8 390.8,274.6 L390.8,275.8 Q390.4,278.1 387.5,280.1 Q384.6,278.1 384.2,275.8Z" fill="#3a9eaa" stroke="#f4f8f8" stroke-width="0.35"/>
<path d="M384.9,274.9 Q387.5,273.5 390.1,274.9" fill="none" stroke="#6dbcc4" stroke-width="0.6"/>
<path d="M386.0,277.0 H389.0" fill="none" stroke="#cfe9ec" stroke-width="0.45"/>
<path d="M277.9,301.0 Q277.9,299.2 279.7,299.2 H282.7 Q284.5,299.2 284.5,301.0 L284.5,302.2 Q284.1,304.5 281.2,306.5 Q278.3,304.5 277.9,302.2Z" fill="#3a9eaa" stroke="#f4f8f8" stroke-width="0.35"/>
<path d="M278.6,301.3 Q281.2,299.9 283.8,301.3" fill="none" stroke="#6dbcc4" stroke-width="0.6"/>
<path d="M279.7,303.4 H282.7" fill="none" stroke="#cfe9ec" stroke-width="0.45"/>
<circle cx="197.2" cy="108.5" r="4.2" fill="#f5c30c"/>
<text x="197.2" y="109.7" font-size="3.4" font-weight="bold" fill="#5a4800" text-anchor="middle" font-family="Liberation Sans">2</text>
<circle cx="297.7" cy="137.3" r="4.2" fill="#f5c30c"/>
<text x="297.7" y="138.5" font-size="3.4" font-weight="bold" fill="#5a4800" text-anchor="middle" font-family="Liberation Sans">3</text>
<circle cx="151.5" cy="282.7" r="4.2" fill="#f5c30c"/>
<text x="151.5" y="283.9" font-size="3.4" font-weight="bold" fill="#5a4800" text-anchor="middle" font-family="Liberation Sans">4</text>
<circle cx="267.1" cy="290.3" r="4.2" fill="#f5c30c"/>
<text x="267.1" y="291.5" font-size="3.4" font-weight="bold" fill="#5a4800" text-anchor="middle" font-family="Liberation Sans">1</text>
<circle cx="356.2" cy="55.9" r="4.2" fill="#f5c30c"/>
<text x="356.2" y="57.1" font-size="3.4" font-weight="bold" fill="#5a4800" text-anchor="middle" font-family="Liberation Sans">5</text>
<circle cx="488.3" cy="41" r="4.8" fill="#f5c30c"/>
<text x="488.3" y="42.2" font-size="3.4" font-weight="bold" fill="#5a4800" text-anchor="middle" font-family="Liberation Sans">54</text>
<circle cx="521" cy="78" r="4.2" fill="#f5c30c"/>
<text x="521" y="79.2" font-size="3.4" font-weight="bold" fill="#5a4800" text-anchor="middle" font-family="Liberation Sans">8</text>
<circle cx="396.3" cy="93.3" r="4.2" fill="#f5c30c"/>
<text x="396.3" y="94.5" font-size="3.4" font-weight="bold" fill="#5a4800" text-anchor="middle" font-family="Liberation Sans">3</text>
<circle cx="389.7" cy="102.7" r="4.2" fill="#f5c30c"/>
<text x="389.7" y="103.9" font-size="3.4" font-weight="bold" fill="#5a4800" text-anchor="middle" font-family="Liberation Sans">1</text>
<circle cx="335.4" cy="108.8" r="4.2" fill="#f5c30c"/>
<text x="335.4" y="110.0" font-size="3.4" font-weight="bold" fill="#5a4800" text-anchor="middle" font-family="Liberation Sans">2</text>
<circle cx="329.4" cy="114.5" r="4.2" fill="#f5c30c"/>
<text x="329.4" y="115.7" font-size="3.4" font-weight="bold" fill="#5a4800" text-anchor="middle" font-family="Liberation Sans">6</text>
<circle cx="359.5" cy="113.4" r="4.2" fill="#f5c30c"/>
<text x="359.5" y="114.60000000000001" font-size="3.4" font-weight="bold" fill="#5a4800" text-anchor="middle" font-family="Liberation Sans">4</text>
<circle cx="356" cy="121" r="4.2" fill="#f5c30c"/>
<text x="356" y="122.2" font-size="3.4" font-weight="bold" fill="#5a4800" text-anchor="middle" font-family="Liberation Sans">3</text>
<circle cx="362.5" cy="123.6" r="4.2" fill="#f5c30c"/>
<text x="362.5" y="124.8" font-size="3.4" font-weight="bold" fill="#5a4800" text-anchor="middle" font-family="Liberation Sans">2</text>
<circle cx="365.2" cy="164.5" r="4.2" fill="#f5c30c"/>
<text x="365.2" y="165.7" font-size="3.4" font-weight="bold" fill="#5a4800" text-anchor="middle" font-family="Liberation Sans">1</text>
<circle cx="316.5" cy="174.4" r="4.2" fill="#f5c30c"/>
<text x="316.5" y="175.6" font-size="3.4" font-weight="bold" fill="#5a4800" text-anchor="middle" font-family="Liberation Sans">9</text>
<circle cx="342.7" cy="180.2" r="4.2" fill="#f5c30c"/>
<text x="342.7" y="181.39999999999998" font-size="3.4" font-weight="bold" fill="#5a4800" text-anchor="middle" font-family="Liberation Sans">5</text>
<circle cx="371" cy="180.2" r="4.2" fill="#f5c30c"/>
<text x="371" y="181.39999999999998" font-size="3.4" font-weight="bold" fill="#5a4800" text-anchor="middle" font-family="Liberation Sans">2</text>
<circle cx="367.8" cy="190" r="4.2" fill="#f5c30c"/>
<text x="367.8" y="191.2" font-size="3.4" font-weight="bold" fill="#5a4800" text-anchor="middle" font-family="Liberation Sans">1</text>
<circle cx="374.5" cy="192.8" r="4.2" fill="#f5c30c"/>
<text x="374.5" y="194.0" font-size="3.4" font-weight="bold" fill="#5a4800" text-anchor="middle" font-family="Liberation Sans">3</text>
<circle cx="358" cy="217" r="4.2" fill="#f5c30c"/>
<text x="358" y="218.2" font-size="3.4" font-weight="bold" fill="#5a4800" text-anchor="middle" font-family="Liberation Sans">8</text>
<circle cx="348.8" cy="219.8" r="4.2" fill="#f5c30c"/>
<text x="348.8" y="221.0" font-size="3.4" font-weight="bold" fill="#5a4800" text-anchor="middle" font-family="Liberation Sans">2</text>
<circle cx="363.1" cy="225.5" r="4.2" fill="#f5c30c"/>
<text x="363.1" y="226.7" font-size="3.4" font-weight="bold" fill="#5a4800" text-anchor="middle" font-family="Liberation Sans">4</text>
<circle cx="386.2" cy="218" r="4.2" fill="#f5c30c"/>
<text x="386.2" y="219.2" font-size="3.4" font-weight="bold" fill="#5a4800" text-anchor="middle" font-family="Liberation Sans">1</text>
<circle cx="370.8" cy="236.3" r="4.2" fill="#f5c30c"/>
<text x="370.8" y="237.5" font-size="3.4" font-weight="bold" fill="#5a4800" text-anchor="middle" font-family="Liberation Sans">3</text>
<circle cx="378.2" cy="246.1" r="4.2" fill="#f5c30c"/>
<text x="378.2" y="247.29999999999998" font-size="3.4" font-weight="bold" fill="#5a4800" text-anchor="middle" font-family="Liberation Sans">2</text>
<circle cx="392.9" cy="257.3" r="4.2" fill="#f5c30c"/>
<text x="392.9" y="258.5" font-size="3.4" font-weight="bold" fill="#5a4800" text-anchor="middle" font-family="Liberation Sans">3</text>
<circle cx="374.8" cy="270.7" r="4.2" fill="#f5c30c"/>
<text x="374.8" y="271.9" font-size="3.4" font-weight="bold" fill="#5a4800" text-anchor="middle" font-family="Liberation Sans">4</text>
<circle cx="397.3" cy="278.8" r="4.2" fill="#f5c30c"/>
<text x="397.3" y="280.0" font-size="3.4" font-weight="bold" fill="#5a4800" text-anchor="middle" font-family="Liberation Sans">1</text>
<circle cx="341.3" cy="287.1" r="4.2" fill="#f5c30c"/>
<text x="341.3" y="288.3" font-size="3.4" font-weight="bold" fill="#5a4800" text-anchor="middle" font-family="Liberation Sans">5</text>
<circle cx="357.2" cy="286.3" r="4.2" fill="#f5c30c"/>
<text x="357.2" y="287.5" font-size="3.4" font-weight="bold" fill="#5a4800" text-anchor="middle" font-family="Liberation Sans">2</text>
<circle cx="371.2" cy="288.5" r="4.2" fill="#f5c30c"/>
<text x="371.2" y="289.7" font-size="3.4" font-weight="bold" fill="#5a4800" text-anchor="middle" font-family="Liberation Sans">8</text>
<rect x="501" y="273.5" width="38.5" height="37.7" rx="1" fill="#fff"/>
<rect x="502" y="274.5" width="36.5" height="35.7" fill="#eeeeee"/>
<path d="M533.7,277 C531,281 528,285 527.8,288 C527.5,292 528,295 524,298.5 C522,301 525,303 528,302.5 C533,300 537,294 538.5,289 L538.5,282 C537,280 535,278 533.7,277Z" fill="#bed1fd"/>
<path d="M502,297.8 L522.8,297.8 C519,299 514,300 512.9,301.8 C512,305 515,308 517.9,310.2 L502,310.2Z" fill="#bed1fd"/>
<rect x="511.9" y="287.9" width="15.9" height="8.7" fill="#f4c9a0" stroke="#eeaa70" stroke-width="0.6"/>
<path d="M535.3,306.8 L538,309.5 M535.3,306.8 h1.6 M535.3,306.8 v1.6" stroke="#111" stroke-width="0.8"/>
</svg>
<div class="abs" style="left:3px;top:7.600000000000001px;width:9.8px;height:83.4px;background:#fff;border-radius:0.8px;box-shadow:0 0 1px rgba(0,0,0,.25)"></div>
<svg class="abs" style="left:3.799999999999997px;top:7.600000000000001px" width="9" height="84" viewBox="0 0 9 84"><path d="M3.3,3.8 H5.7 M4.5,2.6 V5" stroke="#777" stroke-width="0.5"/><path d="M2,6.6 H7" stroke="#ddd" stroke-width="0.4"/><path d="M3.3,8.7 H5.7" stroke="#777" stroke-width="0.5"/><path d="M2,11.3 H7" stroke="#ddd" stroke-width="0.4"/><path d="M3,13.5 L5,13.5 L6,15 L5.5,17 L3.5,17 Z" fill="none" stroke="#777" stroke-width="0.5"/><path d="M2,19.5 H7" stroke="#ddd" stroke-width="0.4"/><path d="M2.8,20.8 H6.2 V25 H2.8Z M3.9,20.8 V25 M5.1,20.8 V25" fill="none" stroke="#777" stroke-width="0.5"/><path d="M2,27.5 H7" stroke="#ddd" stroke-width="0.4"/><path d="M3,29 L6,32 M6,29 L3,32 M2.6,30.5 H6.4" stroke="#999" stroke-width="0.4"/><path d="M2,35 H7" stroke="#ddd" stroke-width="0.4"/><circle cx="4.5" cy="39" r="1.3" fill="none" stroke="#888" stroke-width="0.5"/><path d="M2,43 H7" stroke="#ddd" stroke-width="0.4"/><path d="M3.2,45.5 L5.8,48.3 M5.8,45.5 L3.2,48.3" stroke="#555" stroke-width="0.6"/><path d="M2,51 H7" stroke="#ddd" stroke-width="0.4"/><circle cx="4.2" cy="53.5" r="1.3" fill="none" stroke="#555" stroke-width="0.6"/><path d="M5.1,54.4 L6.3,55.6" stroke="#555" stroke-width="0.6"/><path d="M2,58.5 H7" stroke="#ddd" stroke-width="0.4"/><path d="M2.6,62 L4.5,60 L6.4,62 V63.8 H2.6Z" fill="#444"/><path d="M2,66 H7" stroke="#ddd" stroke-width="0.4"/><rect x="3" y="67.8" width="3" height="3.6" fill="#555"/><path d="M2,73.8 H7" stroke="#ddd" stroke-width="0.4"/><path d="M3,80 V76 H6 V80 M2.5,78 H6.5" fill="none" stroke="#555" stroke-width="0.7"/></svg>
<div class="abs" style="left:14.5px;top:6.200000000000003px;width:88px;height:107.8px;background:#fff;border-radius:1px;box-shadow:0 0 1.5px rgba(0,0,0,.25)"></div>
<div class="abs" style="left:19.5px;top:10.600000000000001px;font-size:2.7px;color:#666;white-space:nowrap;line-height:4px;letter-spacing:0.1px">✓ LEGENDA</div>
<svg class="abs" style="left:94.80000000000001px;top:10.200000000000003px" width="3" height="3" viewBox="0 0 3 3"><path d="M0.4,0.4 L2.6,2.6 M2.6,0.4 L0.4,2.6" stroke="#333" stroke-width="0.8"/></svg>
<div class="abs" style="left:19px;top:17.200000000000003px;width:79px;height:0.7px;background:#9aa3a8"></div>
<div class="abs" style="left:100.80000000000001px;top:34px;width:1.6px;height:52.5px;background:#a9b1b6"></div>
<svg class="abs" style="left:19.799999999999997px;top:23.1px" width="4.8" height="5.8" viewBox="0 0 4.8 5.8"><path d="M0.2,1.4 Q0.2,0.2 1.4,0.2 H3.4 Q4.6,0.2 4.6,1.4 V2.6 Q4.3,3.9 2.4,5.6 Q0.5,3.9 0.2,2.6Z" fill="#3a9eaa"/><path d="M0.2,1.4 Q0.2,0.2 1.4,0.2 H3.4 Q4.6,0.2 4.6,1.4 V2.3 Q2.4,3 0.2,2.3Z" fill="#eef5f6"/></svg>
<div class="abs" style="left:28.799999999999997px;top:25.1px;font-size:2.6px;color:#5c5c5c;white-space:nowrap;line-height:4px">OCUPAÇÃO 30%</div>
<svg class="abs" style="left:19.799999999999997px;top:33.2px" width="4.8" height="5.8" viewBox="0 0 4.8 5.8"><path d="M0.2,1.4 Q0.2,0.2 1.4,0.2 H3.4 Q4.6,0.2 4.6,1.4 V2.6 Q4.3,3.9 2.4,5.6 Q0.5,3.9 0.2,2.6Z" fill="#3a9eaa"/></svg>
<div class="abs" style="left:28.799999999999997px;top:35.2px;font-size:2.6px;color:#5c5c5c;white-space:nowrap;line-height:4px">OCUPAÇÃO 70%</div>
<svg class="abs" style="left:19.799999999999997px;top:43.2px" width="4.8" height="5.8" viewBox="0 0 4.8 5.8"><path d="M0.2,1.4 Q0.2,0.2 1.4,0.2 H3.4 Q4.6,0.2 4.6,1.4 V2.6 Q4.3,3.9 2.4,5.6 Q0.5,3.9 0.2,2.6Z" fill="#3a9eaa"/></svg>
<div class="abs" style="left:28.799999999999997px;top:45.2px;font-size:2.6px;color:#5c5c5c;white-space:nowrap;line-height:4px">OCUPAÇÃO 100%</div>
<div class="abs" style="left:19.0px;top:55.849999999999994px;width:6.4px;height:1.5px;background:#f5e11e"></div>
<div class="abs" style="left:28.799999999999997px;top:56.0px;font-size:2.6px;color:#5c5c5c;white-space:nowrap;line-height:4px">TRÂNSITO LEVE</div>
<div class="abs" style="left:19.0px;top:65.65px;width:6.4px;height:1.5px;background:#f5a032"></div>
<div class="abs" style="left:28.799999999999997px;top:65.80000000000001px;font-size:2.6px;color:#5c5c5c;white-space:nowrap;line-height:4px">TRÂNSITO MODERADO</div>
<div class="abs" style="left:19.0px;top:75.75px;width:6.4px;height:1.5px;background:#e32b2b"></div>
<div class="abs" style="left:28.799999999999997px;top:75.9px;font-size:2.6px;color:#5c5c5c;white-space:nowrap;line-height:4px">TRÂNSITO PESADO</div>
<div class="abs" style="left:19.0px;top:85.55px;width:6.4px;height:1.5px;background:#9c6b3c"></div>
<div class="abs" style="left:28.799999999999997px;top:85.7px;font-size:2.6px;color:#5c5c5c;white-space:nowrap;line-height:4px">TRÂNSITO MUITO INTENSO</div>
<svg class="abs" style="left:19.200000000000003px;top:95.70000000000002px" width="6" height="1.2" viewBox="0 0 6 1.2"><path d="M0,0.6 H6" stroke="#e53b3b" stroke-width="0.7" stroke-dasharray="1.3 0.8"/></svg>
<div class="abs" style="left:28.799999999999997px;top:95.70000000000002px;font-size:2.6px;color:#5c5c5c;white-space:nowrap;line-height:4px">ENGARRAFAMENTO DE TRÂNSITO</div>
<svg class="abs" style="left:19.900000000000006px;top:104.6px" width="4.6" height="5.6" viewBox="0 0 4.6 5.6"><path d="M0.1,2.3 A2.2,2.2 0 1 1 4.5,2.3 Q4.3,3.7 2.3,5.5 Q0.3,3.7 0.1,2.3Z" fill="#1f2b5c"/></svg>
<div class="abs" style="left:28.799999999999997px;top:106.1px;font-size:2.6px;color:#5c5c5c;white-space:nowrap;line-height:4px">CUBO</div>
<div class="abs" style="left:478.6px;top:3.799999999999997px;width:12px;height:4.6px;background:#fff;border-radius:0.5px"></div>
<div class="abs" style="left:481px;top:4.799999999999997px;font-size:2.4px;color:#333;line-height:3px">1</div>
<div class="abs" style="left:485.1px;top:10.700000000000003px;width:5.5px;height:5.5px;background:#fff"></div>
<svg class="abs" style="left:485.1px;top:10.700000000000003px" width="5.5" height="5.5" viewBox="0 0 5.5 5.5"><path d="M1,1 V4.5 H4.5" stroke="#111" stroke-width="0.7" fill="none"/></svg>
<div class="abs" style="left:485.1px;top:18px;width:5.5px;height:6px;background:#fff"></div>
<div class="abs" style="left:485.1px;top:26px;width:5.5px;height:45px;background:#fff"></div>
<svg class="abs" style="left:485.1px;top:18px" width="5.5" height="53" viewBox="0 0 5.5 53"><path d="M1.5,3 H4" stroke="#777" stroke-width="0.5"/><path d="M1.5,13 L4,10" stroke="#444" stroke-width="0.5"/><circle cx="2.75" cy="17" r="0.9" fill="#444"/><circle cx="2.75" cy="21.5" r="0.9" fill="#444"/><circle cx="2.75" cy="26" r="0.9" fill="#444"/><circle cx="2.75" cy="30.5" r="0.9" fill="#444"/><circle cx="2.75" cy="35" r="0.9" fill="none" stroke="#666" stroke-width="0.4"/><path d="M1.7,41.5 L3.8,39.5" stroke="#666" stroke-width="0.5"/><rect x="1.9" y="45" width="1.7" height="1.8" fill="#777"/></svg>
<div class="abs" style="left:2px;top:257.6px;font-size:2.6px;color:#333;white-space:nowrap;line-height:3px;letter-spacing:0.1px">©, ESRI-HERE, GARMIN, © OPENSTREETMAP | Zoom: 14</div>
<div class="abs" style="left:1.2999999999999972px;top:264.3px;width:14.4px;height:4.3px;background:#fafafa;border:0.5px solid #8a8a8a;font-size:2.8px;line-height:3.2px;color:#222;padding-left:1.2px">1:70000</div>
<div class="abs" style="left:1.2999999999999972px;top:269.8px;width:20.2px;height:4.5px;background:rgba(255,255,255,.6);border:0.5px solid #9a9a9a;border-top:none;font-size:2.8px;line-height:3.6px;color:#222;padding-left:1.5px">500 m</div>
<!--/MAP--></div>
<div id="rp" class="abs"><!--RP-->
<div class="abs" style="left:0;top:0px;width:223px;height:17.8px;background:#1f818d"></div>
<div class="abs" style="left:7px;top:5.299999999999997px;font-size:6px;font-weight:bold;color:#fff;line-height:7px;white-space:nowrap;letter-spacing:-0.2px;transform:scaleX(0.84);transform-origin:0 0">LOCALIZAÇÃO</div>
<svg class="abs" style="left:186.5px;top:5.600000000000001px" width="36" height="6" viewBox="0 0 36 6">
<rect x="0.6" y="2" width="5.2" height="2.6" rx="0.8" fill="#fff"/><rect x="1.6" y="0.6" width="3.2" height="1.6" fill="#fff"/><rect x="1.6" y="3.8" width="3.2" height="1.7" fill="#e8f2f3" stroke="#1f818d" stroke-width="0.3"/>
<path d="M9.3,2 H10.6 L11.1,1.4 H12.1 L12.6,2 H13.7 V4.9 H9.3Z" fill="#fff"/><circle cx="11.5" cy="3.4" r="0.8" fill="#1f818d"/>
<path d="M18.9,2 A1.9,1.9 0 0 0 15.7,2.4 M16.1,4.2 A1.9,1.9 0 0 0 19.3,3.8" fill="none" stroke="#fff" stroke-width="0.75"/><path d="M18.2,1 L19.4,2.1 L18,2.6Z M16.8,5.2 L15.6,4.1 L17,3.6Z" fill="#fff"/>
<path d="M21.6,3.1 H25.4" stroke="#fff" stroke-width="0.9"/>
<path d="M26.8,0.7 L28.4,2.3 M31.2,0.7 L29.6,2.3 M26.8,5.3 L28.4,3.7 M31.2,5.3 L29.6,3.7" stroke="#fff" stroke-width="0.7"/><path d="M28.6,2.5 H27.4 V1.3Z M29.4,2.5 H30.6 V1.3Z M28.6,3.5 H27.4 V4.7Z M29.4,3.5 H30.6 V4.7Z" fill="#fff"/>
</svg>
<svg class="abs" style="left:0;top:17.8px" width="223" height="89.4" viewBox="543 55.8 223 89.4">
<rect x="543" y="55.8" width="223" height="89.4" fill="#e6e6e6"/>
<polygon points="543,123 631,111 719,109 766,102 766,145.2 543,145.2" fill="#eeeeee"/>
<polygon points="725,55.8 766,55.8 766,102 719,109" fill="#ececec"/>
<polygon points="680.8,145.2 700,130 724.8,116.6 766,113.6 766,145.2" fill="#dde8d7"/>
<path d="M592.8,80 L606,55.8 M596,81 L609,55.8 M601.6,84.3 L710,59.4 M600,80 L706,56.5 M701.4,55.8 L707.2,90.2 M704.5,55.8 L710,88 M707.2,90.2 Q712,93 714,88 M592.8,80 Q596,86 601.6,84.3" fill="none" stroke="#d0d0d0" stroke-width="0.55"/>
<path d="M569.4,55.8 C574,75 572,100 569.4,113.6 C566,124 556,131 543,137" fill="none" stroke="#fafafa" stroke-width="2"/>
<path d="M543,122.4 C580,117 610,111 650,110 C690,109 730,107 766,102" fill="none" stroke="#fafafa" stroke-width="2.2"/>
<path d="M543,126 C590,121 640,114 700,113 C730,112 750,110 766,108" fill="none" stroke="#f6f6f6" stroke-width="1"/>
<path d="M724.8,55.8 C723,80 722,100 719,109 C716,125 718,135 719,145.2" fill="none" stroke="#fafafa" stroke-width="1.8"/>
<path d="M766,70 C745,85 730,100 719,109 M740,145 C738,130 745,118 766,112 M650,110 C660,120 670,135 675,145" fill="none" stroke="#f8f8f8" stroke-width="1.3"/>
<path d="M590,112 C600,108 640,104 700,106" fill="none" stroke="#f5f5f5" stroke-width="1.5"/>
<path d="M623.3 135.2h3.8v1.9h-2.5zM642.2 127.7h2.5v2.3h-3.4zM573.2 130.1h1.3v2.6h-3.1zM565.9 143.6h3.9v2.3h-2.8zM582.0 124.3h2.6v1.1h-1.6zM593.9 124.6h2.4v1.9h-3.5zM632.7 136.8h2.5v2.3h-2.4zM598.9 144.0h4.0v2.7h-3.1zM604.1 128.6h1.9v1.1h-3.3zM616.1 140.9h2.2v2.9h-3.5zM560.1 128.2h3.7v1.9h-3.9zM615.6 125.5h2.9v2.6h-1.8zM572.2 130.7h3.9v2.5h-1.4zM594.5 126.0h1.2v2.6h-1.5zM638.3 132.9h1.6v2.5h-1.4zM650.1 126.3h2.3v1.4h-1.8zM695.9 140.1h1.9v2.8h-1.6zM615.2 141.1h2.9v1.2h-4.0zM589.9 129.2h3.3v1.7h-1.9zM570.3 125.8h2.7v1.5h-2.8zM612.0 133.1h3.9v2.0h-2.7zM681.3 127.7h1.5v2.8h-3.5zM594.9 127.8h3.2v2.9h-1.6zM693.0 141.6h2.8v1.8h-1.3zM565.4 143.3h1.7v2.4h-1.8zM675.3 135.9h1.9v1.4h-3.2zM569.6 128.6h2.7v2.7h-2.8zM599.2 142.3h1.6v1.0h-1.8zM622.4 125.2h1.5v1.7h-2.7zM578.4 131.2h3.7v3.0h-3.0zM656.8 135.7h1.4v1.1h-1.1zM687.4 138.0h3.9v1.0h-2.9zM627.5 138.6h2.0v3.0h-1.2zM636.5 138.7h3.7v2.5h-3.1zM671.1 142.3h2.1v2.4h-3.7zM682.0 132.3h3.4v2.7h-2.7zM647.5 131.6h2.7v2.2h-1.2zM649.5 143.9h3.6v2.5h-2.2zM662.9 135.6h2.3v2.7h-1.3zM665.0 124.6h2.8v2.0h-1.7zM657.8 133.9h2.8v2.8h-1.8zM561.6 130.0h3.0v1.4h-1.5zM686.8 137.2h2.3v2.8h-2.0zM653.2 128.0h2.3v2.6h-3.7zM683.2 131.7h2.7v1.6h-1.4zM629.5 140.7h3.5v2.4h-3.9zM598.8 127.4h2.4v1.6h-1.6zM618.0 136.5h2.5v1.6h-3.5zM697.5 133.0h1.2v1.1h-3.6zM565.8 138.2h2.7v1.6h-3.4zM562.7 126.7h2.4v1.0h-3.5zM593.2 126.8h1.1v2.3h-2.3zM648.2 137.1h3.4v2.9h-3.1zM587.9 133.5h1.5v1.0h-2.4zM660.0 127.6h1.8v1.7h-3.1zM632.9 136.3h3.3v1.8h-3.4zM686.9 125.7h3.8v2.4h-1.4zM623.5 136.5h3.7v1.8h-2.7zM683.1 139.9h3.8v1.9h-3.0zM588.7 138.4h3.5v2.3h-3.2zM589.9 142.0h3.9v3.0h-2.6zM670.7 130.4h3.7v2.7h-2.0zM571.6 132.8h2.7v2.5h-2.5zM564.0 140.2h1.2v2.6h-1.5zM606.9 139.8h1.4v1.3h-2.5zM661.3 140.8h3.1v2.9h-2.5zM692.9 125.7h1.7v2.1h-1.9zM662.0 136.8h2.6v2.7h-2.7zM603.6 131.6h3.5v2.8h-1.6zM679.1 143.4h2.6v2.1h-1.6zM635.0 134.1h2.8v1.1h-3.9zM632.2 132.0h3.4v2.1h-2.5zM656.7 125.3h2.6v1.8h-3.9zM689.3 129.4h2.4v1.3h-2.3zM674.2 142.0h2.4v1.6h-1.6zM646.5 142.5h1.4v2.6h-1.1zM587.2 128.5h3.1v1.6h-2.1zM646.8 126.1h3.2v1.2h-2.5zM595.1 128.0h2.6v1.9h-2.1zM617.9 134.6h1.5v1.4h-2.9z" fill="#e0e0e0"/>
<path d="M752.3 89.8l2.1 2.8M760.6 72.0l1.4 3.4M762.3 77.0l-1.1 3.8M736.3 117.9l2.3 1.4M737.1 101.6l-1.4 1.3M759.6 83.3l1.7 1.4M743.3 99.1l-2.9 1.6M753.9 112.7l2.8 1.3M747.2 103.5l0.0 3.1M735.2 62.2l-2.4 1.1M749.0 88.9l0.4 1.4M735.0 70.2l2.0 4.0M763.2 63.7l-2.6 3.9M745.6 103.9l-1.0 2.4M747.6 83.8l0.6 1.0M754.6 108.7l-1.9 2.4M756.1 82.3l-1.8 1.5M747.5 58.9l2.4 3.4M754.8 109.6l0.8 2.2M750.8 88.3l2.9 3.4M737.8 112.7l1.5 3.3M759.0 82.3l2.4 3.6M754.4 104.0l1.6 2.2M755.5 62.2l-0.9 2.4M728.4 79.3l0.8 2.9M736.8 114.7l1.0 2.0M753.1 92.2l0.2 2.2M766.0 96.5l1.2 3.3M765.2 59.4l0.7 3.2M737.8 82.1l-2.7 1.6M742.3 63.9l-1.5 3.7M748.9 88.5l2.8 2.7M765.8 96.3l1.9 1.2M750.7 103.6l-2.7 3.8M734.1 86.3l-2.0 2.5M751.2 61.5l2.7 2.3M748.0 93.9l-0.8 1.9M752.9 91.6l-1.3 3.1M739.2 58.8l-1.5 1.1M734.0 103.3l-0.7 3.7M756.4 61.0l2.9 3.8M730.8 112.3l-0.4 2.4M765.0 72.6l0.1 3.8M755.5 86.1l2.9 3.5M750.9 64.9l0.7 2.4M735.7 61.1l0.2 1.4M744.8 98.1l-0.3 1.8M750.1 83.2l1.7 2.6M765.9 115.2l1.4 1.7M732.3 111.6l1.7 2.9M741.6 74.3l1.1 2.7M750.5 96.0l1.5 1.6M737.5 116.8l2.5 3.6M729.5 61.6l-1.4 2.3M751.7 64.1l0.2 1.2M731.3 98.6l0.3 2.9M742.2 86.7l-1.7 2.0M756.3 108.3l-2.6 1.4M758.7 95.4l1.6 1.6M744.1 73.5l1.9 2.1" stroke="#d4d4d4" stroke-width="0.6"/>
<rect x="551.8" y="55.8" width="7" height="6.5" fill="#e9eedc"/>
<path d="M655.2,101.9 A5.1,5.1 0 1 1 665.4,101.9 Q665,105 660.3,109.6 Q655.6,105 655.2,101.9Z" fill="#9e2b2e"/>
<circle cx="660.3" cy="101.4" r="1.8" fill="none" stroke="#d88" stroke-width="0.5"/>
<ellipse cx="660.3" cy="110.2" rx="3" ry="0.8" fill="#cfcfcf"/>
<circle cx="687.3" cy="123" r="2.4" fill="#d9475a"/><path d="M687.3,121.8 v1.8" stroke="#fff" stroke-width="0.5"/>
<circle cx="693.1" cy="126.8" r="2.6" fill="#2a55a6"/><circle cx="693.1" cy="126.8" r="1.5" fill="none" stroke="#e0e6f4" stroke-width="0.5"/>
</svg>
<div class="abs" style="left:1.5px;top:28.700000000000003px;width:19px;height:46.89999999999999px;background:#fff;border-radius:1.5px;box-shadow:0 0 1px rgba(0,0,0,.15)"></div>
<svg class="abs" style="left:1.5px;top:28.700000000000003px" width="19" height="47" viewBox="0 0 19 47"><path d="M7.6,11.2 H11.4 M9.5,9.3 V13.1" stroke="#666" stroke-width="0.6"/><path d="M3.5,16.2 H15.5 M3.5,27.3 H15.5" stroke="#ddd" stroke-width="0.5"/><path d="M7.8,22 H11.2" stroke="#666" stroke-width="0.6"/><path d="M7,34.4 V33 H8.4 M10.6,33 H12 V34.4 M12,37 V38.4 H10.6 M8.4,38.4 H7 V37" fill="none" stroke="#444" stroke-width="0.6"/></svg>
<div class="abs" style="left:0;top:107.19999999999999px;width:223px;height:1.4px;background:#3b4044"></div>
<div class="abs" style="left:0;top:108.5px;width:223px;height:12.099999999999994px;background:#1f818d"></div>
<div class="abs" style="left:6.2000000000000455px;top:111.30000000000001px;font-size:5.6px;font-weight:bold;color:#fff;line-height:7px;white-space:nowrap;transform:scaleX(0.81);transform-origin:0 0">VÍDEO</div>
<svg class="abs" style="left:186.5px;top:111.5px" width="36" height="6" viewBox="0 0 36 6">
<rect x="0.6" y="2" width="5.2" height="2.6" rx="0.8" fill="#fff"/><rect x="1.6" y="0.6" width="3.2" height="1.6" fill="#fff"/><rect x="1.6" y="3.8" width="3.2" height="1.7" fill="#e8f2f3" stroke="#1f818d" stroke-width="0.3"/>
<path d="M9.3,2 H10.6 L11.1,1.4 H12.1 L12.6,2 H13.7 V4.9 H9.3Z" fill="#fff"/><circle cx="11.5" cy="3.4" r="0.8" fill="#1f818d"/>
<path d="M18.9,2 A1.9,1.9 0 0 0 15.7,2.4 M16.1,4.2 A1.9,1.9 0 0 0 19.3,3.8" fill="none" stroke="#fff" stroke-width="0.75"/><path d="M18.2,1 L19.4,2.1 L18,2.6Z M16.8,5.2 L15.6,4.1 L17,3.6Z" fill="#fff"/>
<path d="M21.6,3.1 H25.4" stroke="#fff" stroke-width="0.9"/>
<path d="M26.8,0.7 L28.4,2.3 M31.2,0.7 L29.6,2.3 M26.8,5.3 L28.4,3.7 M31.2,5.3 L29.6,3.7" stroke="#fff" stroke-width="0.7"/><path d="M28.6,2.5 H27.4 V1.3Z M29.4,2.5 H30.6 V1.3Z M28.6,3.5 H27.4 V4.7Z M29.4,3.5 H30.6 V4.7Z" fill="#fff"/>
</svg>
<div class="abs" style="left:0;top:120.6px;width:223px;height:5px;background:#fff"></div>
<div class="abs" style="left:0;top:125.5px;width:223px;height:1.4px;background:#3b4044"></div>
<div class="abs" style="left:0;top:107.19999999999999px;width:0.8px;height:167.8px;background:#3b4044"></div>
<div class="abs" style="left:222.20000000000005px;top:125.5px;width:0.8px;height:149.5px;background:#3b4044"></div>
<svg class="abs" style="left:0.8px;top:126.5px" width="221.4" height="148.5" viewBox="543.8 164.5 221.4 148.5">
<defs><linearGradient id="sky" x1="0" y1="0" x2="0" y2="1"><stop offset="0" stop-color="#cddff0"/><stop offset="1" stop-color="#edf1f4"/></linearGradient></defs>
<rect x="543" y="164" width="223" height="149" fill="#868682"/>
<rect x="543" y="164.5" width="223" height="27" fill="url(#sky)"/>
<ellipse cx="560" cy="172" rx="12" ry="3" fill="#f2f5f8"/><ellipse cx="620" cy="177" rx="16" ry="3" fill="#eef2f6"/><ellipse cx="745" cy="170" rx="15" ry="3.5" fill="#f2f5f7"/><ellipse cx="700" cy="175" rx="14" ry="2.5" fill="#edf1f4"/>
<rect x="543" y="189" width="223" height="11" fill="#9d9e94"/>
<rect x="580" y="190" width="35" height="3" fill="#7f817a"/><rect x="620" y="188" width="40" height="6" fill="#7e8474"/><rect x="550" y="192" width="20" height="3" fill="#c8c8c2"/>
<polygon points="543,198 700,196 690,204 652.4,206 587.5,204.3 543,215" fill="#a9a68c"/>
<ellipse cx="625" cy="203" rx="14" ry="6" fill="#6f745e"/><ellipse cx="560" cy="205" rx="10" ry="4" fill="#7c7e6c"/>
<polygon points="543,222 587.5,203 597,203 555,225 543,233" fill="#c3c1bb"/>
<polygon points="543,233 555,225 597,203 652.4,206 642,211 543,247" fill="#a8a486"/>
<polygon points="543,247 642,211 652.4,206 686.6,204 660,218 642,238.5 550,298.4 543,302" fill="#7b7b7b"/>
<polygon points="543,302 550,298.4 642,238.5 660,218 686.6,204 689,205 664,221 646,242 556,304 543,313" fill="#b1ad9c"/>
<path d="M550,298.4 L642,238.5 L686.6,205" fill="none" stroke="#d0ccbe" stroke-width="0.8"/>
<polygon points="543,313 556,304 646,242 664,221 689,205 714,199 717.4,313" fill="#888888"/>
<path d="M600,313 L680,230 M650,313 L700,220" stroke="#9c9c9c" stroke-width="0.6" stroke-dasharray="4 5"/>
<polygon points="684,313 706,268 716.5,268 717.4,313" fill="#7e7e7e"/>
<polygon points="714,199 740,190 766,186 766,313 717.4,313" fill="#7f8a5e"/>
<ellipse cx="742" cy="214" rx="10" ry="6" fill="#6a7550"/><ellipse cx="752" cy="262" rx="8" ry="12" fill="#6c7650"/><ellipse cx="730" cy="292" rx="8" ry="10" fill="#66704e"/><ellipse cx="758" cy="198" rx="9" ry="4" fill="#98a07c"/><ellipse cx="752" cy="238" rx="9" ry="7" fill="#95a274"/><ellipse cx="735" cy="250" rx="6" ry="8" fill="#758055"/>
<path d="M722.5,178.7 C718,192 719,203 722.5,212 C726,203 727,192 722.5,178.7Z" fill="#7a786e"/>
<path d="M722,212 V313 M637,209 V238.5 M544,257 L550,298" stroke="#55554f" stroke-width="0.6"/>
<rect x="686.6" y="195.8" width="13.7" height="5.1" fill="#4d8bb0"/>
<path d="M574,250 L580,245 L588,245 L586,250 L576,252Z" fill="#e2e2e2"/>
<path d="M582,257 L588,251 L598,250 L596,255 L585,259Z" fill="#3f4a45"/>
<polygon points="649,226 661,222 664.4,233 652,237" fill="#f0f2f4"/><polygon points="649,226 652,237 649,238 647,229" fill="#5aa3c8"/>
<polygon points="654.2,256 664,253.9 666.8,261 657,263" fill="#dcb840"/><polygon points="642.2,274 648,262.5 664.4,263 659,276.2" fill="#e4e0d8"/>
<rect x="676" y="224.5" width="5" height="3" fill="#e0e0e0"/><rect x="692.5" y="226" width="5" height="3" fill="#3d5a48"/><rect x="691" y="233.5" width="5" height="3" fill="#333"/><rect x="708" y="225" width="5" height="3" fill="#e8e8e8"/><rect x="693" y="218.5" width="4" height="2.5" fill="#555"/><rect x="683" y="210" width="3" height="2" fill="#444"/>
<rect x="646" y="219" width="25.3" height="20.9" fill="none" stroke="#d6181b" stroke-width="2"/>
<polygon points="645,236.8 657.6,245.6 645,254.6" fill="#000"/>
<rect x="543.8" y="302" width="130.4" height="9.2" fill="#000"/>
<text x="544.8" y="309.6" font-family="Liberation Sans" font-weight="bold" font-size="8" fill="#fff" textLength="129" lengthAdjust="spacingAndGlyphs" xml:space="preserve">024 - Segunda Circular  (Calvan</text>
</svg>
<!--/RP--></div>
<div id="mon" class="abs"><!--MON-->
<div class="abs" style="left:0;top:0;width:717px;height:12.5px;background:#1f818d"></div>
<div class="abs" style="left:5.8px;top:2.6px;font-size:6.3px;font-weight:bold;color:#fff;line-height:7px;white-space:nowrap;transform:scaleX(0.9);transform-origin:0 0">MONITORIZAÇÃO</div>
<svg class="abs" style="left:687px;top:3.2px" width="26" height="6" viewBox="0 0 26 6"><path d="M1.2,0.6 H4.6 L5.6,1.6 V5.4 H1.2Z" fill="#fff"/><rect x="2.2" y="0.8" width="2" height="1.4" fill="#1f818d"/><rect x="2.2" y="3.4" width="2.6" height="1.6" fill="#1f818d"/><path d="M11.2,3 H14.6" stroke="#fff" stroke-width="1"/><path d="M18.6,0.8 L19.8,2 M22.6,0.8 L21.4,2 M18.6,5.2 L19.8,4 M22.6,5.2 L21.4,4 M18.6,0.8 H19.6 M18.6,0.8 V1.8 M22.6,0.8 H21.6 M22.6,0.8 V1.8 M18.6,5.2 H19.6 M18.6,5.2 V4.2 M22.6,5.2 H21.6 M22.6,5.2 V4.2" stroke="#fff" stroke-width="0.7" fill="none"/></svg>
<div class="abs" style="left:429.8px;top:16.4px;width:42px;height:10.6px;background:#e4eff2;border-radius:1px"></div>
<div class="abs" style="left:437px;top:19px;font-size:4.6px;font-weight:bold;color:#4b8794;line-height:5px;letter-spacing:0.1px">FILTRO</div>
<svg class="abs" style="left:457.8px;top:19.6px" width="5.4" height="5" viewBox="0 0 5.4 5"><path d="M0.2,0.3 H5.2 L3.2,2.6 V4.8 L2.2,4.2 V2.6Z" fill="#2f8d99"/></svg>
<div class="abs" style="left:483.9px;top:16.4px;width:226.70000000000005px;height:10.6px;border:0.6px solid #d9dde0;background:#fff"></div>
<div class="abs" style="left:489.8px;top:18.8px;font-size:5.3px;color:#6b6b6b;line-height:6px;white-space:nowrap">Pesquisar por palavra-chave</div>
<div class="abs" style="left:6.1px;top:34px;width:28.6px;height:12px;background:#e4eff2"></div>
<div class="abs" style="left:47.3px;top:34px;width:28.6px;height:12px;background:#e4eff2"></div>
<svg class="abs" style="left:18.5px;top:37.5px" width="4" height="5" viewBox="0 0 4 5"><path d="M3,0.6 L1,2.5 L3,4.4" fill="none" stroke="#2a6f7c" stroke-width="1.3"/></svg>
<svg class="abs" style="left:59.6px;top:37.5px" width="4" height="5" viewBox="0 0 4 5"><path d="M1,0.6 L3,2.5 L1,4.4" fill="none" stroke="#2a6f7c" stroke-width="1.3"/></svg>
<div class="abs" style="left:346.3px;top:36.6px;font-size:6.6px;font-weight:bold;color:#3a3a3a;line-height:7.5px;white-space:nowrap">17 DE OUTUBRO DE 2019</div>
<div class="abs" style="left:7.9px;top:60.3px;font-size:5.9px;color:#5b5b5b;line-height:6.6px;white-space:nowrap">Actividades - Apoio Social Monitorização</div>
<div class="abs" style="left:6.3px;top:68.3px;width:283.09999999999997px;height:0.5px;background:#e4e4e4"></div>
<div class="abs" style="left:20.7px;top:71.4px;font-size:5.9px;color:#5b5b5b;line-height:6.6px;white-space:nowrap">62887/O/2019(1353817102019) - 7500 -</div>
<div class="abs" style="left:7.9px;top:77.7px;font-size:5.9px;color:#5b5b5b;line-height:6.6px;white-space:nowrap">Serviços - Fecho de Água</div>
<div class="abs" style="left:122.9px;top:71.4px;width:80px;text-align:center;font-size:5.9px;color:#5b5b5b;line-height:6.6px;white-space:nowrap">RSB</div>
<div class="abs" style="left:180.3px;top:71.4px;width:80px;text-align:center;font-size:5.9px;color:#5b5b5b;line-height:6.6px;white-space:nowrap">Acionada</div>
<div class="abs" style="left:6.3px;top:86.4px;width:283.09999999999997px;height:0.5px;background:#e4e4e4"></div>
<div class="abs" style="left:20.7px;top:89.0px;font-size:5.9px;color:#5b5b5b;line-height:6.6px;white-space:nowrap">62878/O/2019(1352917102019) - 6401 -</div>
<div class="abs" style="left:7.9px;top:95.2px;font-size:5.9px;color:#5b5b5b;line-height:6.6px;white-space:nowrap">Tecnológicos Industriais - Situações Suspeitas</div>
<div class="abs" style="left:7.9px;top:101.8px;font-size:5.9px;color:#5b5b5b;line-height:6.6px;white-space:nowrap">- Verificar Fumos</div>
<div class="abs" style="left:122.9px;top:89.0px;width:80px;text-align:center;font-size:5.9px;color:#5b5b5b;line-height:6.6px;white-space:nowrap">RSB</div>
<div class="abs" style="left:180.3px;top:89.0px;width:80px;text-align:center;font-size:5.9px;color:#5b5b5b;line-height:6.6px;white-space:nowrap">Fecho Operacional</div>
<div class="abs" style="left:267px;top:90px;width:3.6px;height:3.6px;border-radius:50%;background:#f39a1e"></div>
<div class="abs" style="left:6.3px;top:110.5px;width:283.09999999999997px;height:0.5px;background:#e4e4e4"></div>
<div class="abs" style="left:20.7px;top:112.4px;font-size:5.9px;color:#5b5b5b;line-height:6.6px;white-space:nowrap">62877/O/2019(1352817102019) - 7101 -</div>
<div class="abs" style="left:122.9px;top:112.4px;width:80px;text-align:center;font-size:5.9px;color:#5b5b5b;line-height:6.6px;white-space:nowrap">RSB</div>
<div class="abs" style="left:180.3px;top:112.4px;width:80px;text-align:center;font-size:5.9px;color:#5b5b5b;line-height:6.6px;white-space:nowrap">Fecho Operacional</div>
<div class="abs" style="left:134.5px;top:53.3px;width:0.5px;height:65.69999999999999px;background:#e6e6e6"></div>
<div class="abs" style="left:191.3px;top:53.3px;width:0.5px;height:65.69999999999999px;background:#e6e6e6"></div>
<div class="abs" style="left:248.7px;top:53.3px;width:0.5px;height:65.69999999999999px;background:#e6e6e6"></div>
<div class="abs" style="left:6.3px;top:53.2px;width:283.09999999999997px;height:9px;background:#fff;border:0.5px solid #e0e0e0"></div>
<div class="abs" style="left:134.5px;top:53.2px;width:0.5px;height:9px;background:#e0e0e0"></div>
<div class="abs" style="left:191.3px;top:53.2px;width:0.5px;height:9px;background:#e0e0e0"></div>
<div class="abs" style="left:248.7px;top:53.2px;width:0.5px;height:9px;background:#e0e0e0"></div>
<div class="abs" style="left:15.8px;top:54.7px;font-size:5.9px;color:#5b5b5b;line-height:6.6px;white-space:nowrap">Descrição</div>
<div class="abs" style="left:138px;top:54.7px;font-size:5.9px;color:#5b5b5b;line-height:6.6px;white-space:nowrap">Entidade gestora</div>
<div class="abs" style="left:195.2px;top:54.7px;font-size:5.9px;color:#5b5b5b;line-height:6.6px;white-space:nowrap">Estado</div>
<div class="abs" style="left:252.4px;top:54.7px;font-size:5.9px;color:#5b5b5b;line-height:6.6px;white-space:nowrap">Nível</div>
<div class="abs" style="left:6.3px;top:62.2px;width:0.5px;height:56.80000000000001px;background:#e6e6e6"></div>
<div class="abs" style="left:289.2px;top:53.2px;width:1.6px;height:65.80000000000001px;background:#c9c9c9"></div>
<div class="abs" style="left:290.8px;top:53.2px;width:419.8px;height:9.6px;border:0.5px solid #e2e2e2;border-left:none"></div>
<div class="abs" style="left:303.3px;top:53.2px;width:0.5px;height:9.6px;background:#e2e2e2"></div>
<div class="abs" style="left:303.3px;top:62.8px;width:0.5px;height:53.19999999999999px;background:#ececec"></div>
<div class="abs" style="left:316.03px;top:62.8px;width:0.5px;height:53.19999999999999px;background:#f3f3f3"></div>
<div class="abs" style="left:305.3px;top:55px;font-size:5.9px;color:#5b5b5b;line-height:6.6px;white-space:nowrap;font-size:5.75px">08:00</div>
<div class="abs" style="left:328.75px;top:53.2px;width:0.5px;height:9.6px;background:#e2e2e2"></div>
<div class="abs" style="left:328.75px;top:62.8px;width:0.5px;height:53.19999999999999px;background:#ececec"></div>
<div class="abs" style="left:341.48px;top:62.8px;width:0.5px;height:53.19999999999999px;background:#f3f3f3"></div>
<div class="abs" style="left:330.75px;top:55px;font-size:5.9px;color:#5b5b5b;line-height:6.6px;white-space:nowrap;font-size:5.75px">09:00</div>
<div class="abs" style="left:354.2px;top:53.2px;width:0.5px;height:9.6px;background:#e2e2e2"></div>
<div class="abs" style="left:354.2px;top:62.8px;width:0.5px;height:53.19999999999999px;background:#ececec"></div>
<div class="abs" style="left:366.93px;top:62.8px;width:0.5px;height:53.19999999999999px;background:#f3f3f3"></div>
<div class="abs" style="left:356.2px;top:55px;font-size:5.9px;color:#5b5b5b;line-height:6.6px;white-space:nowrap;font-size:5.75px">10:00</div>
<div class="abs" style="left:379.65px;top:53.2px;width:0.5px;height:9.6px;background:#e2e2e2"></div>
<div class="abs" style="left:379.65px;top:62.8px;width:0.5px;height:53.19999999999999px;background:#ececec"></div>
<div class="abs" style="left:392.38px;top:62.8px;width:0.5px;height:53.19999999999999px;background:#f3f3f3"></div>
<div class="abs" style="left:381.65px;top:55px;font-size:5.9px;color:#5b5b5b;line-height:6.6px;white-space:nowrap;font-size:5.75px">11:00</div>
<div class="abs" style="left:405.1px;top:53.2px;width:0.5px;height:9.6px;background:#e2e2e2"></div>
<div class="abs" style="left:405.1px;top:62.8px;width:0.5px;height:53.19999999999999px;background:#ececec"></div>
<div class="abs" style="left:417.83px;top:62.8px;width:0.5px;height:53.19999999999999px;background:#f3f3f3"></div>
<div class="abs" style="left:407.1px;top:55px;font-size:5.9px;color:#5b5b5b;line-height:6.6px;white-space:nowrap;font-size:5.75px">12:00</div>
<div class="abs" style="left:430.55px;top:53.2px;width:0.5px;height:9.6px;background:#e2e2e2"></div>
<div class="abs" style="left:430.55px;top:62.8px;width:0.5px;height:53.19999999999999px;background:#ececec"></div>
<div class="abs" style="left:443.28px;top:62.8px;width:0.5px;height:53.19999999999999px;background:#f3f3f3"></div>
<div class="abs" style="left:432.55px;top:55px;font-size:5.9px;color:#5b5b5b;line-height:6.6px;white-space:nowrap;font-size:5.75px">13:00</div>
<div class="abs" style="left:456.0px;top:53.2px;width:0.5px;height:9.6px;background:#e2e2e2"></div>
<div class="abs" style="left:456.0px;top:62.8px;width:0.5px;height:53.19999999999999px;background:#ececec"></div>
<div class="abs" style="left:468.73px;top:62.8px;width:0.5px;height:53.19999999999999px;background:#f3f3f3"></div>
<div class="abs" style="left:458.0px;top:55px;font-size:5.9px;color:#5b5b5b;line-height:6.6px;white-space:nowrap;font-size:5.75px">14:00</div>
<div class="abs" style="left:481.45px;top:53.2px;width:0.5px;height:9.6px;background:#e2e2e2"></div>
<div class="abs" style="left:481.45px;top:62.8px;width:0.5px;height:53.19999999999999px;background:#ececec"></div>
<div class="abs" style="left:494.18px;top:62.8px;width:0.5px;height:53.19999999999999px;background:#f3f3f3"></div>
<div class="abs" style="left:483.45px;top:55px;font-size:5.9px;color:#5b5b5b;line-height:6.6px;white-space:nowrap;font-size:5.75px">15:00</div>
<div class="abs" style="left:506.9px;top:53.2px;width:0.5px;height:9.6px;background:#e2e2e2"></div>
<div class="abs" style="left:506.9px;top:62.8px;width:0.5px;height:53.19999999999999px;background:#ececec"></div>
<div class="abs" style="left:519.62px;top:62.8px;width:0.5px;height:53.19999999999999px;background:#f3f3f3"></div>
<div class="abs" style="left:508.9px;top:55px;font-size:5.9px;color:#5b5b5b;line-height:6.6px;white-space:nowrap;font-size:5.75px">16:00</div>
<div class="abs" style="left:532.35px;top:53.2px;width:0.5px;height:9.6px;background:#e2e2e2"></div>
<div class="abs" style="left:532.35px;top:62.8px;width:0.5px;height:53.19999999999999px;background:#ececec"></div>
<div class="abs" style="left:545.08px;top:62.8px;width:0.5px;height:53.19999999999999px;background:#f3f3f3"></div>
<div class="abs" style="left:534.35px;top:55px;font-size:5.9px;color:#5b5b5b;line-height:6.6px;white-space:nowrap;font-size:5.75px">17:00</div>
<div class="abs" style="left:557.8px;top:53.2px;width:0.5px;height:9.6px;background:#e2e2e2"></div>
<div class="abs" style="left:557.8px;top:62.8px;width:0.5px;height:53.19999999999999px;background:#ececec"></div>
<div class="abs" style="left:570.52px;top:62.8px;width:0.5px;height:53.19999999999999px;background:#f3f3f3"></div>
<div class="abs" style="left:559.8px;top:55px;font-size:5.9px;color:#5b5b5b;line-height:6.6px;white-space:nowrap;font-size:5.75px">18:00</div>
<div class="abs" style="left:583.25px;top:53.2px;width:0.5px;height:9.6px;background:#e2e2e2"></div>
<div class="abs" style="left:583.25px;top:62.8px;width:0.5px;height:53.19999999999999px;background:#ececec"></div>
<div class="abs" style="left:595.98px;top:62.8px;width:0.5px;height:53.19999999999999px;background:#f3f3f3"></div>
<div class="abs" style="left:585.25px;top:55px;font-size:5.9px;color:#5b5b5b;line-height:6.6px;white-space:nowrap;font-size:5.75px">19:00</div>
<div class="abs" style="left:608.7px;top:53.2px;width:0.5px;height:9.6px;background:#e2e2e2"></div>
<div class="abs" style="left:608.7px;top:62.8px;width:0.5px;height:53.19999999999999px;background:#ececec"></div>
<div class="abs" style="left:621.43px;top:62.8px;width:0.5px;height:53.19999999999999px;background:#f3f3f3"></div>
<div class="abs" style="left:610.7px;top:55px;font-size:5.9px;color:#5b5b5b;line-height:6.6px;white-space:nowrap;font-size:5.75px">20:00</div>
<div class="abs" style="left:634.15px;top:53.2px;width:0.5px;height:9.6px;background:#e2e2e2"></div>
<div class="abs" style="left:634.15px;top:62.8px;width:0.5px;height:53.19999999999999px;background:#ececec"></div>
<div class="abs" style="left:646.88px;top:62.8px;width:0.5px;height:53.19999999999999px;background:#f3f3f3"></div>
<div class="abs" style="left:636.15px;top:55px;font-size:5.9px;color:#5b5b5b;line-height:6.6px;white-space:nowrap;font-size:5.75px">21:00</div>
<div class="abs" style="left:659.6px;top:53.2px;width:0.5px;height:9.6px;background:#e2e2e2"></div>
<div class="abs" style="left:659.6px;top:62.8px;width:0.5px;height:53.19999999999999px;background:#ececec"></div>
<div class="abs" style="left:672.33px;top:62.8px;width:0.5px;height:53.19999999999999px;background:#f3f3f3"></div>
<div class="abs" style="left:661.6px;top:55px;font-size:5.9px;color:#5b5b5b;line-height:6.6px;white-space:nowrap;font-size:5.75px">22:00</div>
<div class="abs" style="left:685.05px;top:53.2px;width:0.5px;height:9.6px;background:#e2e2e2"></div>
<div class="abs" style="left:685.05px;top:62.8px;width:0.5px;height:53.19999999999999px;background:#ececec"></div>
<div class="abs" style="left:697.77px;top:62.8px;width:0.5px;height:53.19999999999999px;background:#f3f3f3"></div>
<div class="abs" style="left:687.05px;top:55px;font-size:5.9px;color:#5b5b5b;line-height:6.6px;white-space:nowrap;font-size:5.75px">23:00</div>
<div class="abs" style="left:710.5px;top:53.2px;width:0.5px;height:9.6px;background:#e2e2e2"></div>
<div class="abs" style="left:277.85px;top:62.8px;width:0.5px;height:53.19999999999999px;background:#ececec"></div>
<div class="abs" style="left:290.57px;top:62.8px;width:0.5px;height:53.19999999999999px;background:#f3f3f3"></div>
<div class="abs" style="left:291px;top:55px;font-size:5.9px;color:#5b5b5b;line-height:6.6px;white-space:nowrap;font-size:5.75px">0</div>
<div class="abs" style="left:290.8px;top:68.1px;width:413.2px;height:0.5px;background:#e8e8e8"></div>
<div class="abs" style="left:290.8px;top:86.4px;width:413.2px;height:0.5px;background:#e8e8e8"></div>
<div class="abs" style="left:290.8px;top:110.8px;width:413.2px;height:0.5px;background:#e8e8e8"></div>
<div class="abs" style="left:704px;top:86.4px;width:4px;height:0.5px;background:#e8e8e8"></div>
<div class="abs" style="left:380.7px;top:62.9px;width:15.7px;height:5.2px;background:#6f6f6f"></div>
<div class="abs" style="left:380.7px;top:68.1px;width:15.7px;height:17.3px;background:#7d7d7d"></div>
<div class="abs" style="left:349.2px;top:86.4px;width:15.7px;height:23.8px;background:#f7a52b"></div>
<div class="abs" style="left:346.9px;top:110.8px;width:25.8px;height:5.2px;background:#707070"></div>
<div class="abs" style="left:396.1px;top:54.5px;width:0.7px;height:64.5px;background:#e8262a"></div>
<svg class="abs" style="left:394.3px;top:53.4px" width="4.4" height="3" viewBox="0 0 4.4 3"><path d="M0,0 H4.4 L2.2,2.8Z" fill="#e8262a"/></svg>
<div class="abs" style="left:421.4px;top:116px;width:282.6px;height:2.6px;background:#a8b2b8;border-radius:1px"></div>
<!--/MON--></div>
<div id="bstrip" class="abs"></div>
</body></html>
